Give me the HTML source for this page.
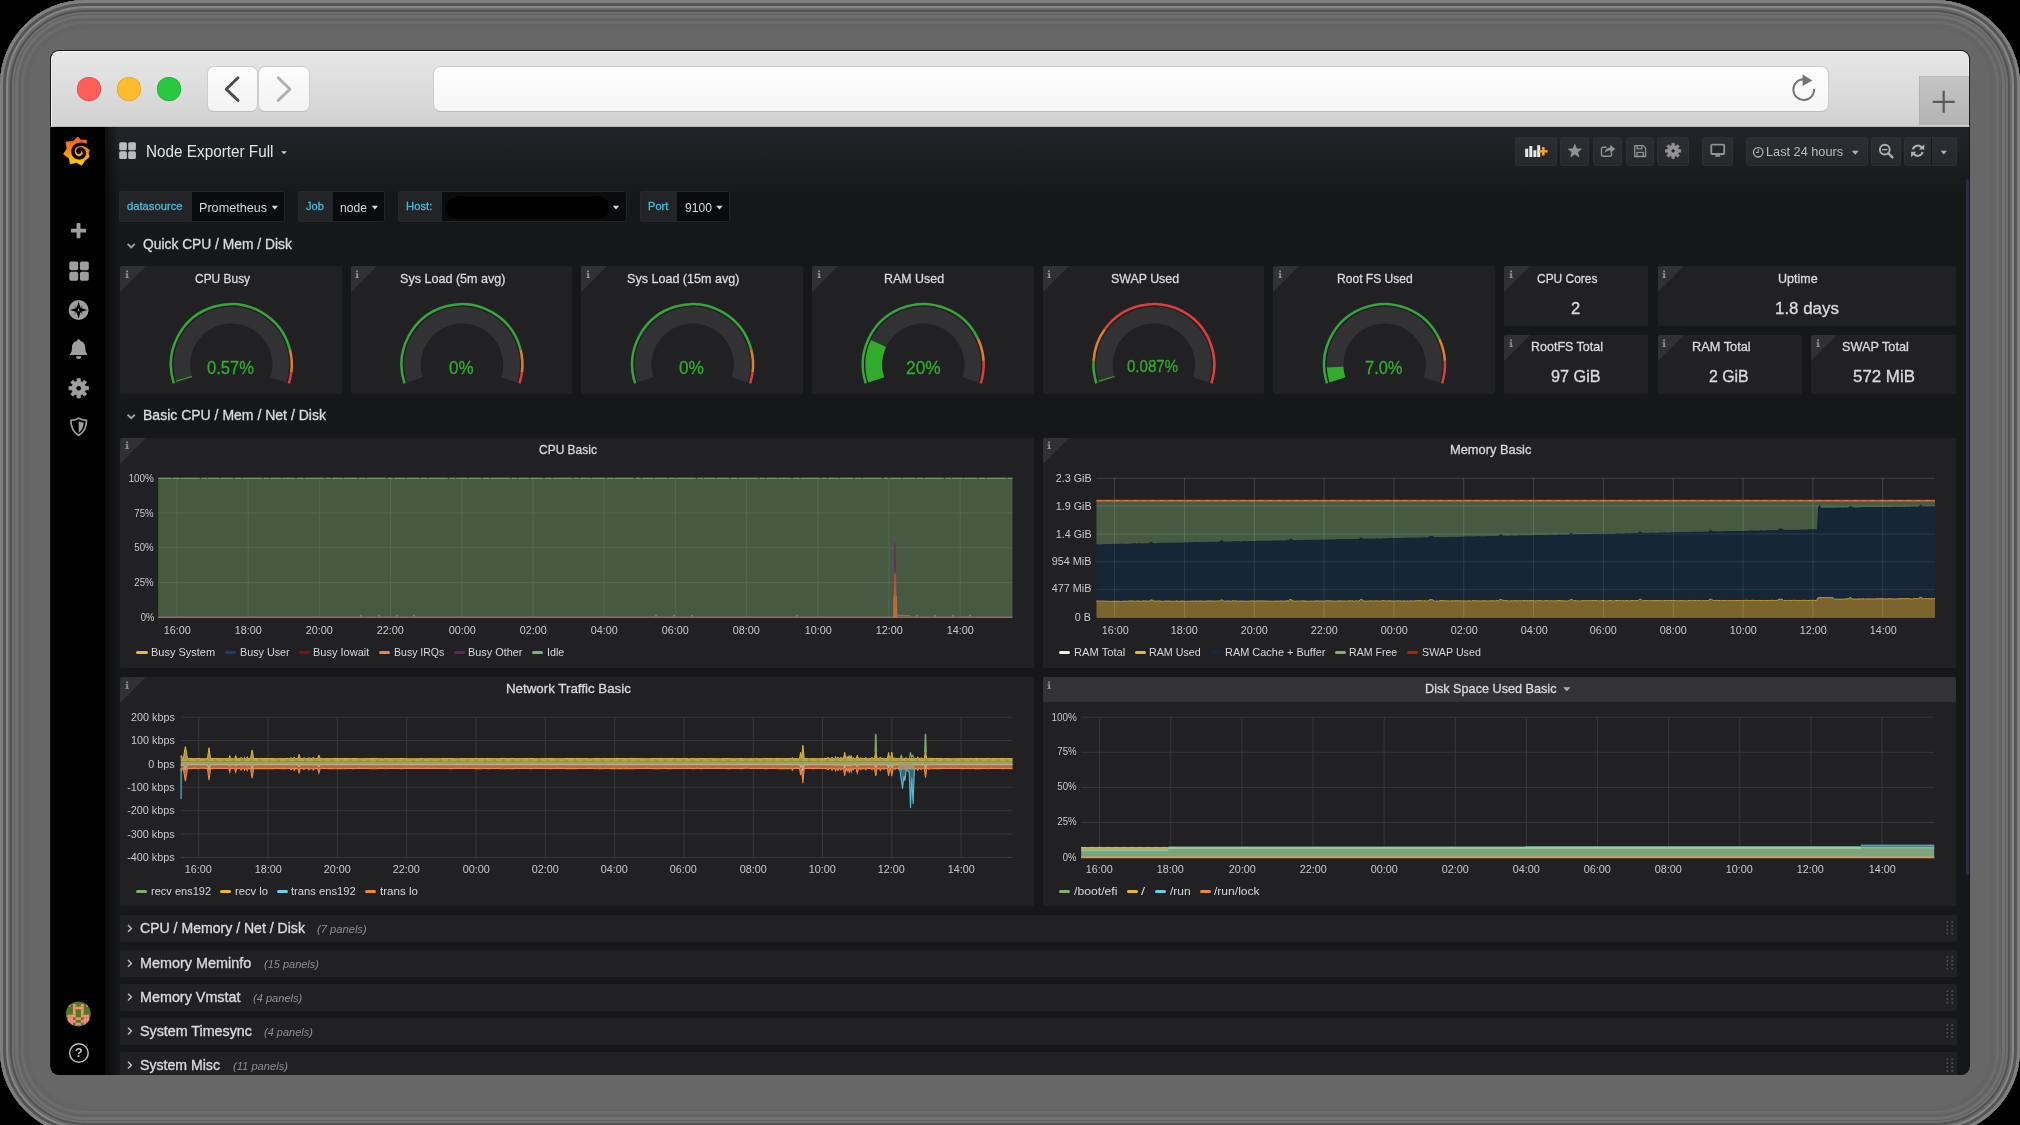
<!DOCTYPE html>
<html><head><meta charset="utf-8"><title>Node Exporter Full - Grafana</title>
<style>
*{box-sizing:border-box;margin:0;padding:0}
html,body{width:2020px;height:1125px;overflow:hidden;background:#000}
body{position:relative;font-family:"Liberation Sans",sans-serif}
#halo{position:absolute;left:0;top:0;width:2020px;height:1135px;border-radius:85px;background:#676767;
 box-shadow:inset 0 0 0 3px #808080,inset 0 0 0 6px #555,inset 0 0 0 8px #868686,inset 0 0 0 10px #6a6a6a,inset 0 0 0 12px #525252,inset 0 0 0 14px #707070,inset 0 0 0 15px #606060,inset 0 0 0 18px #707070,inset 0 0 0 21px #636363,inset 0 0 0 24px #6c6c6c,inset 0 0 0 29px #646464}
#win{position:absolute;left:50px;top:50px;width:1920px;height:1025px;border-radius:9px;overflow:hidden;background:#111}
#g{will-change:transform;position:absolute;left:-50px;top:-50px;width:2020px;height:1125px}
#g div,#g span,#g svg{position:absolute}
.t{white-space:nowrap;display:block}
#bar{left:50px;top:50px;width:1920px;height:77px;background:linear-gradient(#e7e7e7,#e1e1e1 30%,#d1d1d1);border:1px solid #1b1b1b;border-bottom:1px solid #b9b9b9;border-radius:9px 9px 0 0;box-shadow:inset 0 1px 0 #fbfbfb,inset 1px 0 0 #efefef,inset -1px 0 0 #efefef}
#appbg{left:51px;top:127px;width:1918px;height:948px;background:linear-gradient(180deg,#222326 6px,#161719 72px)}
.tl{width:24px;height:24px;border-radius:12px;top:77px}
.nb{top:66px;height:45.5px;background:linear-gradient(#fcfcfc,#f3f3f3);border:1px solid #cdcdcd;border-bottom-color:#bcbcbc;border-radius:7px}
#side{left:51px;top:127px;width:54px;height:950px;background:#000}
#sideg{left:105px;top:127px;width:14px;height:950px;background:linear-gradient(90deg,rgba(0,0,0,.55),rgba(0,0,0,0))}
.p{background:#212124;border-radius:2px}
.btn{top:137px;height:28.5px;background:linear-gradient(#2c2d30,#27282b);border:1px solid #2f3033;border-radius:2.5px}
.vl{top:191.3px;height:30.5px;background:#222428;border:1px solid #27282c;border-right:0;border-radius:2.5px 0 0 2.5px}
.vv{top:191.3px;height:30.5px;background:#0a0b0d;border:1px solid #232427;border-radius:0 2.5px 2.5px 0}
.row{left:119.5px;width:1837.5px;height:27.3px;background:#212124;border-radius:2px}
.crn{width:0;height:0;border-top:26px solid #313134;border-right:26px solid transparent;border-top-left-radius:2px}
</style></head>
<body>
<div id="halo"></div>
<div id="win"><div id="g">
<div id="appbg"></div><div id="bar"></div>
<div class="tl" style="left:77px;background:#fc5f57;box-shadow:inset 0 0 0 .6px #e2463f"></div>
<div class="tl" style="left:117px;background:#fdbc2e;box-shadow:inset 0 0 0 .6px #dfa023"></div>
<div class="tl" style="left:157px;background:#28c840;box-shadow:inset 0 0 0 .6px #1eab2c"></div>
<div class="nb" style="left:206.600px;width:51px"></div>
<div class="nb" style="left:258.400px;width:51.200px"></div>
<div class="nb" style="left:433px;width:1395.5px;border-radius:7.5px;background:linear-gradient(#fdfdfd,#f6f6f6)"></div>
<div style="left:1919px;top:76px;width:50px;height:48.800px;background:linear-gradient(#c5c5c5,#b3b3b3);border-left:1px solid #b1b1b1;border-top:1px solid #bbb"></div>
<svg width="2020" height="140" style="left:0;top:0" viewBox="0 0 2020 140" fill="none"><path d="M238 77.8L226.2 89.2L238 100.4" stroke="#4d4d4d" stroke-width="2.9" stroke-linecap="round" stroke-linejoin="round"/><path d="M278.2 77.8L290 89.2L278.2 100.4" stroke="#b0b0b0" stroke-width="2.9" stroke-linecap="round" stroke-linejoin="round"/><path d="M1814.09 89.06A10.4 10.4 0 1 1 1803.34 79.21" stroke="#737373" stroke-width="1.9"/><path d="M1802.6 74.4L1812.4 80.6L1802.6 86Z" fill="#737373"/><path d="M1932.7 101.8H1954.7M1943.7 90.8V112.8" stroke="#5a5a5a" stroke-width="2.200"/></svg>
<div id="side"></div><div id="sideg"></div>
<svg width="2020" height="1125" style="left:0;top:0" viewBox="0 0 2020 1125"><defs><linearGradient id="lg" x1="0" y1="0" x2="0" y2="1"><stop offset="0" stop-color="#f05a28"/><stop offset=".55" stop-color="#f8931c"/><stop offset="1" stop-color="#fbd013"/></linearGradient></defs><path d="M77.6 136.8L80.9 140.2L86.3 140.0L86.3 144.2L89.5 149.1L88.3 153.4L89.1 156.9L85.0 160.2L81.6 165.2L76.5 162.4L70.4 163.8L69.2 158.2L63.5 154.1L67.1 148.7L66.0 142.1L73.5 141.2Z" fill="url(#lg)" stroke="url(#lg)" stroke-width=".8" stroke-linejoin="round"/><path d="M89.33 147.73L87.88 146.46L86.31 145.57L84.81 144.91L83.38 144.4L81.94 144.18L80.55 144.22L79.25 144.5L78.02 144.73L76.86 145.17L75.81 145.79L74.89 146.58L74.13 147.51L73.55 148.54L73.17 149.64L72.99 150.78L73 151.93L73.17 153.04L73.54 154.11L74.07 155.09L74.77 155.96L75.6 156.69L76.54 157.26L77.56 157.66L78.63 157.87L79.72 157.9L80.77 157.67L81.75 157.26L82.63 156.7L83.38 156.01L83.99 155.21L84.44 154.33L84.48 153.32L84.32 152.38L84 151.54L83.63 150.82L83.16 150.22L82.62 149.75L82.03 149.42L81.48 149.16L80.93 149.02L80.38 148.98L79.87 149.05L79.41 149.2L79 149.36L78.65 149.59L78.35 149.86L78.12 150.17L77.97 150.5L77.88 150.84L77.86 151.17L77.9 151.48L78 151.75L78.16 151.99L78.34 152.17L78.55 152.3L78.76 152.37L78.96 152.39L79.15 152.36L79.31 152.29L79.43 152.2" fill="none" stroke="#000" stroke-width="3.400" stroke-linecap="round" stroke-linejoin="round"/><rect x="70.9" y="228.7" width="15.2" height="3.9" rx=".9" fill="#9e9e9e"/><rect x="76.55" y="223" width="3.9" height="15.2" rx=".9" fill="#9e9e9e"/><rect x="69.3" y="261.4" width="8.9" height="8.9" rx="1.8" fill="#9e9e9e"/><rect x="69.3" y="271.79999999999995" width="8.9" height="8.9" rx="1.8" fill="#9e9e9e"/><rect x="79.89999999999999" y="261.4" width="8.9" height="8.9" rx="1.8" fill="#9e9e9e"/><rect x="79.89999999999999" y="271.79999999999995" width="8.9" height="8.9" rx="1.8" fill="#9e9e9e"/><circle cx="78.6" cy="310" r="10" fill="#9e9e9e"/><path d="M78.6 301.4L80.6 308L87.2 310L80.6 312L78.6 318.6L76.6 312L70 310L76.6 308Z" fill="#000"/><path d="M73.6 305L77.6 308.4L76.9 309.1ZM83.6 305L80.3 309.1L79.6 308.4ZM73.6 315L76.9 310.9L77.6 311.6ZM83.6 315L79.6 311.6L80.3 310.9Z" fill="#000"/><circle cx="78.6" cy="310" r=".9" fill="#9e9e9e"/><path d="M78.6 339.2c1 0 1.5.7 1.5 1.5c3.6.9 5.2 3.8 5.2 7.4c0 3.2.6 4.6 1.9 5.8v1.2H70v-1.2c1.3-1.2 1.9-2.6 1.9-5.8c0-3.6 1.6-6.500 5.2-7.400c0-.8.5-1.5 1.500-1.500zM76 356.300h5.200a2.600 2.600 0 0 1-5.200 0z" fill="#9e9e9e"/><path d="M77.07 381.39L77.15 378.42L80.25 378.42L80.33 381.39L82.36 382.23L84.52 380.19L86.71 382.38L84.67 384.54L85.51 386.57L88.48 386.65L88.48 389.75L85.51 389.83L84.67 391.86L86.71 394.02L84.52 396.21L82.36 394.17L80.33 395.01L80.25 397.98L77.15 397.98L77.07 395.01L75.04 394.17L72.88 396.21L70.69 394.02L72.73 391.86L71.89 389.83L68.92 389.75L68.92 386.65L71.89 386.57L72.73 384.54L70.69 382.38L72.88 380.19L75.04 382.23Z" fill="#9e9e9e" stroke="#9e9e9e" stroke-width=".8" stroke-linejoin="round"/><circle cx="78.7" cy="388.2" r="2.3" fill="#000"/><path d="M78.7 418.2c2.600 1.400 5.200 2 7.800 2.100c0 7.200-2.900 12.300-7.800 15.100c-4.900-2.800-7.800-7.900-7.800-15.100c2.600-.1 5.200-.7 7.800-2.100z" fill="none" stroke="#9e9e9e" stroke-width="1.7" stroke-linejoin="round"/><path d="M78.7 421.200c1.700.8 3.300 1.200 5 1.400c-.3 4.900-2.100 8.200-5 10.400z" fill="#9e9e9e"/><clipPath id="avc"><circle cx="78.3" cy="1014" r="12.5"/></clipPath><circle cx="78.3" cy="1014" r="12.5" fill="#507a1f"/><g clip-path="url(#avc)"><rect x="67.6" y="1004" width="2.700" height="2.700" fill="#f98d80"/><rect x="72.94" y="1004" width="2.700" height="2.700" fill="#f98d80"/><rect x="80.95" y="1004" width="2.700" height="2.700" fill="#f98d80"/><rect x="86.29" y="1004" width="2.700" height="2.700" fill="#f98d80"/><rect x="72.94" y="1006.67" width="2.700" height="2.700" fill="#f98d80"/><rect x="75.61" y="1006.67" width="2.700" height="2.700" fill="#f98d80"/><rect x="78.28" y="1006.67" width="2.700" height="2.700" fill="#f98d80"/><rect x="80.95" y="1006.67" width="2.700" height="2.700" fill="#f98d80"/><rect x="72.94" y="1009.34" width="2.700" height="2.700" fill="#f98d80"/><rect x="80.95" y="1009.34" width="2.700" height="2.700" fill="#f98d80"/><rect x="72.94" y="1012.01" width="2.700" height="2.700" fill="#f98d80"/><rect x="80.95" y="1012.01" width="2.700" height="2.700" fill="#f98d80"/><rect x="67.6" y="1014.68" width="2.700" height="2.700" fill="#f98d80"/><rect x="70.27" y="1014.68" width="2.700" height="2.700" fill="#f98d80"/><rect x="72.94" y="1014.68" width="2.700" height="2.700" fill="#f98d80"/><rect x="80.95" y="1014.68" width="2.700" height="2.700" fill="#f98d80"/><rect x="83.62" y="1014.68" width="2.700" height="2.700" fill="#f98d80"/><rect x="86.29" y="1014.68" width="2.700" height="2.700" fill="#f98d80"/><rect x="67.6" y="1017.35" width="2.700" height="2.700" fill="#f98d80"/><rect x="70.27" y="1017.35" width="2.700" height="2.700" fill="#f98d80"/><rect x="75.61" y="1017.35" width="2.700" height="2.700" fill="#f98d80"/><rect x="78.28" y="1017.35" width="2.700" height="2.700" fill="#f98d80"/><rect x="83.62" y="1017.35" width="2.700" height="2.700" fill="#f98d80"/><rect x="86.29" y="1017.35" width="2.700" height="2.700" fill="#f98d80"/><rect x="67.6" y="1020.02" width="2.700" height="2.700" fill="#f98d80"/><rect x="70.27" y="1020.02" width="2.700" height="2.700" fill="#f98d80"/><rect x="72.94" y="1020.02" width="2.700" height="2.700" fill="#f98d80"/><rect x="80.95" y="1020.02" width="2.700" height="2.700" fill="#f98d80"/><rect x="83.62" y="1020.02" width="2.700" height="2.700" fill="#f98d80"/><rect x="86.29" y="1020.02" width="2.700" height="2.700" fill="#f98d80"/><rect x="70.27" y="1022.69" width="2.700" height="2.700" fill="#f98d80"/><rect x="75.61" y="1022.69" width="2.700" height="2.700" fill="#f98d80"/><rect x="78.28" y="1022.69" width="2.700" height="2.700" fill="#f98d80"/><rect x="83.62" y="1022.69" width="2.700" height="2.700" fill="#f98d80"/></g><circle cx="78.9" cy="1053" r="9.300" fill="none" stroke="#bdbdbd" stroke-width="1.500"/></svg>
<span class="t" style="left:75.08px;top:1045.4px;font-size:12.5px;line-height:16px;color:#c4c4c4;transform:scaleX(1.0000);transform-origin:50% 50%;font-weight:bold;">?</span>
<div class="btn" style="left:1515.4px;width:41.2px"></div>
<div class="btn" style="left:1560.4px;width:28.2px"></div>
<div class="btn" style="left:1593.2px;width:28.7px"></div>
<div class="btn" style="left:1626.2px;width:27.6px"></div>
<div class="btn" style="left:1657px;width:32px"></div>
<div class="btn" style="left:1702.2px;width:30.5px"></div>
<div class="btn" style="left:1746.4px;width:121.5px"></div>
<div class="btn" style="left:1871.2px;width:29.7px"></div>
<div class="btn" style="left:1904px;width:52.5px"></div>
<div style="left:1931.300px;top:138px;width:1px;height:26.500px;background:#19191b"></div>
<div class="vl" style="left:118.9px;width:72px"></div><div class="vv" style="left:190.9px;width:94.2px"></div>
<div class="vl" style="left:298.2px;width:33.9px"></div><div class="vv" style="left:332.1px;width:53px"></div>
<div class="vl" style="left:398px;width:42.5px"></div><div class="vv" style="left:440.5px;width:186.8px"></div>
<div class="vl" style="left:640px;width:35.7px"></div><div class="vv" style="left:675.7px;width:54.6px"></div>
<svg width="2020" height="500" style="left:0;top:0" viewBox="0 0 2020 500"><rect x="119.2" y="142.3" width="7.700" height="7.900" rx="1.500" fill="#b9bbbc"/><rect x="119.2" y="151.20000000000002" width="7.700" height="7.900" rx="1.500" fill="#b9bbbc"/><rect x="128.2" y="142.3" width="7.700" height="7.900" rx="1.500" fill="#b9bbbc"/><rect x="128.2" y="151.20000000000002" width="7.700" height="7.900" rx="1.500" fill="#b9bbbc"/><path d="M281.2 151.200h5.600l-2.800 3.100z" fill="#d0d0d0"/><rect x="1525.2" y="148.7" width="3" height="8.3" fill="#e8e8e8"/><rect x="1529.3" y="146" width="3" height="11" fill="#e8e8e8"/><rect x="1533.4" y="150.3" width="3" height="6.7" fill="#e8e8e8"/><rect x="1537.2" y="145.2" width="3" height="11.8" fill="#e8e8e8"/><path d="M1539 151.2H1547.600M1543.300 146.900V155.500" stroke="#f9a11b" stroke-width="2.500"/><path d="M1574.8 144.3L1576.5 148.85L1581.36 149.07L1577.56 152.1L1578.86 156.78L1574.8 154.1L1570.74 156.78L1572.04 152.1L1568.24 149.07L1573.1 148.85Z" fill="#929292" stroke="#929292" stroke-width=".8" stroke-linejoin="round"/><path d="M1606.600 147.200h-3.400a1.700 1.700 0 0 0-1.700 1.700v5.700a1.700 1.700 0 0 0 1.700 1.700h6.700a1.700 1.700 0 0 0 1.700-1.700v-2.200" fill="none" stroke="#929292" stroke-width="1.400"/><path d="M1604.600 153.400c.2-3.800 2.100-5.800 5.700-6v-2.600l4.800 4.200l-4.800 4.200v-2.600c-2.700-.1-4.400.7-5.700 2.800z" fill="#929292"/><path d="M1634.700 145.600h8.400l2.500 2.500v8.400h-10.900zM1637.100 145.600v3.300h4.700v-3.300M1637 156.500v-4.100h6.300v4.100" fill="none" stroke="#929292" stroke-width="1.300" stroke-linejoin="round"/><path d="M1671.82 145.55L1671.9 143.29L1674.3 143.29L1674.38 145.55L1675.97 146.21L1677.63 144.67L1679.33 146.37L1677.79 148.03L1678.45 149.62L1680.71 149.7L1680.71 152.1L1678.45 152.18L1677.79 153.77L1679.33 155.43L1677.63 157.13L1675.97 155.59L1674.38 156.25L1674.3 158.51L1671.9 158.51L1671.82 156.25L1670.23 155.59L1668.57 157.13L1666.87 155.43L1668.41 153.77L1667.75 152.18L1665.49 152.1L1665.49 149.7L1667.75 149.62L1668.41 148.03L1666.87 146.37L1668.57 144.67L1670.23 146.21Z" fill="#929292" stroke="#929292" stroke-width=".8" stroke-linejoin="round"/><circle cx="1673.1" cy="150.9" r="1.7" fill="#28292c"/><rect x="1711.300" y="144.700" width="12.900" height="9.300" rx=".8" fill="#222326" stroke="#929292" stroke-width="1.800"/><path d="M1715.800 155h3.900l.9 1.700h-5.700z" fill="#929292"/><circle cx="1758.200" cy="152.300" r="4.700" fill="none" stroke="#b0b0b0" stroke-width="1.300"/><path d="M1758.200 149.300v3.200h-2.200" fill="none" stroke="#b0b0b0" stroke-width="1.100"/><path d="M1851.800 150.800h7l-3.500 3.900z" fill="#b0b0b0"/><circle cx="1884.800" cy="149.600" r="4.900" fill="none" stroke="#b0b0b0" stroke-width="1.900"/><path d="M1888.400 153.300l4 4.100" stroke="#b0b0b0" stroke-width="2.300" stroke-linecap="round"/><path d="M1882.200 149.600h5.200" stroke="#b0b0b0" stroke-width="1.400"/><path d="M1912.77 149.38A5.1 5.1 0 0 1 1922.12 148.15" fill="none" stroke="#b0b0b0" stroke-width="2"/><path d="M1922.63 152.02A5.1 5.1 0 0 1 1913.28 153.25" fill="none" stroke="#b0b0b0" stroke-width="2"/><path d="M1924.300 144.200v5.400h-5.400zM1911.100 157.200v-5.400h5.400z" fill="#b0b0b0"/><path d="M1940.600 150.800h6.400l-3.200 3.600z" fill="#b0b0b0"/><path d="M271.6 205.800h6.400l-3.200 3.600z" fill="#d8d9da"/><path d="M371.7 205.800h6.400l-3.200 3.600z" fill="#d8d9da"/><path d="M612.8 205.800h6.400l-3.200 3.600z" fill="#d8d9da"/><path d="M716.3 205.800h6.400l-3.200 3.600z" fill="#d8d9da"/><path d="M127.600 243.9l3.600 3.500l3.600-3.500" fill="none" stroke="#a2a2a2" stroke-width="1.900"/><path d="M127.600 414.8l3.600 3.500l3.600-3.500" fill="none" stroke="#a2a2a2" stroke-width="1.900"/><path d="M446.300 208c0-6.500 3.500-10 9-10.800c3-1.800 8-1.400 11-.2c30-.8 80 .3 125-.3c4-1.200 9-.8 11.500 1c4.500 1.300 6.500 4.800 6.400 9.500c0 7-3.200 10.500-9 11c-30 1-110 .6-143 .400c-7-.1-10.900-3.600-10.900-10.600z" fill="#000"/></svg>
<span class="t" style="left:145.8px;top:140.7px;font-size:16.3px;line-height:21px;color:#e4e4e4;transform:scaleX(0.9390);transform-origin:0 50%;">Node Exporter Full</span>
<span class="t" style="left:1766.2px;top:143.2px;font-size:13.2px;line-height:17px;color:#bcbcbc;transform:scaleX(0.9652);transform-origin:0 50%;">Last 24 hours</span>
<span class="t" style="left:127.1px;top:198.2px;font-size:11.6px;line-height:15px;color:#44bcd8;transform:scaleX(0.9670);transform-origin:0 50%;-webkit-text-stroke:0.3px #44bcd8;">datasource</span>
<span class="t" style="left:199.4px;top:199.7px;font-size:12.7px;line-height:17px;color:#d8d9da;transform:scaleX(0.9945);transform-origin:0 50%;">Prometheus</span>
<span class="t" style="left:306.1px;top:198.2px;font-size:11.6px;line-height:15px;color:#44bcd8;transform:scaleX(0.9517);transform-origin:0 50%;-webkit-text-stroke:0.3px #44bcd8;">Job</span>
<span class="t" style="left:340.4px;top:199.7px;font-size:12.7px;line-height:17px;color:#d8d9da;transform:scaleX(0.9521);transform-origin:0 50%;">node</span>
<span class="t" style="left:406.3px;top:198.2px;font-size:11.6px;line-height:15px;color:#44bcd8;transform:scaleX(0.9714);transform-origin:0 50%;-webkit-text-stroke:0.3px #44bcd8;">Host:</span>
<span class="t" style="left:648px;top:198.2px;font-size:11.6px;line-height:15px;color:#44bcd8;transform:scaleX(0.9542);transform-origin:0 50%;-webkit-text-stroke:0.3px #44bcd8;">Port</span>
<span class="t" style="left:685.1px;top:199.7px;font-size:12.7px;line-height:17px;color:#d8d9da;transform:scaleX(0.9521);transform-origin:0 50%;">9100</span>
<span class="t" style="left:143.3px;top:235.4px;font-size:14.1px;line-height:18px;color:#d8d9da;transform:scaleX(0.9797);transform-origin:0 50%;-webkit-text-stroke:0.35px #d8d9da;">Quick CPU / Mem / Disk</span>
<span class="t" style="left:143.3px;top:406.3px;font-size:14.1px;line-height:18px;color:#d8d9da;transform:scaleX(0.9940);transform-origin:0 50%;-webkit-text-stroke:0.35px #d8d9da;">Basic CPU / Mem / Net / Disk</span>
<div class="p" style="left:120px;top:266.4px;width:221.7px;height:127.5px"></div>
<div class="crn" style="left:120px;top:266.4px"></div><svg width="5" height="9" viewBox="0 0 5 9" style="left:124.8px;top:269.8px"><path d="M1.100 .4h1.900v1.900h-1.900zM.5 3.300h2.600v3.600h.6v1h-3.200v-1h.8v-2.700h-.8z" fill="#8f8f8f"/></svg>
<span class="t" style="left:195.1px;top:270.1px;font-size:13px;line-height:17px;color:#d8d9da;transform:scaleX(0.9189);transform-origin:0 50%;-webkit-text-stroke:0.3px #d8d9da;">CPU Busy</span>
<span class="t" style="left:207.4px;top:355.9px;font-size:18.2px;line-height:24px;color:#32ac2d;transform:scaleX(0.9088);transform-origin:0 50%;-webkit-text-stroke:0.3px #32ac2d;">0.57%</span>
<div class="p" style="left:350.64px;top:266.4px;width:221.7px;height:127.5px"></div>
<div class="crn" style="left:350.64px;top:266.4px"></div><svg width="5" height="9" viewBox="0 0 5 9" style="left:355.44px;top:269.8px"><path d="M1.100 .4h1.900v1.900h-1.900zM.5 3.300h2.600v3.600h.6v1h-3.200v-1h.8v-2.700h-.8z" fill="#8f8f8f"/></svg>
<span class="t" style="left:400.2px;top:270.1px;font-size:13px;line-height:17px;color:#d8d9da;transform:scaleX(0.9670);transform-origin:0 50%;-webkit-text-stroke:0.3px #d8d9da;">Sys Load (5m avg)</span>
<span class="t" style="left:448.6px;top:355.9px;font-size:18.2px;line-height:24px;color:#32ac2d;transform:scaleX(0.9314);transform-origin:0 50%;-webkit-text-stroke:0.3px #32ac2d;">0%</span>
<div class="p" style="left:581.28px;top:266.4px;width:221.7px;height:127.5px"></div>
<div class="crn" style="left:581.28px;top:266.4px"></div><svg width="5" height="9" viewBox="0 0 5 9" style="left:586.08px;top:269.8px"><path d="M1.100 .4h1.900v1.900h-1.900zM.5 3.300h2.600v3.600h.6v1h-3.200v-1h.8v-2.700h-.8z" fill="#8f8f8f"/></svg>
<span class="t" style="left:627px;top:270.1px;font-size:13px;line-height:17px;color:#d8d9da;transform:scaleX(0.9662);transform-origin:0 50%;-webkit-text-stroke:0.3px #d8d9da;">Sys Load (15m avg)</span>
<span class="t" style="left:679.3px;top:355.9px;font-size:18.2px;line-height:24px;color:#32ac2d;transform:scaleX(0.9504);transform-origin:0 50%;-webkit-text-stroke:0.3px #32ac2d;">0%</span>
<div class="p" style="left:811.92px;top:266.4px;width:221.7px;height:127.5px"></div>
<div class="crn" style="left:811.92px;top:266.4px"></div><svg width="5" height="9" viewBox="0 0 5 9" style="left:816.72px;top:269.8px"><path d="M1.100 .4h1.900v1.900h-1.900zM.5 3.300h2.600v3.600h.6v1h-3.200v-1h.8v-2.700h-.8z" fill="#8f8f8f"/></svg>
<span class="t" style="left:884.2px;top:270.1px;font-size:13px;line-height:17px;color:#d8d9da;transform:scaleX(0.9563);transform-origin:0 50%;-webkit-text-stroke:0.3px #d8d9da;">RAM Used</span>
<span class="t" style="left:905.6px;top:355.9px;font-size:18.2px;line-height:24px;color:#32ac2d;transform:scaleX(0.9526);transform-origin:0 50%;-webkit-text-stroke:0.3px #32ac2d;">20%</span>
<div class="p" style="left:1042.56px;top:266.4px;width:221.7px;height:127.5px"></div>
<div class="crn" style="left:1042.56px;top:266.4px"></div><svg width="5" height="9" viewBox="0 0 5 9" style="left:1047.36px;top:269.8px"><path d="M1.100 .4h1.900v1.900h-1.900zM.5 3.300h2.600v3.600h.6v1h-3.200v-1h.8v-2.700h-.8z" fill="#8f8f8f"/></svg>
<span class="t" style="left:1111.3px;top:270.1px;font-size:13px;line-height:17px;color:#d8d9da;transform:scaleX(0.9507);transform-origin:0 50%;-webkit-text-stroke:0.3px #d8d9da;">SWAP Used</span>
<span class="t" style="left:1127.4px;top:355.9px;font-size:16.8px;line-height:22px;color:#32ac2d;transform:scaleX(0.8968);transform-origin:0 50%;-webkit-text-stroke:0.3px #32ac2d;">0.087%</span>
<div class="p" style="left:1273.2px;top:266.4px;width:221.7px;height:127.5px"></div>
<div class="crn" style="left:1273.2px;top:266.4px"></div><svg width="5" height="9" viewBox="0 0 5 9" style="left:1278px;top:269.8px"><path d="M1.100 .4h1.900v1.900h-1.900zM.5 3.300h2.600v3.600h.6v1h-3.200v-1h.8v-2.700h-.8z" fill="#8f8f8f"/></svg>
<span class="t" style="left:1337.3px;top:270.1px;font-size:13px;line-height:17px;color:#d8d9da;transform:scaleX(0.9284);transform-origin:0 50%;-webkit-text-stroke:0.3px #d8d9da;">Root FS Used</span>
<span class="t" style="left:1365.1px;top:355.9px;font-size:18.2px;line-height:24px;color:#32ac2d;transform:scaleX(0.9040);transform-origin:0 50%;-webkit-text-stroke:0.3px #32ac2d;">7.0%</span>
<div class="p" style="left:1503.8px;top:266.4px;width:144.3px;height:59.2px"></div>
<div class="crn" style="left:1503.8px;top:266.4px"></div><svg width="5" height="9" viewBox="0 0 5 9" style="left:1508.6px;top:269.8px"><path d="M1.100 .4h1.900v1.900h-1.900zM.5 3.300h2.600v3.600h.6v1h-3.200v-1h.8v-2.700h-.8z" fill="#8f8f8f"/></svg>
<span class="t" style="left:1537.1px;top:270px;font-size:13px;line-height:17px;color:#d8d9da;transform:scaleX(0.9188);transform-origin:0 50%;-webkit-text-stroke:0.3px #d8d9da;">CPU Cores</span>
<span class="t" style="left:1571.2px;top:297.9px;font-size:16.8px;line-height:22px;color:#d8d9da;transform:scaleX(0.9846);transform-origin:0 50%;-webkit-text-stroke:0.35px #d8d9da;">2</span>
<div class="p" style="left:1657.6px;top:266.4px;width:298.2px;height:59.2px"></div>
<div class="crn" style="left:1657.6px;top:266.4px"></div><svg width="5" height="9" viewBox="0 0 5 9" style="left:1662.4px;top:269.8px"><path d="M1.100 .4h1.900v1.900h-1.900zM.5 3.300h2.600v3.600h.6v1h-3.200v-1h.8v-2.700h-.8z" fill="#8f8f8f"/></svg>
<span class="t" style="left:1778.3px;top:270px;font-size:13px;line-height:17px;color:#d8d9da;transform:scaleX(0.9641);transform-origin:0 50%;-webkit-text-stroke:0.3px #d8d9da;">Uptime</span>
<span class="t" style="left:1774.5px;top:297.9px;font-size:16.8px;line-height:22px;color:#d8d9da;transform:scaleX(1.0062);transform-origin:0 50%;-webkit-text-stroke:0.35px #d8d9da;">1.8 days</span>
<div class="p" style="left:1503.8px;top:335.1px;width:144.3px;height:58.8px"></div>
<div class="crn" style="left:1503.8px;top:335.1px"></div><svg width="5" height="9" viewBox="0 0 5 9" style="left:1508.6px;top:338.5px"><path d="M1.100 .4h1.900v1.900h-1.900zM.5 3.300h2.600v3.600h.6v1h-3.200v-1h.8v-2.700h-.8z" fill="#8f8f8f"/></svg>
<span class="t" style="left:1531.1px;top:337.8px;font-size:13px;line-height:17px;color:#d8d9da;transform:scaleX(0.9612);transform-origin:0 50%;-webkit-text-stroke:0.3px #d8d9da;">RootFS Total</span>
<span class="t" style="left:1550.6px;top:365.9px;font-size:16.8px;line-height:22px;color:#d8d9da;transform:scaleX(0.9677);transform-origin:0 50%;-webkit-text-stroke:0.35px #d8d9da;">97 GiB</span>
<div class="p" style="left:1657.6px;top:335.1px;width:144.3px;height:58.8px"></div>
<div class="crn" style="left:1657.6px;top:335.1px"></div><svg width="5" height="9" viewBox="0 0 5 9" style="left:1662.4px;top:338.5px"><path d="M1.100 .4h1.900v1.900h-1.900zM.5 3.300h2.600v3.600h.6v1h-3.200v-1h.8v-2.700h-.8z" fill="#8f8f8f"/></svg>
<span class="t" style="left:1692.2px;top:337.8px;font-size:13px;line-height:17px;color:#d8d9da;transform:scaleX(0.9828);transform-origin:0 50%;-webkit-text-stroke:0.3px #d8d9da;">RAM Total</span>
<span class="t" style="left:1709.3px;top:365.9px;font-size:16.8px;line-height:22px;color:#d8d9da;transform:scaleX(0.9449);transform-origin:0 50%;-webkit-text-stroke:0.35px #d8d9da;">2 GiB</span>
<div class="p" style="left:1811.3px;top:335.1px;width:144.3px;height:58.8px"></div>
<div class="crn" style="left:1811.3px;top:335.1px"></div><svg width="5" height="9" viewBox="0 0 5 9" style="left:1816.1px;top:338.5px"><path d="M1.100 .4h1.900v1.900h-1.900zM.5 3.300h2.600v3.600h.6v1h-3.200v-1h.8v-2.700h-.8z" fill="#8f8f8f"/></svg>
<span class="t" style="left:1842.2px;top:337.8px;font-size:13px;line-height:17px;color:#d8d9da;transform:scaleX(0.9766);transform-origin:0 50%;-webkit-text-stroke:0.3px #d8d9da;">SWAP Total</span>
<span class="t" style="left:1852.9px;top:365.9px;font-size:16.8px;line-height:22px;color:#d8d9da;transform:scaleX(1.0060);transform-origin:0 50%;-webkit-text-stroke:0.35px #d8d9da;">572 MiB</span>
<div class="p" style="left:120px;top:437.8px;width:913.7px;height:229.8px"></div>
<div class="crn" style="left:120px;top:437.8px"></div><svg width="5" height="9" viewBox="0 0 5 9" style="left:124.8px;top:441.2px"><path d="M1.100 .4h1.900v1.900h-1.900zM.5 3.300h2.600v3.600h.6v1h-3.200v-1h.8v-2.700h-.8z" fill="#8f8f8f"/></svg>
<span class="t" style="left:539.4px;top:441.1px;font-size:13px;line-height:17px;color:#d8d9da;transform:scaleX(0.9213);transform-origin:0 50%;-webkit-text-stroke:0.3px #d8d9da;">CPU Basic</span>
<span class="t" style="left:125.1px;top:470.8px;font-size:11.3px;line-height:15px;color:#c9cacb;transform:scaleX(0.8789);transform-origin:100% 50%;">100%</span>
<span class="t" style="left:131.38px;top:505.55px;font-size:11.3px;line-height:15px;color:#c9cacb;transform:scaleX(0.8534);transform-origin:100% 50%;">75%</span>
<span class="t" style="left:131.38px;top:540.3px;font-size:11.3px;line-height:15px;color:#c9cacb;transform:scaleX(0.8534);transform-origin:100% 50%;">50%</span>
<span class="t" style="left:131.38px;top:575.05px;font-size:11.3px;line-height:15px;color:#c9cacb;transform:scaleX(0.8534);transform-origin:100% 50%;">25%</span>
<span class="t" style="left:137.67px;top:609.8px;font-size:11.3px;line-height:15px;color:#c9cacb;transform:scaleX(0.8388);transform-origin:100% 50%;">0%</span>
<span class="t" style="left:162.86px;top:622.8px;font-size:11.3px;line-height:15px;color:#c9cacb;transform:scaleX(0.9550);transform-origin:50% 50%;">16:00</span>
<span class="t" style="left:234.06px;top:622.8px;font-size:11.3px;line-height:15px;color:#c9cacb;transform:scaleX(0.9550);transform-origin:50% 50%;">18:00</span>
<span class="t" style="left:305.26px;top:622.8px;font-size:11.3px;line-height:15px;color:#c9cacb;transform:scaleX(0.9550);transform-origin:50% 50%;">20:00</span>
<span class="t" style="left:376.46px;top:622.8px;font-size:11.3px;line-height:15px;color:#c9cacb;transform:scaleX(0.9550);transform-origin:50% 50%;">22:00</span>
<span class="t" style="left:447.66px;top:622.8px;font-size:11.3px;line-height:15px;color:#c9cacb;transform:scaleX(0.9550);transform-origin:50% 50%;">00:00</span>
<span class="t" style="left:518.86px;top:622.8px;font-size:11.3px;line-height:15px;color:#c9cacb;transform:scaleX(0.9550);transform-origin:50% 50%;">02:00</span>
<span class="t" style="left:590.06px;top:622.8px;font-size:11.3px;line-height:15px;color:#c9cacb;transform:scaleX(0.9550);transform-origin:50% 50%;">04:00</span>
<span class="t" style="left:661.26px;top:622.8px;font-size:11.3px;line-height:15px;color:#c9cacb;transform:scaleX(0.9550);transform-origin:50% 50%;">06:00</span>
<span class="t" style="left:732.46px;top:622.8px;font-size:11.3px;line-height:15px;color:#c9cacb;transform:scaleX(0.9550);transform-origin:50% 50%;">08:00</span>
<span class="t" style="left:803.66px;top:622.8px;font-size:11.3px;line-height:15px;color:#c9cacb;transform:scaleX(0.9550);transform-origin:50% 50%;">10:00</span>
<span class="t" style="left:874.86px;top:622.8px;font-size:11.3px;line-height:15px;color:#c9cacb;transform:scaleX(0.9550);transform-origin:50% 50%;">12:00</span>
<span class="t" style="left:946.06px;top:622.8px;font-size:11.3px;line-height:15px;color:#c9cacb;transform:scaleX(0.9550);transform-origin:50% 50%;">14:00</span>
<div style="left:135.67px;top:651.2px;width:11.88px;height:3px;border-radius:1.500px;background:#eab839"></div>
<span class="t" style="left:151.11px;top:644.8px;font-size:11.2px;line-height:15px;color:#d8d9da;transform:scaleX(0.9818);transform-origin:0 50%;">Busy System</span>
<div style="left:225.02px;top:651.2px;width:10.93px;height:3px;border-radius:1.500px;background:#0a437c"></div>
<span class="t" style="left:240.23px;top:644.8px;font-size:11.2px;line-height:15px;color:#d8d9da;transform:scaleX(0.9615);transform-origin:0 50%;">Busy User</span>
<div style="left:298.93px;top:651.2px;width:10.69px;height:3px;border-radius:1.500px;background:#890f02"></div>
<span class="t" style="left:313.18px;top:644.8px;font-size:11.2px;line-height:15px;color:#d8d9da;transform:scaleX(0.9835);transform-origin:0 50%;">Busy Iowait</span>
<div style="left:378.54px;top:651.2px;width:11.88px;height:3px;border-radius:1.500px;background:#ef843c"></div>
<span class="t" style="left:394.22px;top:644.8px;font-size:11.2px;line-height:15px;color:#d8d9da;transform:scaleX(0.9413);transform-origin:0 50%;">Busy IRQs</span>
<div style="left:453.63px;top:651.2px;width:11.41px;height:3px;border-radius:1.500px;background:#6d1f62"></div>
<span class="t" style="left:468.37px;top:644.8px;font-size:11.2px;line-height:15px;color:#d8d9da;transform:scaleX(0.9714);transform-origin:0 50%;">Busy Other</span>
<div style="left:531.82px;top:651.2px;width:11.17px;height:3px;border-radius:1.500px;background:#7eb26d"></div>
<span class="t" style="left:547.26px;top:644.8px;font-size:11.2px;line-height:15px;color:#d8d9da;transform:scaleX(0.9607);transform-origin:0 50%;">Idle</span>
<div class="p" style="left:1042.6px;top:437.8px;width:913.7px;height:229.8px"></div>
<div class="crn" style="left:1042.6px;top:437.8px"></div><svg width="5" height="9" viewBox="0 0 5 9" style="left:1047.4px;top:441.2px"><path d="M1.100 .4h1.900v1.900h-1.900zM.5 3.300h2.600v3.600h.6v1h-3.200v-1h.8v-2.700h-.8z" fill="#8f8f8f"/></svg>
<span class="t" style="left:1450.2px;top:441.1px;font-size:13px;line-height:17px;color:#d8d9da;transform:scaleX(0.9885);transform-origin:0 50%;-webkit-text-stroke:0.3px #d8d9da;">Memory Basic</span>
<span class="t" style="left:1053.61px;top:471px;font-size:11.3px;line-height:15px;color:#c9cacb;transform:scaleX(0.9550);transform-origin:100% 50%;">2.3 GiB</span>
<span class="t" style="left:1053.61px;top:498.88px;font-size:11.3px;line-height:15px;color:#c9cacb;transform:scaleX(0.9550);transform-origin:100% 50%;">1.9 GiB</span>
<span class="t" style="left:1053.61px;top:526.76px;font-size:11.3px;line-height:15px;color:#c9cacb;transform:scaleX(0.9550);transform-origin:100% 50%;">1.4 GiB</span>
<span class="t" style="left:1049.85px;top:553.54px;font-size:11.3px;line-height:15px;color:#c9cacb;transform:scaleX(0.9550);transform-origin:100% 50%;">954 MiB</span>
<span class="t" style="left:1049.85px;top:581.42px;font-size:11.3px;line-height:15px;color:#c9cacb;transform:scaleX(0.9550);transform-origin:100% 50%;">477 MiB</span>
<span class="t" style="left:1074.34px;top:610.4px;font-size:11.3px;line-height:15px;color:#c9cacb;transform:scaleX(0.9550);transform-origin:100% 50%;">0 B</span>
<span class="t" style="left:1100.66px;top:622.8px;font-size:11.3px;line-height:15px;color:#c9cacb;transform:scaleX(0.9550);transform-origin:50% 50%;">16:00</span>
<span class="t" style="left:1170.49px;top:622.8px;font-size:11.3px;line-height:15px;color:#c9cacb;transform:scaleX(0.9550);transform-origin:50% 50%;">18:00</span>
<span class="t" style="left:1240.32px;top:622.8px;font-size:11.3px;line-height:15px;color:#c9cacb;transform:scaleX(0.9550);transform-origin:50% 50%;">20:00</span>
<span class="t" style="left:1310.15px;top:622.8px;font-size:11.3px;line-height:15px;color:#c9cacb;transform:scaleX(0.9550);transform-origin:50% 50%;">22:00</span>
<span class="t" style="left:1379.98px;top:622.8px;font-size:11.3px;line-height:15px;color:#c9cacb;transform:scaleX(0.9550);transform-origin:50% 50%;">00:00</span>
<span class="t" style="left:1449.81px;top:622.8px;font-size:11.3px;line-height:15px;color:#c9cacb;transform:scaleX(0.9550);transform-origin:50% 50%;">02:00</span>
<span class="t" style="left:1519.64px;top:622.8px;font-size:11.3px;line-height:15px;color:#c9cacb;transform:scaleX(0.9550);transform-origin:50% 50%;">04:00</span>
<span class="t" style="left:1589.47px;top:622.8px;font-size:11.3px;line-height:15px;color:#c9cacb;transform:scaleX(0.9550);transform-origin:50% 50%;">06:00</span>
<span class="t" style="left:1659.3px;top:622.8px;font-size:11.3px;line-height:15px;color:#c9cacb;transform:scaleX(0.9550);transform-origin:50% 50%;">08:00</span>
<span class="t" style="left:1729.13px;top:622.8px;font-size:11.3px;line-height:15px;color:#c9cacb;transform:scaleX(0.9550);transform-origin:50% 50%;">10:00</span>
<span class="t" style="left:1798.96px;top:622.8px;font-size:11.3px;line-height:15px;color:#c9cacb;transform:scaleX(0.9550);transform-origin:50% 50%;">12:00</span>
<span class="t" style="left:1868.79px;top:622.8px;font-size:11.3px;line-height:15px;color:#c9cacb;transform:scaleX(0.9550);transform-origin:50% 50%;">14:00</span>
<div style="left:1058.99px;top:651.2px;width:10.93px;height:3px;border-radius:1.500px;background:#e8f5e0"></div>
<span class="t" style="left:1074.2px;top:644.8px;font-size:11.2px;line-height:15px;color:#d8d9da;transform:scaleX(0.9976);transform-origin:0 50%;">RAM Total</span>
<div style="left:1135.04px;top:651.2px;width:10.93px;height:3px;border-radius:1.500px;background:#eab839"></div>
<span class="t" style="left:1149.3px;top:644.8px;font-size:11.2px;line-height:15px;color:#d8d9da;transform:scaleX(0.9568);transform-origin:0 50%;">RAM Used</span>
<div style="left:1210.61px;top:651.2px;width:10.93px;height:3px;border-radius:1.500px;background:#052b51"></div>
<span class="t" style="left:1225.34px;top:644.8px;font-size:11.2px;line-height:15px;color:#d8d9da;transform:scaleX(0.9777);transform-origin:0 50%;">RAM Cache + Buffer</span>
<div style="left:1335.13px;top:651.2px;width:10.93px;height:3px;border-radius:1.500px;background:#7eb26d"></div>
<span class="t" style="left:1349.39px;top:644.8px;font-size:11.2px;line-height:15px;color:#d8d9da;transform:scaleX(0.9454);transform-origin:0 50%;">RAM Free</span>
<div style="left:1407.38px;top:651.2px;width:10.93px;height:3px;border-radius:1.500px;background:#bf1b00"></div>
<span class="t" style="left:1422.11px;top:644.8px;font-size:11.2px;line-height:15px;color:#d8d9da;transform:scaleX(0.9564);transform-origin:0 50%;">SWAP Used</span>
<div class="p" style="left:120px;top:677.1px;width:913.7px;height:229.4px"></div>
<div class="crn" style="left:120px;top:677.1px"></div><svg width="5" height="9" viewBox="0 0 5 9" style="left:124.8px;top:680.5px"><path d="M1.100 .4h1.900v1.900h-1.900zM.5 3.300h2.600v3.600h.6v1h-3.200v-1h.8v-2.700h-.8z" fill="#8f8f8f"/></svg>
<span class="t" style="left:505.7px;top:680.1px;font-size:13px;line-height:17px;color:#d8d9da;transform:scaleX(1.0250);transform-origin:0 50%;-webkit-text-stroke:0.3px #d8d9da;">Network Traffic Basic</span>
<span class="t" style="left:129.24px;top:709.9px;font-size:11.3px;line-height:15px;color:#c9cacb;transform:scaleX(0.9550);transform-origin:100% 50%;">200 kbps</span>
<span class="t" style="left:129.24px;top:733.27px;font-size:11.3px;line-height:15px;color:#c9cacb;transform:scaleX(0.9550);transform-origin:100% 50%;">100 kbps</span>
<span class="t" style="left:147.46px;top:756.63px;font-size:11.3px;line-height:15px;color:#c9cacb;transform:scaleX(0.9550);transform-origin:100% 50%;">0 bps</span>
<span class="t" style="left:125.47px;top:780px;font-size:11.3px;line-height:15px;color:#c9cacb;transform:scaleX(0.9550);transform-origin:100% 50%;">-100 kbps</span>
<span class="t" style="left:125.47px;top:803.37px;font-size:11.3px;line-height:15px;color:#c9cacb;transform:scaleX(0.9550);transform-origin:100% 50%;">-200 kbps</span>
<span class="t" style="left:125.47px;top:826.73px;font-size:11.3px;line-height:15px;color:#c9cacb;transform:scaleX(0.9550);transform-origin:100% 50%;">-300 kbps</span>
<span class="t" style="left:125.47px;top:850.1px;font-size:11.3px;line-height:15px;color:#c9cacb;transform:scaleX(0.9550);transform-origin:100% 50%;">-400 kbps</span>
<span class="t" style="left:184.36px;top:861.7px;font-size:11.3px;line-height:15px;color:#c9cacb;transform:scaleX(0.9550);transform-origin:50% 50%;">16:00</span>
<span class="t" style="left:253.66px;top:861.7px;font-size:11.3px;line-height:15px;color:#c9cacb;transform:scaleX(0.9550);transform-origin:50% 50%;">18:00</span>
<span class="t" style="left:322.96px;top:861.7px;font-size:11.3px;line-height:15px;color:#c9cacb;transform:scaleX(0.9550);transform-origin:50% 50%;">20:00</span>
<span class="t" style="left:392.26px;top:861.7px;font-size:11.3px;line-height:15px;color:#c9cacb;transform:scaleX(0.9550);transform-origin:50% 50%;">22:00</span>
<span class="t" style="left:461.56px;top:861.7px;font-size:11.3px;line-height:15px;color:#c9cacb;transform:scaleX(0.9550);transform-origin:50% 50%;">00:00</span>
<span class="t" style="left:530.86px;top:861.7px;font-size:11.3px;line-height:15px;color:#c9cacb;transform:scaleX(0.9550);transform-origin:50% 50%;">02:00</span>
<span class="t" style="left:600.16px;top:861.7px;font-size:11.3px;line-height:15px;color:#c9cacb;transform:scaleX(0.9550);transform-origin:50% 50%;">04:00</span>
<span class="t" style="left:669.46px;top:861.7px;font-size:11.3px;line-height:15px;color:#c9cacb;transform:scaleX(0.9550);transform-origin:50% 50%;">06:00</span>
<span class="t" style="left:738.76px;top:861.7px;font-size:11.3px;line-height:15px;color:#c9cacb;transform:scaleX(0.9550);transform-origin:50% 50%;">08:00</span>
<span class="t" style="left:808.06px;top:861.7px;font-size:11.3px;line-height:15px;color:#c9cacb;transform:scaleX(0.9550);transform-origin:50% 50%;">10:00</span>
<span class="t" style="left:877.36px;top:861.7px;font-size:11.3px;line-height:15px;color:#c9cacb;transform:scaleX(0.9550);transform-origin:50% 50%;">12:00</span>
<span class="t" style="left:946.66px;top:861.7px;font-size:11.3px;line-height:15px;color:#c9cacb;transform:scaleX(0.9550);transform-origin:50% 50%;">14:00</span>
<div style="left:135.67px;top:890.1px;width:11.41px;height:3px;border-radius:1.500px;background:#7eb26d"></div>
<span class="t" style="left:150.87px;top:883.7px;font-size:11.2px;line-height:15px;color:#d8d9da;transform:scaleX(0.9854);transform-origin:0 50%;">recv ens192</span>
<div style="left:219.79px;top:890.1px;width:11.41px;height:3px;border-radius:1.500px;background:#eab839"></div>
<span class="t" style="left:235px;top:883.7px;font-size:11.2px;line-height:15px;color:#d8d9da;transform:scaleX(1.0014);transform-origin:0 50%;">recv lo</span>
<div style="left:277.06px;top:890.1px;width:10.69px;height:3px;border-radius:1.500px;background:#6ed0e0"></div>
<span class="t" style="left:291.08px;top:883.7px;font-size:11.2px;line-height:15px;color:#d8d9da;transform:scaleX(1.0019);transform-origin:0 50%;">trans ens192</span>
<div style="left:364.99px;top:890.1px;width:11.17px;height:3px;border-radius:1.500px;background:#ef843c"></div>
<span class="t" style="left:380.2px;top:883.7px;font-size:11.2px;line-height:15px;color:#d8d9da;transform:scaleX(1.0352);transform-origin:0 50%;">trans lo</span>
<div class="p" style="left:1042.6px;top:677.1px;width:913.7px;height:229.4px"></div>
<div style="left:1042.6px;top:677.1px;width:913.7px;height:24.500px;background:#333336;border-radius:2px 2px 0 0"></div>
<svg width="5" height="9" viewBox="0 0 5 9" style="left:1047.4px;top:680.5px"><path d="M1.100 .4h1.900v1.900h-1.900zM.5 3.300h2.600v3.600h.6v1h-3.200v-1h.8v-2.700h-.8z" fill="#8f8f8f"/></svg>
<span class="t" style="left:1425px;top:680.1px;font-size:13px;line-height:17px;color:#d8d9da;transform:scaleX(0.9733);transform-origin:0 50%;-webkit-text-stroke:0.3px #d8d9da;">Disk Space Used Basic</span>
<span class="t" style="left:1047.7px;top:709.5px;font-size:11.3px;line-height:15px;color:#c9cacb;transform:scaleX(0.8789);transform-origin:100% 50%;">100%</span>
<span class="t" style="left:1053.98px;top:744.1px;font-size:11.3px;line-height:15px;color:#c9cacb;transform:scaleX(0.8534);transform-origin:100% 50%;">75%</span>
<span class="t" style="left:1053.98px;top:779.2px;font-size:11.3px;line-height:15px;color:#c9cacb;transform:scaleX(0.8534);transform-origin:100% 50%;">50%</span>
<span class="t" style="left:1053.98px;top:814.3px;font-size:11.3px;line-height:15px;color:#c9cacb;transform:scaleX(0.8534);transform-origin:100% 50%;">25%</span>
<span class="t" style="left:1060.27px;top:849.9px;font-size:11.3px;line-height:15px;color:#c9cacb;transform:scaleX(0.8388);transform-origin:100% 50%;">0%</span>
<span class="t" style="left:1085.26px;top:861.7px;font-size:11.3px;line-height:15px;color:#c9cacb;transform:scaleX(0.9550);transform-origin:50% 50%;">16:00</span>
<span class="t" style="left:1156.38px;top:861.7px;font-size:11.3px;line-height:15px;color:#c9cacb;transform:scaleX(0.9550);transform-origin:50% 50%;">18:00</span>
<span class="t" style="left:1227.5px;top:861.7px;font-size:11.3px;line-height:15px;color:#c9cacb;transform:scaleX(0.9550);transform-origin:50% 50%;">20:00</span>
<span class="t" style="left:1298.62px;top:861.7px;font-size:11.3px;line-height:15px;color:#c9cacb;transform:scaleX(0.9550);transform-origin:50% 50%;">22:00</span>
<span class="t" style="left:1369.74px;top:861.7px;font-size:11.3px;line-height:15px;color:#c9cacb;transform:scaleX(0.9550);transform-origin:50% 50%;">00:00</span>
<span class="t" style="left:1440.86px;top:861.7px;font-size:11.3px;line-height:15px;color:#c9cacb;transform:scaleX(0.9550);transform-origin:50% 50%;">02:00</span>
<span class="t" style="left:1511.98px;top:861.7px;font-size:11.3px;line-height:15px;color:#c9cacb;transform:scaleX(0.9550);transform-origin:50% 50%;">04:00</span>
<span class="t" style="left:1583.1px;top:861.7px;font-size:11.3px;line-height:15px;color:#c9cacb;transform:scaleX(0.9550);transform-origin:50% 50%;">06:00</span>
<span class="t" style="left:1654.22px;top:861.7px;font-size:11.3px;line-height:15px;color:#c9cacb;transform:scaleX(0.9550);transform-origin:50% 50%;">08:00</span>
<span class="t" style="left:1725.34px;top:861.7px;font-size:11.3px;line-height:15px;color:#c9cacb;transform:scaleX(0.9550);transform-origin:50% 50%;">10:00</span>
<span class="t" style="left:1796.46px;top:861.7px;font-size:11.3px;line-height:15px;color:#c9cacb;transform:scaleX(0.9550);transform-origin:50% 50%;">12:00</span>
<span class="t" style="left:1867.58px;top:861.7px;font-size:11.3px;line-height:15px;color:#c9cacb;transform:scaleX(0.9550);transform-origin:50% 50%;">14:00</span>
<div style="left:1058.99px;top:890.1px;width:10.93px;height:3px;border-radius:1.500px;background:#7eb26d"></div>
<span class="t" style="left:1074.2px;top:883.7px;font-size:11.2px;line-height:15px;color:#d8d9da;transform:scaleX(1.0913);transform-origin:0 50%;">/boot/efi</span>
<div style="left:1126.96px;top:890.1px;width:11.17px;height:3px;border-radius:1.500px;background:#eab839"></div>
<span class="t" style="left:1141.22px;top:883.7px;font-size:11.2px;line-height:15px;color:#d8d9da;transform:scaleX(1.2983);transform-origin:0 50%;">/</span>
<div style="left:1155.24px;top:890.1px;width:10.93px;height:3px;border-radius:1.500px;background:#6ed0e0"></div>
<span class="t" style="left:1170.21px;top:883.7px;font-size:11.2px;line-height:15px;color:#d8d9da;transform:scaleX(1.0713);transform-origin:0 50%;">/run</span>
<div style="left:1200.15px;top:890.1px;width:10.93px;height:3px;border-radius:1.500px;background:#ef843c"></div>
<span class="t" style="left:1214.41px;top:883.7px;font-size:11.2px;line-height:15px;color:#d8d9da;transform:scaleX(1.0779);transform-origin:0 50%;">/run/lock</span>
<div class="row" style="top:914.8px"></div>
<span class="t" style="left:140px;top:919.4px;font-size:14.1px;line-height:18px;color:#d8d9da;transform:scaleX(0.9982);transform-origin:0 50%;-webkit-text-stroke:0.35px #d8d9da;">CPU / Memory / Net / Disk</span>
<span class="t" style="left:317px;top:921.9px;font-size:11.4px;line-height:15px;color:#8e8e8e;transform:scaleX(0.9804);transform-origin:0 50%;font-style:italic;">(7 panels)</span>
<div class="row" style="top:949.8px"></div>
<span class="t" style="left:140px;top:954.4px;font-size:14.1px;line-height:18px;color:#d8d9da;transform:scaleX(1.0215);transform-origin:0 50%;-webkit-text-stroke:0.35px #d8d9da;">Memory Meminfo</span>
<span class="t" style="left:264.25px;top:956.9px;font-size:11.4px;line-height:15px;color:#8e8e8e;transform:scaleX(0.9643);transform-origin:0 50%;font-style:italic;">(15 panels)</span>
<div class="row" style="top:984px"></div>
<span class="t" style="left:140px;top:988.1px;font-size:14.1px;line-height:18px;color:#d8d9da;transform:scaleX(1.0181);transform-origin:0 50%;-webkit-text-stroke:0.35px #d8d9da;">Memory Vmstat</span>
<span class="t" style="left:253.25px;top:990.6px;font-size:11.4px;line-height:15px;color:#8e8e8e;transform:scaleX(0.9715);transform-origin:0 50%;font-style:italic;">(4 panels)</span>
<div class="row" style="top:1018px"></div>
<span class="t" style="left:140px;top:1022.1px;font-size:14.1px;line-height:18px;color:#d8d9da;transform:scaleX(1.0138);transform-origin:0 50%;-webkit-text-stroke:0.35px #d8d9da;">System Timesync</span>
<span class="t" style="left:264.25px;top:1024.6px;font-size:11.4px;line-height:15px;color:#8e8e8e;transform:scaleX(0.9666);transform-origin:0 50%;font-style:italic;">(4 panels)</span>
<div class="row" style="top:1052.1px"></div>
<span class="t" style="left:140px;top:1056.2px;font-size:14.1px;line-height:18px;color:#d8d9da;transform:scaleX(1.0012);transform-origin:0 50%;-webkit-text-stroke:0.35px #d8d9da;">System Misc</span>
<span class="t" style="left:232.5px;top:1058.7px;font-size:11.4px;line-height:15px;color:#8e8e8e;transform:scaleX(0.9789);transform-origin:0 50%;font-style:italic;">(11 panels)</span>
<div style="left:1965.800px;top:178.500px;width:3.700px;height:696px;background:#2c2e3c;border-radius:2px"></div>
<svg width="2020" height="1125" style="left:0;top:0" viewBox="0 0 2020 1125"><path d="M184.27 379.9A49.5 49.5 0 1 1 278.43 379.9" fill="none" stroke="#323235" stroke-width="16.600"/>
<path d="M173.86 383.28A60.45 60.45 0 1 1 289.9 349.57" fill="none" stroke="#36a53b" stroke-width="2.500"/>
<path d="M289.9 349.57A60.45 60.45 0 0 1 291.32 372.18" fill="none" stroke="#dd7f2e" stroke-width="2.500"/>
<path d="M291.32 372.18A60.45 60.45 0 0 1 288.84 383.28" fill="none" stroke="#dc3d3d" stroke-width="2.500"/>
<path d="M191.9 376.49L176.01 381.28" stroke="#32ac2d" stroke-width="1.100"/>
<path d="M414.91 379.9A49.5 49.5 0 1 1 509.07 379.9" fill="none" stroke="#323235" stroke-width="16.600"/>
<path d="M404.5 383.28A60.45 60.45 0 1 1 520.54 349.57" fill="none" stroke="#36a53b" stroke-width="2.500"/>
<path d="M520.54 349.57A60.45 60.45 0 0 1 521.96 372.18" fill="none" stroke="#dd7f2e" stroke-width="2.500"/>
<path d="M521.96 372.18A60.45 60.45 0 0 1 519.48 383.28" fill="none" stroke="#dc3d3d" stroke-width="2.500"/>
<path d="M645.55 379.9A49.5 49.5 0 1 1 739.71 379.9" fill="none" stroke="#323235" stroke-width="16.600"/>
<path d="M635.14 383.28A60.45 60.45 0 1 1 751.18 349.57" fill="none" stroke="#36a53b" stroke-width="2.500"/>
<path d="M751.18 349.57A60.45 60.45 0 0 1 752.6 372.18" fill="none" stroke="#dd7f2e" stroke-width="2.500"/>
<path d="M752.6 372.18A60.45 60.45 0 0 1 750.12 383.28" fill="none" stroke="#dc3d3d" stroke-width="2.500"/>
<path d="M876.19 379.9A49.5 49.5 0 1 1 970.35 379.9" fill="none" stroke="#323235" stroke-width="16.600"/>
<path d="M865.78 383.28A60.45 60.45 0 0 1 977.97 338.86" fill="none" stroke="#36a53b" stroke-width="2.500"/>
<path d="M977.97 338.86A60.45 60.45 0 0 1 983.6 360.8" fill="none" stroke="#dd7f2e" stroke-width="2.500"/>
<path d="M983.6 360.8A60.45 60.45 0 0 1 980.76 383.28" fill="none" stroke="#dc3d3d" stroke-width="2.500"/>
<path d="M876.19 379.9A49.5 49.5 0 0 1 878.48 343.52" fill="none" stroke="#32ac2d" stroke-width="16.600"/>
<path d="M1106.83 379.9A49.5 49.5 0 1 1 1200.99 379.9" fill="none" stroke="#323235" stroke-width="16.600"/>
<path d="M1096.42 383.28A60.45 60.45 0 0 1 1093.58 360.8" fill="none" stroke="#36a53b" stroke-width="2.500"/>
<path d="M1093.58 360.8A60.45 60.45 0 0 1 1105 329.07" fill="none" stroke="#dd7f2e" stroke-width="2.500"/>
<path d="M1105 329.07A60.45 60.45 0 0 1 1211.4 383.28" fill="none" stroke="#dc3d3d" stroke-width="2.500"/>
<path d="M1114.47 376.51L1098.58 381.31" stroke="#32ac2d" stroke-width="1.100"/>
<path d="M1337.47 379.9A49.5 49.5 0 1 1 1431.63 379.9" fill="none" stroke="#323235" stroke-width="16.600"/>
<path d="M1327.06 383.28A60.45 60.45 0 0 1 1439.25 338.86" fill="none" stroke="#36a53b" stroke-width="2.500"/>
<path d="M1439.25 338.86A60.45 60.45 0 0 1 1444.88 360.8" fill="none" stroke="#dd7f2e" stroke-width="2.500"/>
<path d="M1444.88 360.8A60.45 60.45 0 0 1 1442.04 383.28" fill="none" stroke="#dc3d3d" stroke-width="2.500"/>
<path d="M1337.47 379.9A49.5 49.5 0 0 1 1335.11 367.09" fill="none" stroke="#32ac2d" stroke-width="16.600"/>
<path d="M177 477.9V617.6M248.2 477.9V617.6M319.4 477.9V617.6M390.6 477.9V617.6M461.8 477.9V617.6M533 477.9V617.6M604.2 477.9V617.6M675.4 477.9V617.6M746.6 477.9V617.6M817.8 477.9V617.6M889 477.9V617.6M960.2 477.9V617.6M158.2 477.9H1012.5M158.2 512.83H1012.5M158.2 547.75H1012.5M158.2 582.67H1012.5M158.2 617.6H1012.5" stroke="#38383b" stroke-width="1" fill="none"/>
<rect x="158.2" y="477.9" width="854.3" height="139.7" fill="rgba(126,178,109,.4)"/>
<path d="M158.2 478.4H1012.5" stroke="#6c9660" stroke-width="1.300" stroke-dasharray="13 1.500 7 1 19 2 5 1.500 11 1"/>
<path d="M158.2 617.2H1012.5" stroke="#96655e" stroke-width="1.600"/>
<circle cx="361" cy="615.8000000000001" r="1.100" fill="#9c6c64"/>
<circle cx="379" cy="615.8000000000001" r="1.100" fill="#9c6c64"/>
<circle cx="397" cy="615.8000000000001" r="1.100" fill="#9c6c64"/>
<circle cx="414" cy="615.8000000000001" r="1.100" fill="#9c6c64"/>
<circle cx="656" cy="615.8000000000001" r="1.100" fill="#9c6c64"/>
<circle cx="674" cy="615.8000000000001" r="1.100" fill="#9c6c64"/>
<circle cx="692" cy="615.8000000000001" r="1.100" fill="#9c6c64"/>
<circle cx="797" cy="615.8000000000001" r="1.100" fill="#9c6c64"/>
<circle cx="917" cy="615.8000000000001" r="1.100" fill="#9c6c64"/>
<circle cx="935" cy="615.8000000000001" r="1.100" fill="#9c6c64"/>
<circle cx="953" cy="615.8000000000001" r="1.100" fill="#9c6c64"/>
<circle cx="970" cy="615.8000000000001" r="1.100" fill="#9c6c64"/>
<defs><linearGradient id="spk" x1="0" y1="537" x2="0" y2="618" gradientUnits="userSpaceOnUse"><stop offset="0" stop-color="#7a4a78"/><stop offset=".1" stop-color="#6a2a63"/><stop offset=".42" stop-color="#6a2a63"/><stop offset=".46" stop-color="#a04a50"/><stop offset=".7" stop-color="#bf5a3e"/><stop offset="1" stop-color="#c9663a"/></linearGradient></defs>
<path d="M893.6999999999999 617.6L894.0 560L894.4 540L894.9 537.200L895.5 541L896.1 575L896.6 612L897.1999999999999 617.6Z" fill="url(#spk)"/>
<path d="M893.6 617.6L893.9 596M896.5 596L896.8 613L897.6999999999999 615.600H910.500" fill="none" stroke="#d98e3c" stroke-width=".7" stroke-opacity=".75"/>
<path d="M1114.6 478.2V617.6M1184.43 478.2V617.6M1254.26 478.2V617.6M1324.09 478.2V617.6M1393.92 478.2V617.6M1463.75 478.2V617.6M1533.58 478.2V617.6M1603.41 478.2V617.6M1673.24 478.2V617.6M1743.07 478.2V617.6M1812.9 478.2V617.6M1882.73 478.2V617.6M1096.5 478.2H1934.9M1096.5 506.08H1934.9M1096.5 533.96H1934.9M1096.5 561.84H1934.9M1096.5 589.72H1934.9M1096.5 617.6H1934.9" stroke="#38383b" stroke-width="1" fill="none"/>
<path d="M1096.5 500.8L1934.9 500.8L1934.9 506.8L1933.5 506.92L1932 506.63L1930.5 506.74L1929 506.93L1927.5 506.88L1926 506.73L1924.5 506.83L1923 506.77L1921.5 505.42L1920 505.54L1918.5 507.21L1917 507.21L1915.5 506.89L1914 507.03L1912.5 506.95L1911 507.03L1909.5 507.35L1908 507.19L1906.5 507.14L1905 507.47L1903.5 507.4L1902 507.37L1900.5 507.27L1899 507.39L1897.5 507.37L1896 507.42L1894.5 507.18L1893 507.3L1891.5 507.65L1890 507.54L1888.5 507.73L1887 507.56L1885.5 507.36L1884 507.49L1882.5 507.4L1881 507.65L1879.5 507.6L1878 507.68L1876.5 507.54L1875 507.96L1873.5 507.51L1872 507.54L1870.5 507.69L1869 507.77L1867.5 507.72L1866 507.64L1864.5 507.83L1863 507.68L1861.5 507.8L1860 507.73L1858.5 508.19L1857 508L1855.5 508.22L1854 507.83L1852.5 507.87L1851 506.62L1849.5 506.72L1848 508.38L1846.5 508.19L1845 507.96L1843.5 508.16L1842 508.37L1840.5 508.03L1839 508.03L1837.5 508.54L1836 508.29L1834.5 508.42L1833 508.59L1831.5 508.48L1830 508.29L1828.5 508.27L1827 508.57L1825.5 508.6L1824 508.4L1822.5 508.51L1821 508.46L1820.4 507.6L1819.5 505.4L1818.6 508L1817.5 529.8L1816.5 529.78L1815 529.65L1813.5 529.76L1812 529.69L1810.5 529.81L1809 529.82L1807.5 530.13L1806 530.14L1804.5 529.98L1803 530.2L1801.5 529.95L1800 530.4L1798.5 530.19L1797 530.32L1795.5 530.36L1794 530.52L1792.5 530.26L1791 530.57L1789.5 530.16L1788 530.41L1786.5 530.32L1785 530.38L1783.5 530.35L1782 529.04L1780.5 529.06L1779 529.04L1777.5 530.83L1776 530.62L1774.5 530.64L1773 530.57L1771.5 530.59L1770 530.6L1768.5 530.81L1767 530.82L1765.5 530.95L1764 531.12L1762.5 530.94L1761 530.74L1759.5 531.15L1758 531.04L1756.5 531.27L1755 530.88L1753.5 530.99L1752 530.94L1750.5 531L1749 531.18L1747.5 531.39L1746 531.33L1744.5 531.37L1743 531.37L1741.5 531.57L1740 531.39L1738.5 531.61L1737 531.56L1735.5 531.68L1734 531.36L1732.5 531.52L1731 531.53L1729.5 531.7L1728 531.59L1726.5 531.57L1725 531.66L1723.5 531.83L1722 531.62L1720.5 531.99L1719 531.94L1717.5 532.13L1716 531.73L1714.5 531.81L1713 532.07L1711.5 530.84L1710 530.47L1708.5 531.85L1707 532.22L1705.5 531.9L1704 532.32L1702.5 532.11L1701 532.22L1699.5 532.45L1698 532.16L1696.5 532.37L1695 532.17L1693.5 532.18L1692 532.5L1690.5 532.24L1689 532.56L1687.5 532.62L1686 532.38L1684.5 532.69L1683 532.54L1681.5 532.51L1680 532.49L1678.5 532.71L1677 532.86L1675.5 532.64L1674 532.82L1672.5 532.71L1671 532.92L1669.5 532.91L1668 533.12L1666.5 532.95L1665 533.05L1663.5 532.84L1662 533.14L1660.5 532.85L1659 533.04L1657.5 533.36L1656 533.16L1654.5 533.25L1653 533.14L1651.5 533.23L1650 533.11L1648.5 533.51L1647 533.48L1645.5 533.42L1644 533.2L1642.5 533.23L1641 532.02L1639.5 531.92L1638 533.31L1636.5 533.63L1635 533.44L1633.5 533.59L1632 533.72L1630.5 533.52L1629 533.94L1627.5 533.66L1626 533.61L1624.5 533.93L1623 534.08L1621.5 533.96L1620 533.78L1618.5 534.12L1617 533.75L1615.5 534.11L1614 534.29L1612.5 534.31L1611 534.21L1609.5 533.9L1608 534.25L1606.5 534.34L1605 534.39L1603.5 534.12L1602 534.07L1600.5 534.48L1599 534.4L1597.5 534.21L1596 534.33L1594.5 534.45L1593 534.5L1591.5 534.5L1590 534.36L1588.5 534.78L1587 534.74L1585.5 534.53L1584 534.63L1582.5 534.79L1581 534.9L1579.5 534.54L1578 534.95L1576.5 534.72L1575 534.7L1573.5 535.06L1572 533.46L1570.5 533.49L1569 535.18L1567.5 535L1566 535.11L1564.5 535.17L1563 535.14L1561.5 535.1L1560 535.3L1558.5 534.95L1557 535.25L1555.5 535.45L1554 535.5L1552.5 535.3L1551 535.23L1549.5 535.15L1548 535.46L1546.5 535.57L1545 535.41L1543.5 535.49L1542 535.55L1540.5 535.47L1539 535.52L1537.5 535.65L1536 535.56L1534.5 535.82L1533 535.53L1531.5 535.88L1530 535.84L1528.5 535.89L1527 535.84L1525.5 535.94L1524 535.81L1522.5 536.19L1521 535.8L1519.5 535.89L1518 535.91L1516.5 536.21L1515 536.32L1513.5 536.02L1512 536.18L1510.5 535.95L1509 536.39L1507.5 536.4L1506 536.18L1504.5 536.29L1503 536.41L1501.5 534.79L1500 535L1498.5 536.34L1497 536.47L1495.5 536.75L1494 536.45L1492.5 536.52L1491 536.6L1489.5 536.87L1488 536.54L1486.5 536.74L1485 536.93L1483.5 536.98L1482 536.73L1480.5 537.05L1479 536.74L1477.5 536.74L1476 536.88L1474.5 536.88L1473 537.17L1471.5 537.07L1470 536.86L1468.5 537.12L1467 537.13L1465.5 536.93L1464 536.91L1462.5 537.39L1461 537.15L1459.5 537.31L1458 537.52L1456.5 537.54L1455 537.38L1453.5 537.43L1452 537.23L1450.5 537.38L1449 537.54L1447.5 537.66L1446 537.49L1444.5 537.72L1443 537.83L1441.5 537.67L1440 537.58L1438.5 537.71L1437 537.52L1435.5 537.81L1434 537.55L1432.5 536.35L1431 536.61L1429.5 536.28L1428 537.86L1426.5 537.83L1425 537.92L1423.5 537.75L1422 538.23L1420.5 537.93L1419 538.14L1417.5 538.18L1416 538.1L1414.5 538.17L1413 537.99L1411.5 538.1L1410 538.12L1408.5 538.22L1407 538.16L1405.5 538.15L1404 538.27L1402.5 538.42L1401 538.24L1399.5 538.57L1398 538.62L1396.5 538.42L1395 538.67L1393.5 538.6L1392 538.49L1390.5 538.45L1389 538.83L1387.5 538.82L1386 538.92L1384.5 538.87L1383 538.8L1381.5 538.96L1380 538.95L1378.5 539.08L1377 538.8L1375.5 539.11L1374 539.14L1372.5 539.16L1371 539.08L1369.5 539.34L1368 539.32L1366.5 539.02L1365 539.23L1363.5 539.26L1362 538.11L1360.5 538.15L1359 539.44L1357.5 539.56L1356 539.58L1354.5 539.36L1353 539.63L1351.5 539.62L1350 539.6L1348.5 539.48L1347 539.74L1345.5 539.7L1344 539.81L1342.5 539.67L1341 539.8L1339.5 539.62L1338 539.8L1336.5 539.57L1335 539.88L1333.5 539.95L1332 540.13L1330.5 539.83L1329 540.06L1327.5 540.13L1326 540.02L1324.5 539.95L1323 540.19L1321.5 540.05L1320 540.28L1318.5 540.27L1317 540.31L1315.5 540.38L1314 540.42L1312.5 540.24L1311 540.52L1309.5 540.51L1308 540.29L1306.5 540.23L1305 540.38L1303.5 540.5L1302 540.59L1300.5 540.79L1299 540.83L1297.5 540.56L1296 540.48L1294.5 540.64L1293 540.61L1291.5 539.34L1290 539.49L1288.5 540.8L1287 540.82L1285.5 541.11L1284 541.08L1282.5 541.18L1281 540.94L1279.5 540.89L1278 541.2L1276.5 540.88L1275 541.06L1273.5 540.92L1272 541.3L1270.5 541.25L1269 541.44L1267.5 541.36L1266 541.09L1264.5 541.48L1263 541.34L1261.5 541.14L1260 541.61L1258.5 541.21L1257 541.42L1255.5 541.47L1254 541.69L1252.5 541.6L1251 541.46L1249.5 541.57L1248 541.67L1246.5 541.92L1245 541.49L1243.5 541.57L1242 542.02L1240.5 541.9L1239 541.66L1237.5 541.66L1236 541.74L1234.5 541.84L1233 541.87L1231.5 542.02L1230 542.24L1228.5 541.98L1227 542.3L1225.5 542.17L1224 542.07L1222.5 540.58L1221 541.03L1219.5 542.01L1218 542.45L1216.5 542.45L1215 542.46L1213.5 542.17L1212 542.54L1210.5 542.44L1209 542.39L1207.5 542.41L1206 542.74L1204.5 542.77L1203 542.71L1201.5 542.47L1200 542.88L1198.5 542.52L1197 542.48L1195.5 542.5L1194 542.81L1192.5 542.74L1191 542.98L1189.5 542.63L1188 543.07L1186.5 543.05L1185 542.72L1183.5 543.23L1182 542.8L1180.5 543.16L1179 543.08L1177.5 543.02L1176 543.14L1174.5 543.34L1173 543.11L1171.5 543.16L1170 543.36L1168.5 543.05L1167 543.39L1165.5 543.27L1164 543.18L1162.5 543.25L1161 543.29L1159.5 543.42L1158 543.42L1156.5 543.75L1155 543.82L1153.5 543.71L1152 542.47L1150.5 542.13L1149 543.8L1147.5 543.76L1146 544L1144.5 543.7L1143 544.02L1141.5 544.11L1140 543.75L1138.5 543.78L1137 544.14L1135.5 543.74L1134 543.83L1132.5 544.11L1131 543.9L1129.5 544.26L1128 543.97L1126.5 544.31L1125 544.42L1123.5 544.13L1122 544.13L1120.5 544.06L1119 544.37L1117.5 544.39L1116 544.27L1114.5 544.41L1113 544.26L1111.5 544.69L1110 544.59L1108.5 544.77L1107 544.56L1105.5 544.38L1104 544.86L1102.5 544.8L1101 544.93L1099.5 544.89L1098 544.89L1096.5 544.86Z" fill="rgba(126,178,109,.4)"/>
<path d="M1096.5 544.86L1098 544.89L1099.5 544.89L1101 544.93L1102.5 544.8L1104 544.86L1105.5 544.38L1107 544.56L1108.5 544.77L1110 544.59L1111.5 544.69L1113 544.26L1114.5 544.41L1116 544.27L1117.5 544.39L1119 544.37L1120.5 544.06L1122 544.13L1123.5 544.13L1125 544.42L1126.5 544.31L1128 543.97L1129.5 544.26L1131 543.9L1132.5 544.11L1134 543.83L1135.5 543.74L1137 544.14L1138.5 543.78L1140 543.75L1141.5 544.11L1143 544.02L1144.5 543.7L1146 544L1147.5 543.76L1149 543.8L1150.5 542.13L1152 542.47L1153.5 543.71L1155 543.82L1156.5 543.75L1158 543.42L1159.5 543.42L1161 543.29L1162.5 543.25L1164 543.18L1165.5 543.27L1167 543.39L1168.5 543.05L1170 543.36L1171.5 543.16L1173 543.11L1174.5 543.34L1176 543.14L1177.5 543.02L1179 543.08L1180.5 543.16L1182 542.8L1183.5 543.23L1185 542.72L1186.5 543.05L1188 543.07L1189.5 542.63L1191 542.98L1192.5 542.74L1194 542.81L1195.5 542.5L1197 542.48L1198.5 542.52L1200 542.88L1201.5 542.47L1203 542.71L1204.5 542.77L1206 542.74L1207.5 542.41L1209 542.39L1210.5 542.44L1212 542.54L1213.5 542.17L1215 542.46L1216.5 542.45L1218 542.45L1219.5 542.01L1221 541.03L1222.5 540.58L1224 542.07L1225.5 542.17L1227 542.3L1228.5 541.98L1230 542.24L1231.5 542.02L1233 541.87L1234.5 541.84L1236 541.74L1237.5 541.66L1239 541.66L1240.5 541.9L1242 542.02L1243.5 541.57L1245 541.49L1246.5 541.92L1248 541.67L1249.5 541.57L1251 541.46L1252.5 541.6L1254 541.69L1255.5 541.47L1257 541.42L1258.5 541.21L1260 541.61L1261.5 541.14L1263 541.34L1264.5 541.48L1266 541.09L1267.5 541.36L1269 541.44L1270.5 541.25L1272 541.3L1273.5 540.92L1275 541.06L1276.5 540.88L1278 541.2L1279.5 540.89L1281 540.94L1282.5 541.18L1284 541.08L1285.5 541.11L1287 540.82L1288.5 540.8L1290 539.49L1291.5 539.34L1293 540.61L1294.5 540.64L1296 540.48L1297.5 540.56L1299 540.83L1300.5 540.79L1302 540.59L1303.5 540.5L1305 540.38L1306.5 540.23L1308 540.29L1309.5 540.51L1311 540.52L1312.5 540.24L1314 540.42L1315.5 540.38L1317 540.31L1318.5 540.27L1320 540.28L1321.5 540.05L1323 540.19L1324.5 539.95L1326 540.02L1327.5 540.13L1329 540.06L1330.5 539.83L1332 540.13L1333.5 539.95L1335 539.88L1336.5 539.57L1338 539.8L1339.5 539.62L1341 539.8L1342.5 539.67L1344 539.81L1345.5 539.7L1347 539.74L1348.5 539.48L1350 539.6L1351.5 539.62L1353 539.63L1354.5 539.36L1356 539.58L1357.5 539.56L1359 539.44L1360.5 538.15L1362 538.11L1363.5 539.26L1365 539.23L1366.5 539.02L1368 539.32L1369.5 539.34L1371 539.08L1372.5 539.16L1374 539.14L1375.5 539.11L1377 538.8L1378.5 539.08L1380 538.95L1381.5 538.96L1383 538.8L1384.5 538.87L1386 538.92L1387.5 538.82L1389 538.83L1390.5 538.45L1392 538.49L1393.5 538.6L1395 538.67L1396.5 538.42L1398 538.62L1399.5 538.57L1401 538.24L1402.5 538.42L1404 538.27L1405.5 538.15L1407 538.16L1408.5 538.22L1410 538.12L1411.5 538.1L1413 537.99L1414.5 538.17L1416 538.1L1417.5 538.18L1419 538.14L1420.5 537.93L1422 538.23L1423.5 537.75L1425 537.92L1426.5 537.83L1428 537.86L1429.5 536.28L1431 536.61L1432.5 536.35L1434 537.55L1435.5 537.81L1437 537.52L1438.5 537.71L1440 537.58L1441.5 537.67L1443 537.83L1444.5 537.72L1446 537.49L1447.5 537.66L1449 537.54L1450.5 537.38L1452 537.23L1453.5 537.43L1455 537.38L1456.5 537.54L1458 537.52L1459.5 537.31L1461 537.15L1462.5 537.39L1464 536.91L1465.5 536.93L1467 537.13L1468.5 537.12L1470 536.86L1471.5 537.07L1473 537.17L1474.5 536.88L1476 536.88L1477.5 536.74L1479 536.74L1480.5 537.05L1482 536.73L1483.5 536.98L1485 536.93L1486.5 536.74L1488 536.54L1489.5 536.87L1491 536.6L1492.5 536.52L1494 536.45L1495.5 536.75L1497 536.47L1498.5 536.34L1500 535L1501.5 534.79L1503 536.41L1504.5 536.29L1506 536.18L1507.5 536.4L1509 536.39L1510.5 535.95L1512 536.18L1513.5 536.02L1515 536.32L1516.5 536.21L1518 535.91L1519.5 535.89L1521 535.8L1522.5 536.19L1524 535.81L1525.5 535.94L1527 535.84L1528.5 535.89L1530 535.84L1531.5 535.88L1533 535.53L1534.5 535.82L1536 535.56L1537.5 535.65L1539 535.52L1540.5 535.47L1542 535.55L1543.5 535.49L1545 535.41L1546.5 535.57L1548 535.46L1549.5 535.15L1551 535.23L1552.5 535.3L1554 535.5L1555.5 535.45L1557 535.25L1558.5 534.95L1560 535.3L1561.5 535.1L1563 535.14L1564.5 535.17L1566 535.11L1567.5 535L1569 535.18L1570.5 533.49L1572 533.46L1573.5 535.06L1575 534.7L1576.5 534.72L1578 534.95L1579.5 534.54L1581 534.9L1582.5 534.79L1584 534.63L1585.5 534.53L1587 534.74L1588.5 534.78L1590 534.36L1591.5 534.5L1593 534.5L1594.5 534.45L1596 534.33L1597.5 534.21L1599 534.4L1600.5 534.48L1602 534.07L1603.5 534.12L1605 534.39L1606.5 534.34L1608 534.25L1609.5 533.9L1611 534.21L1612.5 534.31L1614 534.29L1615.5 534.11L1617 533.75L1618.5 534.12L1620 533.78L1621.5 533.96L1623 534.08L1624.5 533.93L1626 533.61L1627.5 533.66L1629 533.94L1630.5 533.52L1632 533.72L1633.5 533.59L1635 533.44L1636.5 533.63L1638 533.31L1639.5 531.92L1641 532.02L1642.5 533.23L1644 533.2L1645.5 533.42L1647 533.48L1648.5 533.51L1650 533.11L1651.5 533.23L1653 533.14L1654.5 533.25L1656 533.16L1657.5 533.36L1659 533.04L1660.5 532.85L1662 533.14L1663.5 532.84L1665 533.05L1666.5 532.95L1668 533.12L1669.5 532.91L1671 532.92L1672.5 532.71L1674 532.82L1675.5 532.64L1677 532.86L1678.5 532.71L1680 532.49L1681.5 532.51L1683 532.54L1684.5 532.69L1686 532.38L1687.5 532.62L1689 532.56L1690.5 532.24L1692 532.5L1693.5 532.18L1695 532.17L1696.5 532.37L1698 532.16L1699.5 532.45L1701 532.22L1702.5 532.11L1704 532.32L1705.5 531.9L1707 532.22L1708.5 531.85L1710 530.47L1711.5 530.84L1713 532.07L1714.5 531.81L1716 531.73L1717.5 532.13L1719 531.94L1720.5 531.99L1722 531.62L1723.5 531.83L1725 531.66L1726.5 531.57L1728 531.59L1729.5 531.7L1731 531.53L1732.5 531.52L1734 531.36L1735.5 531.68L1737 531.56L1738.5 531.61L1740 531.39L1741.5 531.57L1743 531.37L1744.5 531.37L1746 531.33L1747.5 531.39L1749 531.18L1750.5 531L1752 530.94L1753.5 530.99L1755 530.88L1756.5 531.27L1758 531.04L1759.5 531.15L1761 530.74L1762.5 530.94L1764 531.12L1765.5 530.95L1767 530.82L1768.5 530.81L1770 530.6L1771.5 530.59L1773 530.57L1774.5 530.64L1776 530.62L1777.5 530.83L1779 529.04L1780.5 529.06L1782 529.04L1783.5 530.35L1785 530.38L1786.5 530.32L1788 530.41L1789.5 530.16L1791 530.57L1792.5 530.26L1794 530.52L1795.5 530.36L1797 530.32L1798.5 530.19L1800 530.4L1801.5 529.95L1803 530.2L1804.5 529.98L1806 530.14L1807.5 530.13L1809 529.82L1810.5 529.81L1812 529.69L1813.5 529.76L1815 529.65L1816.5 529.78L1817.5 529.8L1818.6 508L1819.5 505.4L1820.4 507.6L1821 508.46L1822.5 508.51L1824 508.4L1825.5 508.6L1827 508.57L1828.5 508.27L1830 508.29L1831.5 508.48L1833 508.59L1834.5 508.42L1836 508.29L1837.5 508.54L1839 508.03L1840.5 508.03L1842 508.37L1843.5 508.16L1845 507.96L1846.5 508.19L1848 508.38L1849.5 506.72L1851 506.62L1852.5 507.87L1854 507.83L1855.5 508.22L1857 508L1858.5 508.19L1860 507.73L1861.5 507.8L1863 507.68L1864.5 507.83L1866 507.64L1867.5 507.72L1869 507.77L1870.5 507.69L1872 507.54L1873.5 507.51L1875 507.96L1876.5 507.54L1878 507.68L1879.5 507.6L1881 507.65L1882.5 507.4L1884 507.49L1885.5 507.36L1887 507.56L1888.5 507.73L1890 507.54L1891.5 507.65L1893 507.3L1894.5 507.18L1896 507.42L1897.5 507.37L1899 507.39L1900.5 507.27L1902 507.37L1903.5 507.4L1905 507.47L1906.5 507.14L1908 507.19L1909.5 507.35L1911 507.03L1912.5 506.95L1914 507.03L1915.5 506.89L1917 507.21L1918.5 507.21L1920 505.54L1921.5 505.42L1923 506.77L1924.5 506.83L1926 506.73L1927.5 506.88L1929 506.93L1930.5 506.74L1932 506.63L1933.5 506.92L1934.9 506.8L1934.9 598.6L1933.5 598.46L1932 598.58L1930.5 598.86L1929 598.66L1927.5 598.52L1926 598.61L1924.5 598.67L1923 598.9L1921.5 597.16L1920 597.4L1918.5 598.49L1917 598.83L1915.5 598.5L1914 598.69L1912.5 598.94L1911 598.94L1909.5 598.74L1908 598.54L1906.5 598.64L1905 598.79L1903.5 598.52L1902 598.63L1900.5 598.73L1899 598.59L1897.5 598.8L1896 599L1894.5 598.95L1893 599.04L1891.5 598.66L1890 598.73L1888.5 598.62L1887 599.03L1885.5 598.81L1884 598.97L1882.5 598.65L1881 598.67L1879.5 598.8L1878 598.85L1876.5 598.78L1875 599.02L1873.5 598.98L1872 598.86L1870.5 599.17L1869 598.71L1867.5 598.99L1866 599.13L1864.5 599.03L1863 598.77L1861.5 598.89L1860 599.12L1858.5 598.8L1857 599.23L1855.5 599.08L1854 599.08L1852.5 598.91L1851 597.93L1849.5 597.67L1848 598.93L1846.5 598.86L1845 598.96L1843.5 599.24L1842 599.22L1840.5 599.04L1839 599.17L1837.5 599.13L1836 599.31L1834.5 599.13L1833 597.6L1831.5 597.48L1830 597.42L1828.5 597.81L1827 597.64L1825.5 597.57L1824 597.69L1822.5 597.6L1821 597.42L1819.5 597.44L1818 597.68L1816.5 600.56L1815 600.47L1813.5 600.29L1812 600.43L1810.5 600.3L1809 600.36L1807.5 600.73L1806 600.39L1804.5 600.37L1803 600.34L1801.5 600.5L1800 600.72L1798.5 600.53L1797 600.65L1795.5 600.27L1794 600.42L1792.5 600.4L1791 600.65L1789.5 600.34L1788 600.7L1786.5 600.6L1785 600.32L1783.5 600.64L1782 599.43L1780.5 599.31L1779 599.22L1777.5 600.32L1776 600.34L1774.5 600.63L1773 600.33L1771.5 600.35L1770 600.77L1768.5 600.41L1767 600.61L1765.5 600.61L1764 600.66L1762.5 600.36L1761 600.6L1759.5 600.33L1758 600.74L1756.5 600.56L1755 600.72L1753.5 600.33L1752 600.32L1750.5 600.6L1749 600.69L1747.5 600.34L1746 600.39L1744.5 600.41L1743 600.77L1741.5 600.54L1740 600.76L1738.5 600.46L1737 600.45L1735.5 600.64L1734 600.53L1732.5 600.65L1731 600.75L1729.5 600.47L1728 600.71L1726.5 600.73L1725 600.48L1723.5 600.47L1722 600.83L1720.5 600.42L1719 600.52L1717.5 600.39L1716 600.38L1714.5 600.58L1713 600.46L1711.5 599.34L1710 599.3L1708.5 600.53L1707 600.43L1705.5 600.77L1704 600.64L1702.5 600.51L1701 600.83L1699.5 600.56L1698 600.63L1696.5 600.74L1695 600.59L1693.5 600.41L1692 600.84L1690.5 600.46L1689 600.53L1687.5 600.87L1686 600.85L1684.5 600.85L1683 600.74L1681.5 600.65L1680 600.57L1678.5 600.85L1677 600.71L1675.5 600.61L1674 600.54L1672.5 600.4L1671 600.57L1669.5 600.59L1668 600.41L1666.5 600.65L1665 600.43L1663.5 600.8L1662 600.71L1660.5 600.65L1659 600.61L1657.5 600.79L1656 600.41L1654.5 600.76L1653 600.65L1651.5 600.48L1650 600.78L1648.5 600.69L1647 600.55L1645.5 600.7L1644 600.54L1642.5 600.9L1641 599.41L1639.5 599.36L1638 600.61L1636.5 600.61L1635 600.75L1633.5 600.48L1632 600.48L1630.5 600.78L1629 600.92L1627.5 600.69L1626 600.51L1624.5 600.83L1623 600.63L1621.5 600.82L1620 600.58L1618.5 600.66L1617 600.54L1615.5 600.46L1614 600.92L1612.5 600.91L1611 600.57L1609.5 600.52L1608 600.75L1606.5 600.94L1605 600.87L1603.5 600.47L1602 600.56L1600.5 600.9L1599 600.91L1597.5 600.65L1596 600.5L1594.5 600.7L1593 600.55L1591.5 600.53L1590 600.8L1588.5 600.62L1587 600.71L1585.5 600.61L1584 600.69L1582.5 600.59L1581 600.98L1579.5 600.97L1578 600.69L1576.5 600.87L1575 600.56L1573.5 600.93L1572 599.57L1570.5 599.69L1569 600.68L1567.5 600.95L1566 600.91L1564.5 600.93L1563 600.7L1561.5 600.88L1560 600.51L1558.5 600.52L1557 600.82L1555.5 600.83L1554 600.96L1552.5 600.8L1551 600.73L1549.5 600.9L1548 600.71L1546.5 600.54L1545 600.77L1543.5 600.86L1542 601L1540.5 600.66L1539 600.56L1537.5 600.76L1536 600.74L1534.5 601.01L1533 600.64L1531.5 600.55L1530 600.79L1528.5 600.72L1527 600.76L1525.5 600.66L1524 600.54L1522.5 600.72L1521 600.92L1519.5 600.54L1518 600.95L1516.5 600.72L1515 600.59L1513.5 601.01L1512 600.74L1510.5 600.82L1509 601.04L1507.5 600.79L1506 600.6L1504.5 600.69L1503 600.59L1501.5 599.59L1500 599.38L1498.5 600.77L1497 600.59L1495.5 600.82L1494 600.99L1492.5 600.73L1491 600.72L1489.5 600.86L1488 600.96L1486.5 600.92L1485 600.82L1483.5 600.72L1482 600.77L1480.5 601.04L1479 600.95L1477.5 600.76L1476 600.82L1474.5 600.64L1473 600.73L1471.5 600.95L1470 600.97L1468.5 600.63L1467 601.06L1465.5 601.07L1464 600.84L1462.5 600.94L1461 600.78L1459.5 600.9L1458 600.66L1456.5 600.79L1455 600.87L1453.5 600.81L1452 600.65L1450.5 600.98L1449 600.95L1447.5 600.84L1446 600.8L1444.5 600.72L1443 600.65L1441.5 600.67L1440 600.67L1438.5 601.1L1437 600.93L1435.5 601.1L1434 601.08L1432.5 599.68L1431 599.73L1429.5 599.74L1428 601L1426.5 601.01L1425 600.68L1423.5 600.94L1422 600.71L1420.5 600.68L1419 600.72L1417.5 600.74L1416 600.69L1414.5 600.88L1413 601.06L1411.5 600.99L1410 600.76L1408.5 601.11L1407 600.97L1405.5 601.08L1404 600.81L1402.5 601.13L1401 601.07L1399.5 600.9L1398 600.69L1396.5 601.02L1395 601.01L1393.5 600.99L1392 600.96L1390.5 600.76L1389 600.76L1387.5 600.97L1386 600.95L1384.5 600.73L1383 600.69L1381.5 600.77L1380 601.16L1378.5 600.98L1377 600.82L1375.5 600.83L1374 601.13L1372.5 600.95L1371 600.9L1369.5 600.89L1368 601.05L1366.5 601.13L1365 601.1L1363.5 600.97L1362 599.42L1360.5 599.51L1359 601.08L1357.5 601.01L1356 600.78L1354.5 601.15L1353 601.01L1351.5 600.84L1350 600.86L1348.5 600.81L1347 601.15L1345.5 600.9L1344 601.07L1342.5 600.99L1341 601.06L1339.5 600.77L1338 600.91L1336.5 601.02L1335 601.17L1333.5 601.17L1332 601.05L1330.5 600.81L1329 600.92L1327.5 600.73L1326 600.92L1324.5 601L1323 601.22L1321.5 600.85L1320 601.18L1318.5 600.99L1317 600.84L1315.5 601.04L1314 601.11L1312.5 601.16L1311 601.09L1309.5 601.19L1308 601.22L1306.5 601.08L1305 601.12L1303.5 600.79L1302 601.11L1300.5 600.89L1299 601.22L1297.5 600.91L1296 601.11L1294.5 601.14L1293 601.05L1291.5 599.64L1290 599.51L1288.5 600.8L1287 600.91L1285.5 601.03L1284 601.11L1282.5 601.07L1281 600.95L1279.5 601.17L1278 601.04L1276.5 601.11L1275 601.12L1273.5 601.24L1272 601.19L1270.5 601.27L1269 600.98L1267.5 601.14L1266 601.02L1264.5 600.98L1263 600.94L1261.5 600.8L1260 600.95L1258.5 600.99L1257 600.89L1255.5 601.09L1254 601.05L1252.5 600.8L1251 600.99L1249.5 601.2L1248 601.11L1246.5 601.24L1245 601.15L1243.5 600.97L1242 601.21L1240.5 600.91L1239 601.26L1237.5 601.17L1236 600.86L1234.5 600.9L1233 600.84L1231.5 601.06L1230 601.24L1228.5 600.89L1227 601.02L1225.5 601.13L1224 601.25L1222.5 599.95L1221 600.02L1219.5 600.95L1218 601.01L1216.5 600.95L1215 601.21L1213.5 601.01L1212 601.12L1210.5 600.94L1209 600.98L1207.5 600.95L1206 601.04L1204.5 601.29L1203 601.09L1201.5 601.14L1200 600.87L1198.5 601.34L1197 600.88L1195.5 601.06L1194 601.26L1192.5 600.91L1191 601.16L1189.5 601.34L1188 601.13L1186.5 601.33L1185 601.25L1183.5 601.09L1182 601.08L1180.5 601.1L1179 601.33L1177.5 601.03L1176 600.93L1174.5 601.27L1173 601.35L1171.5 601.1L1170 601.23L1168.5 600.97L1167 601.15L1165.5 600.93L1164 601.25L1162.5 601.3L1161 601.18L1159.5 600.9L1158 601.06L1156.5 601.07L1155 601.11L1153.5 601.01L1152 599.9L1150.5 600.07L1149 601.33L1147.5 601.08L1146 600.97L1144.5 600.93L1143 600.92L1141.5 601.18L1140 601.29L1138.5 600.94L1137 601.05L1135.5 601.25L1134 601.04L1132.5 601L1131 600.95L1129.5 600.98L1128 601.11L1126.5 601.33L1125 601.06L1123.5 601.27L1122 601.29L1120.5 601.4L1119 601.26L1117.5 601.34L1116 601.15L1114.5 601.22L1113 601.31L1111.5 601.26L1110 601.38L1108.5 601.22L1107 601.32L1105.5 601.1L1104 601.15L1102.5 600.99L1101 601.13L1099.5 601.09L1098 601.05L1096.5 600.97Z" fill="rgb(19,40,63)" fill-opacity=".72"/>
<path d="M1096.5 600.97L1098 601.05L1099.5 601.09L1101 601.13L1102.5 600.99L1104 601.15L1105.5 601.1L1107 601.32L1108.5 601.22L1110 601.38L1111.5 601.26L1113 601.31L1114.5 601.22L1116 601.15L1117.5 601.34L1119 601.26L1120.5 601.4L1122 601.29L1123.5 601.27L1125 601.06L1126.5 601.33L1128 601.11L1129.5 600.98L1131 600.95L1132.5 601L1134 601.04L1135.5 601.25L1137 601.05L1138.5 600.94L1140 601.29L1141.5 601.18L1143 600.92L1144.5 600.93L1146 600.97L1147.5 601.08L1149 601.33L1150.5 600.07L1152 599.9L1153.5 601.01L1155 601.11L1156.5 601.07L1158 601.06L1159.5 600.9L1161 601.18L1162.5 601.3L1164 601.25L1165.5 600.93L1167 601.15L1168.5 600.97L1170 601.23L1171.5 601.1L1173 601.35L1174.5 601.27L1176 600.93L1177.5 601.03L1179 601.33L1180.5 601.1L1182 601.08L1183.5 601.09L1185 601.25L1186.5 601.33L1188 601.13L1189.5 601.34L1191 601.16L1192.5 600.91L1194 601.26L1195.5 601.06L1197 600.88L1198.5 601.34L1200 600.87L1201.5 601.14L1203 601.09L1204.5 601.29L1206 601.04L1207.5 600.95L1209 600.98L1210.5 600.94L1212 601.12L1213.5 601.01L1215 601.21L1216.5 600.95L1218 601.01L1219.5 600.95L1221 600.02L1222.5 599.95L1224 601.25L1225.5 601.13L1227 601.02L1228.5 600.89L1230 601.24L1231.5 601.06L1233 600.84L1234.5 600.9L1236 600.86L1237.5 601.17L1239 601.26L1240.5 600.91L1242 601.21L1243.5 600.97L1245 601.15L1246.5 601.24L1248 601.11L1249.5 601.2L1251 600.99L1252.5 600.8L1254 601.05L1255.5 601.09L1257 600.89L1258.5 600.99L1260 600.95L1261.5 600.8L1263 600.94L1264.5 600.98L1266 601.02L1267.5 601.14L1269 600.98L1270.5 601.27L1272 601.19L1273.5 601.24L1275 601.12L1276.5 601.11L1278 601.04L1279.5 601.17L1281 600.95L1282.5 601.07L1284 601.11L1285.5 601.03L1287 600.91L1288.5 600.8L1290 599.51L1291.5 599.64L1293 601.05L1294.5 601.14L1296 601.11L1297.5 600.91L1299 601.22L1300.5 600.89L1302 601.11L1303.5 600.79L1305 601.12L1306.5 601.08L1308 601.22L1309.5 601.19L1311 601.09L1312.5 601.16L1314 601.11L1315.5 601.04L1317 600.84L1318.5 600.99L1320 601.18L1321.5 600.85L1323 601.22L1324.5 601L1326 600.92L1327.5 600.73L1329 600.92L1330.5 600.81L1332 601.05L1333.5 601.17L1335 601.17L1336.5 601.02L1338 600.91L1339.5 600.77L1341 601.06L1342.5 600.99L1344 601.07L1345.5 600.9L1347 601.15L1348.5 600.81L1350 600.86L1351.5 600.84L1353 601.01L1354.5 601.15L1356 600.78L1357.5 601.01L1359 601.08L1360.5 599.51L1362 599.42L1363.5 600.97L1365 601.1L1366.5 601.13L1368 601.05L1369.5 600.89L1371 600.9L1372.5 600.95L1374 601.13L1375.5 600.83L1377 600.82L1378.5 600.98L1380 601.16L1381.5 600.77L1383 600.69L1384.5 600.73L1386 600.95L1387.5 600.97L1389 600.76L1390.5 600.76L1392 600.96L1393.5 600.99L1395 601.01L1396.5 601.02L1398 600.69L1399.5 600.9L1401 601.07L1402.5 601.13L1404 600.81L1405.5 601.08L1407 600.97L1408.5 601.11L1410 600.76L1411.5 600.99L1413 601.06L1414.5 600.88L1416 600.69L1417.5 600.74L1419 600.72L1420.5 600.68L1422 600.71L1423.5 600.94L1425 600.68L1426.5 601.01L1428 601L1429.5 599.74L1431 599.73L1432.5 599.68L1434 601.08L1435.5 601.1L1437 600.93L1438.5 601.1L1440 600.67L1441.5 600.67L1443 600.65L1444.5 600.72L1446 600.8L1447.5 600.84L1449 600.95L1450.5 600.98L1452 600.65L1453.5 600.81L1455 600.87L1456.5 600.79L1458 600.66L1459.5 600.9L1461 600.78L1462.5 600.94L1464 600.84L1465.5 601.07L1467 601.06L1468.5 600.63L1470 600.97L1471.5 600.95L1473 600.73L1474.5 600.64L1476 600.82L1477.5 600.76L1479 600.95L1480.5 601.04L1482 600.77L1483.5 600.72L1485 600.82L1486.5 600.92L1488 600.96L1489.5 600.86L1491 600.72L1492.5 600.73L1494 600.99L1495.5 600.82L1497 600.59L1498.5 600.77L1500 599.38L1501.5 599.59L1503 600.59L1504.5 600.69L1506 600.6L1507.5 600.79L1509 601.04L1510.5 600.82L1512 600.74L1513.5 601.01L1515 600.59L1516.5 600.72L1518 600.95L1519.5 600.54L1521 600.92L1522.5 600.72L1524 600.54L1525.5 600.66L1527 600.76L1528.5 600.72L1530 600.79L1531.5 600.55L1533 600.64L1534.5 601.01L1536 600.74L1537.5 600.76L1539 600.56L1540.5 600.66L1542 601L1543.5 600.86L1545 600.77L1546.5 600.54L1548 600.71L1549.5 600.9L1551 600.73L1552.5 600.8L1554 600.96L1555.5 600.83L1557 600.82L1558.5 600.52L1560 600.51L1561.5 600.88L1563 600.7L1564.5 600.93L1566 600.91L1567.5 600.95L1569 600.68L1570.5 599.69L1572 599.57L1573.5 600.93L1575 600.56L1576.5 600.87L1578 600.69L1579.5 600.97L1581 600.98L1582.5 600.59L1584 600.69L1585.5 600.61L1587 600.71L1588.5 600.62L1590 600.8L1591.5 600.53L1593 600.55L1594.5 600.7L1596 600.5L1597.5 600.65L1599 600.91L1600.5 600.9L1602 600.56L1603.5 600.47L1605 600.87L1606.5 600.94L1608 600.75L1609.5 600.52L1611 600.57L1612.5 600.91L1614 600.92L1615.5 600.46L1617 600.54L1618.5 600.66L1620 600.58L1621.5 600.82L1623 600.63L1624.5 600.83L1626 600.51L1627.5 600.69L1629 600.92L1630.5 600.78L1632 600.48L1633.5 600.48L1635 600.75L1636.5 600.61L1638 600.61L1639.5 599.36L1641 599.41L1642.5 600.9L1644 600.54L1645.5 600.7L1647 600.55L1648.5 600.69L1650 600.78L1651.5 600.48L1653 600.65L1654.5 600.76L1656 600.41L1657.5 600.79L1659 600.61L1660.5 600.65L1662 600.71L1663.5 600.8L1665 600.43L1666.5 600.65L1668 600.41L1669.5 600.59L1671 600.57L1672.5 600.4L1674 600.54L1675.5 600.61L1677 600.71L1678.5 600.85L1680 600.57L1681.5 600.65L1683 600.74L1684.5 600.85L1686 600.85L1687.5 600.87L1689 600.53L1690.5 600.46L1692 600.84L1693.5 600.41L1695 600.59L1696.5 600.74L1698 600.63L1699.5 600.56L1701 600.83L1702.5 600.51L1704 600.64L1705.5 600.77L1707 600.43L1708.5 600.53L1710 599.3L1711.5 599.34L1713 600.46L1714.5 600.58L1716 600.38L1717.5 600.39L1719 600.52L1720.5 600.42L1722 600.83L1723.5 600.47L1725 600.48L1726.5 600.73L1728 600.71L1729.5 600.47L1731 600.75L1732.5 600.65L1734 600.53L1735.5 600.64L1737 600.45L1738.5 600.46L1740 600.76L1741.5 600.54L1743 600.77L1744.5 600.41L1746 600.39L1747.5 600.34L1749 600.69L1750.5 600.6L1752 600.32L1753.5 600.33L1755 600.72L1756.5 600.56L1758 600.74L1759.5 600.33L1761 600.6L1762.5 600.36L1764 600.66L1765.5 600.61L1767 600.61L1768.5 600.41L1770 600.77L1771.5 600.35L1773 600.33L1774.5 600.63L1776 600.34L1777.5 600.32L1779 599.22L1780.5 599.31L1782 599.43L1783.5 600.64L1785 600.32L1786.5 600.6L1788 600.7L1789.5 600.34L1791 600.65L1792.5 600.4L1794 600.42L1795.5 600.27L1797 600.65L1798.5 600.53L1800 600.72L1801.5 600.5L1803 600.34L1804.5 600.37L1806 600.39L1807.5 600.73L1809 600.36L1810.5 600.3L1812 600.43L1813.5 600.29L1815 600.47L1816.5 600.56L1818 597.68L1819.5 597.44L1821 597.42L1822.5 597.6L1824 597.69L1825.5 597.57L1827 597.64L1828.5 597.81L1830 597.42L1831.5 597.48L1833 597.6L1834.5 599.13L1836 599.31L1837.5 599.13L1839 599.17L1840.5 599.04L1842 599.22L1843.5 599.24L1845 598.96L1846.5 598.86L1848 598.93L1849.5 597.67L1851 597.93L1852.5 598.91L1854 599.08L1855.5 599.08L1857 599.23L1858.5 598.8L1860 599.12L1861.5 598.89L1863 598.77L1864.5 599.03L1866 599.13L1867.5 598.99L1869 598.71L1870.5 599.17L1872 598.86L1873.5 598.98L1875 599.02L1876.5 598.78L1878 598.85L1879.5 598.8L1881 598.67L1882.5 598.65L1884 598.97L1885.5 598.81L1887 599.03L1888.5 598.62L1890 598.73L1891.5 598.66L1893 599.04L1894.5 598.95L1896 599L1897.5 598.8L1899 598.59L1900.5 598.73L1902 598.63L1903.5 598.52L1905 598.79L1906.5 598.64L1908 598.54L1909.5 598.74L1911 598.94L1912.5 598.94L1914 598.69L1915.5 598.5L1917 598.83L1918.5 598.49L1920 597.4L1921.5 597.16L1923 598.9L1924.5 598.67L1926 598.61L1927.5 598.52L1929 598.66L1930.5 598.86L1932 598.58L1933.5 598.46L1934.9 598.6L1934.9 617.6L1096.5 617.6Z" fill="rgba(234,184,57,.45)"/>
<path d="M1096.5 600.97L1098 601.05L1099.5 601.09L1101 601.13L1102.5 600.99L1104 601.15L1105.5 601.1L1107 601.32L1108.5 601.22L1110 601.38L1111.5 601.26L1113 601.31L1114.5 601.22L1116 601.15L1117.5 601.34L1119 601.26L1120.5 601.4L1122 601.29L1123.5 601.27L1125 601.06L1126.5 601.33L1128 601.11L1129.5 600.98L1131 600.95L1132.5 601L1134 601.04L1135.5 601.25L1137 601.05L1138.5 600.94L1140 601.29L1141.5 601.18L1143 600.92L1144.5 600.93L1146 600.97L1147.5 601.08L1149 601.33L1150.5 600.07L1152 599.9L1153.5 601.01L1155 601.11L1156.5 601.07L1158 601.06L1159.5 600.9L1161 601.18L1162.5 601.3L1164 601.25L1165.5 600.93L1167 601.15L1168.5 600.97L1170 601.23L1171.5 601.1L1173 601.35L1174.5 601.27L1176 600.93L1177.5 601.03L1179 601.33L1180.5 601.1L1182 601.08L1183.5 601.09L1185 601.25L1186.5 601.33L1188 601.13L1189.5 601.34L1191 601.16L1192.5 600.91L1194 601.26L1195.5 601.06L1197 600.88L1198.5 601.34L1200 600.87L1201.5 601.14L1203 601.09L1204.5 601.29L1206 601.04L1207.5 600.95L1209 600.98L1210.5 600.94L1212 601.12L1213.5 601.01L1215 601.21L1216.5 600.95L1218 601.01L1219.5 600.95L1221 600.02L1222.5 599.95L1224 601.25L1225.5 601.13L1227 601.02L1228.5 600.89L1230 601.24L1231.5 601.06L1233 600.84L1234.5 600.9L1236 600.86L1237.5 601.17L1239 601.26L1240.5 600.91L1242 601.21L1243.5 600.97L1245 601.15L1246.5 601.24L1248 601.11L1249.5 601.2L1251 600.99L1252.5 600.8L1254 601.05L1255.5 601.09L1257 600.89L1258.5 600.99L1260 600.95L1261.5 600.8L1263 600.94L1264.5 600.98L1266 601.02L1267.5 601.14L1269 600.98L1270.5 601.27L1272 601.19L1273.5 601.24L1275 601.12L1276.5 601.11L1278 601.04L1279.5 601.17L1281 600.95L1282.5 601.07L1284 601.11L1285.5 601.03L1287 600.91L1288.5 600.8L1290 599.51L1291.5 599.64L1293 601.05L1294.5 601.14L1296 601.11L1297.5 600.91L1299 601.22L1300.5 600.89L1302 601.11L1303.5 600.79L1305 601.12L1306.5 601.08L1308 601.22L1309.5 601.19L1311 601.09L1312.5 601.16L1314 601.11L1315.5 601.04L1317 600.84L1318.5 600.99L1320 601.18L1321.5 600.85L1323 601.22L1324.5 601L1326 600.92L1327.5 600.73L1329 600.92L1330.5 600.81L1332 601.05L1333.5 601.17L1335 601.17L1336.5 601.02L1338 600.91L1339.5 600.77L1341 601.06L1342.5 600.99L1344 601.07L1345.5 600.9L1347 601.15L1348.5 600.81L1350 600.86L1351.5 600.84L1353 601.01L1354.5 601.15L1356 600.78L1357.5 601.01L1359 601.08L1360.5 599.51L1362 599.42L1363.5 600.97L1365 601.1L1366.5 601.13L1368 601.05L1369.5 600.89L1371 600.9L1372.5 600.95L1374 601.13L1375.5 600.83L1377 600.82L1378.5 600.98L1380 601.16L1381.5 600.77L1383 600.69L1384.5 600.73L1386 600.95L1387.5 600.97L1389 600.76L1390.5 600.76L1392 600.96L1393.5 600.99L1395 601.01L1396.5 601.02L1398 600.69L1399.5 600.9L1401 601.07L1402.5 601.13L1404 600.81L1405.5 601.08L1407 600.97L1408.5 601.11L1410 600.76L1411.5 600.99L1413 601.06L1414.5 600.88L1416 600.69L1417.5 600.74L1419 600.72L1420.5 600.68L1422 600.71L1423.5 600.94L1425 600.68L1426.5 601.01L1428 601L1429.5 599.74L1431 599.73L1432.5 599.68L1434 601.08L1435.5 601.1L1437 600.93L1438.5 601.1L1440 600.67L1441.5 600.67L1443 600.65L1444.5 600.72L1446 600.8L1447.5 600.84L1449 600.95L1450.5 600.98L1452 600.65L1453.5 600.81L1455 600.87L1456.5 600.79L1458 600.66L1459.5 600.9L1461 600.78L1462.5 600.94L1464 600.84L1465.5 601.07L1467 601.06L1468.5 600.63L1470 600.97L1471.5 600.95L1473 600.73L1474.5 600.64L1476 600.82L1477.5 600.76L1479 600.95L1480.5 601.04L1482 600.77L1483.5 600.72L1485 600.82L1486.5 600.92L1488 600.96L1489.5 600.86L1491 600.72L1492.5 600.73L1494 600.99L1495.5 600.82L1497 600.59L1498.5 600.77L1500 599.38L1501.5 599.59L1503 600.59L1504.5 600.69L1506 600.6L1507.5 600.79L1509 601.04L1510.5 600.82L1512 600.74L1513.5 601.01L1515 600.59L1516.5 600.72L1518 600.95L1519.5 600.54L1521 600.92L1522.5 600.72L1524 600.54L1525.5 600.66L1527 600.76L1528.5 600.72L1530 600.79L1531.5 600.55L1533 600.64L1534.5 601.01L1536 600.74L1537.5 600.76L1539 600.56L1540.5 600.66L1542 601L1543.5 600.86L1545 600.77L1546.5 600.54L1548 600.71L1549.5 600.9L1551 600.73L1552.5 600.8L1554 600.96L1555.5 600.83L1557 600.82L1558.5 600.52L1560 600.51L1561.5 600.88L1563 600.7L1564.5 600.93L1566 600.91L1567.5 600.95L1569 600.68L1570.5 599.69L1572 599.57L1573.5 600.93L1575 600.56L1576.5 600.87L1578 600.69L1579.5 600.97L1581 600.98L1582.5 600.59L1584 600.69L1585.5 600.61L1587 600.71L1588.5 600.62L1590 600.8L1591.5 600.53L1593 600.55L1594.5 600.7L1596 600.5L1597.5 600.65L1599 600.91L1600.5 600.9L1602 600.56L1603.5 600.47L1605 600.87L1606.5 600.94L1608 600.75L1609.5 600.52L1611 600.57L1612.5 600.91L1614 600.92L1615.5 600.46L1617 600.54L1618.5 600.66L1620 600.58L1621.5 600.82L1623 600.63L1624.5 600.83L1626 600.51L1627.5 600.69L1629 600.92L1630.5 600.78L1632 600.48L1633.5 600.48L1635 600.75L1636.5 600.61L1638 600.61L1639.5 599.36L1641 599.41L1642.5 600.9L1644 600.54L1645.5 600.7L1647 600.55L1648.5 600.69L1650 600.78L1651.5 600.48L1653 600.65L1654.5 600.76L1656 600.41L1657.5 600.79L1659 600.61L1660.5 600.65L1662 600.71L1663.5 600.8L1665 600.43L1666.5 600.65L1668 600.41L1669.5 600.59L1671 600.57L1672.5 600.4L1674 600.54L1675.5 600.61L1677 600.71L1678.5 600.85L1680 600.57L1681.5 600.65L1683 600.74L1684.5 600.85L1686 600.85L1687.5 600.87L1689 600.53L1690.5 600.46L1692 600.84L1693.5 600.41L1695 600.59L1696.5 600.74L1698 600.63L1699.5 600.56L1701 600.83L1702.5 600.51L1704 600.64L1705.5 600.77L1707 600.43L1708.5 600.53L1710 599.3L1711.5 599.34L1713 600.46L1714.5 600.58L1716 600.38L1717.5 600.39L1719 600.52L1720.5 600.42L1722 600.83L1723.5 600.47L1725 600.48L1726.5 600.73L1728 600.71L1729.5 600.47L1731 600.75L1732.5 600.65L1734 600.53L1735.5 600.64L1737 600.45L1738.5 600.46L1740 600.76L1741.5 600.54L1743 600.77L1744.5 600.41L1746 600.39L1747.5 600.34L1749 600.69L1750.5 600.6L1752 600.32L1753.5 600.33L1755 600.72L1756.5 600.56L1758 600.74L1759.5 600.33L1761 600.6L1762.5 600.36L1764 600.66L1765.5 600.61L1767 600.61L1768.5 600.41L1770 600.77L1771.5 600.35L1773 600.33L1774.5 600.63L1776 600.34L1777.5 600.32L1779 599.22L1780.5 599.31L1782 599.43L1783.5 600.64L1785 600.32L1786.5 600.6L1788 600.7L1789.5 600.34L1791 600.65L1792.5 600.4L1794 600.42L1795.5 600.27L1797 600.65L1798.5 600.53L1800 600.72L1801.5 600.5L1803 600.34L1804.5 600.37L1806 600.39L1807.5 600.73L1809 600.36L1810.5 600.3L1812 600.43L1813.5 600.29L1815 600.47L1816.5 600.56L1818 597.68L1819.5 597.44L1821 597.42L1822.5 597.6L1824 597.69L1825.5 597.57L1827 597.64L1828.5 597.81L1830 597.42L1831.5 597.48L1833 597.6L1834.5 599.13L1836 599.31L1837.5 599.13L1839 599.17L1840.5 599.04L1842 599.22L1843.5 599.24L1845 598.96L1846.5 598.86L1848 598.93L1849.5 597.67L1851 597.93L1852.5 598.91L1854 599.08L1855.5 599.08L1857 599.23L1858.5 598.8L1860 599.12L1861.5 598.89L1863 598.77L1864.5 599.03L1866 599.13L1867.5 598.99L1869 598.71L1870.5 599.17L1872 598.86L1873.5 598.98L1875 599.02L1876.5 598.78L1878 598.85L1879.5 598.8L1881 598.67L1882.5 598.65L1884 598.97L1885.5 598.81L1887 599.03L1888.5 598.62L1890 598.73L1891.5 598.66L1893 599.04L1894.5 598.95L1896 599L1897.5 598.8L1899 598.59L1900.5 598.73L1902 598.63L1903.5 598.52L1905 598.79L1906.5 598.64L1908 598.54L1909.5 598.74L1911 598.94L1912.5 598.94L1914 598.69L1915.5 598.5L1917 598.83L1918.5 598.49L1920 597.4L1921.5 597.16L1923 598.9L1924.5 598.67L1926 598.61L1927.5 598.52L1929 598.66L1930.5 598.86L1932 598.58L1933.5 598.46L1934.9 598.6" fill="none" stroke="#c09a35" stroke-width="1"/>
<path d="M1096.5 544.86L1098 544.89L1099.5 544.89L1101 544.93L1102.5 544.8L1104 544.86L1105.5 544.38L1107 544.56L1108.5 544.77L1110 544.59L1111.5 544.69L1113 544.26L1114.5 544.41L1116 544.27L1117.5 544.39L1119 544.37L1120.5 544.06L1122 544.13L1123.5 544.13L1125 544.42L1126.5 544.31L1128 543.97L1129.5 544.26L1131 543.9L1132.5 544.11L1134 543.83L1135.5 543.74L1137 544.14L1138.5 543.78L1140 543.75L1141.5 544.11L1143 544.02L1144.5 543.7L1146 544L1147.5 543.76L1149 543.8L1150.5 542.13L1152 542.47L1153.5 543.71L1155 543.82L1156.5 543.75L1158 543.42L1159.5 543.42L1161 543.29L1162.5 543.25L1164 543.18L1165.5 543.27L1167 543.39L1168.5 543.05L1170 543.36L1171.5 543.16L1173 543.11L1174.5 543.34L1176 543.14L1177.5 543.02L1179 543.08L1180.5 543.16L1182 542.8L1183.5 543.23L1185 542.72L1186.5 543.05L1188 543.07L1189.5 542.63L1191 542.98L1192.5 542.74L1194 542.81L1195.5 542.5L1197 542.48L1198.5 542.52L1200 542.88L1201.5 542.47L1203 542.71L1204.5 542.77L1206 542.74L1207.5 542.41L1209 542.39L1210.5 542.44L1212 542.54L1213.5 542.17L1215 542.46L1216.5 542.45L1218 542.45L1219.5 542.01L1221 541.03L1222.5 540.58L1224 542.07L1225.5 542.17L1227 542.3L1228.5 541.98L1230 542.24L1231.5 542.02L1233 541.87L1234.5 541.84L1236 541.74L1237.5 541.66L1239 541.66L1240.5 541.9L1242 542.02L1243.5 541.57L1245 541.49L1246.5 541.92L1248 541.67L1249.5 541.57L1251 541.46L1252.5 541.6L1254 541.69L1255.5 541.47L1257 541.42L1258.5 541.21L1260 541.61L1261.5 541.14L1263 541.34L1264.5 541.48L1266 541.09L1267.5 541.36L1269 541.44L1270.5 541.25L1272 541.3L1273.5 540.92L1275 541.06L1276.5 540.88L1278 541.2L1279.5 540.89L1281 540.94L1282.5 541.18L1284 541.08L1285.5 541.11L1287 540.82L1288.5 540.8L1290 539.49L1291.5 539.34L1293 540.61L1294.5 540.64L1296 540.48L1297.5 540.56L1299 540.83L1300.5 540.79L1302 540.59L1303.5 540.5L1305 540.38L1306.5 540.23L1308 540.29L1309.5 540.51L1311 540.52L1312.5 540.24L1314 540.42L1315.5 540.38L1317 540.31L1318.5 540.27L1320 540.28L1321.5 540.05L1323 540.19L1324.5 539.95L1326 540.02L1327.5 540.13L1329 540.06L1330.5 539.83L1332 540.13L1333.5 539.95L1335 539.88L1336.5 539.57L1338 539.8L1339.5 539.62L1341 539.8L1342.5 539.67L1344 539.81L1345.5 539.7L1347 539.74L1348.5 539.48L1350 539.6L1351.5 539.62L1353 539.63L1354.5 539.36L1356 539.58L1357.5 539.56L1359 539.44L1360.5 538.15L1362 538.11L1363.5 539.26L1365 539.23L1366.5 539.02L1368 539.32L1369.5 539.34L1371 539.08L1372.5 539.16L1374 539.14L1375.5 539.11L1377 538.8L1378.5 539.08L1380 538.95L1381.5 538.96L1383 538.8L1384.5 538.87L1386 538.92L1387.5 538.82L1389 538.83L1390.5 538.45L1392 538.49L1393.5 538.6L1395 538.67L1396.5 538.42L1398 538.62L1399.5 538.57L1401 538.24L1402.5 538.42L1404 538.27L1405.5 538.15L1407 538.16L1408.5 538.22L1410 538.12L1411.5 538.1L1413 537.99L1414.5 538.17L1416 538.1L1417.5 538.18L1419 538.14L1420.5 537.93L1422 538.23L1423.5 537.75L1425 537.92L1426.5 537.83L1428 537.86L1429.5 536.28L1431 536.61L1432.5 536.35L1434 537.55L1435.5 537.81L1437 537.52L1438.5 537.71L1440 537.58L1441.5 537.67L1443 537.83L1444.5 537.72L1446 537.49L1447.5 537.66L1449 537.54L1450.5 537.38L1452 537.23L1453.5 537.43L1455 537.38L1456.5 537.54L1458 537.52L1459.5 537.31L1461 537.15L1462.5 537.39L1464 536.91L1465.5 536.93L1467 537.13L1468.5 537.12L1470 536.86L1471.5 537.07L1473 537.17L1474.5 536.88L1476 536.88L1477.5 536.74L1479 536.74L1480.5 537.05L1482 536.73L1483.5 536.98L1485 536.93L1486.5 536.74L1488 536.54L1489.5 536.87L1491 536.6L1492.5 536.52L1494 536.45L1495.5 536.75L1497 536.47L1498.5 536.34L1500 535L1501.5 534.79L1503 536.41L1504.5 536.29L1506 536.18L1507.5 536.4L1509 536.39L1510.5 535.95L1512 536.18L1513.5 536.02L1515 536.32L1516.5 536.21L1518 535.91L1519.5 535.89L1521 535.8L1522.5 536.19L1524 535.81L1525.5 535.94L1527 535.84L1528.5 535.89L1530 535.84L1531.5 535.88L1533 535.53L1534.5 535.82L1536 535.56L1537.5 535.65L1539 535.52L1540.5 535.47L1542 535.55L1543.5 535.49L1545 535.41L1546.5 535.57L1548 535.46L1549.5 535.15L1551 535.23L1552.5 535.3L1554 535.5L1555.5 535.45L1557 535.25L1558.5 534.95L1560 535.3L1561.5 535.1L1563 535.14L1564.5 535.17L1566 535.11L1567.5 535L1569 535.18L1570.5 533.49L1572 533.46L1573.5 535.06L1575 534.7L1576.5 534.72L1578 534.95L1579.5 534.54L1581 534.9L1582.5 534.79L1584 534.63L1585.5 534.53L1587 534.74L1588.5 534.78L1590 534.36L1591.5 534.5L1593 534.5L1594.5 534.45L1596 534.33L1597.5 534.21L1599 534.4L1600.5 534.48L1602 534.07L1603.5 534.12L1605 534.39L1606.5 534.34L1608 534.25L1609.5 533.9L1611 534.21L1612.5 534.31L1614 534.29L1615.5 534.11L1617 533.75L1618.5 534.12L1620 533.78L1621.5 533.96L1623 534.08L1624.5 533.93L1626 533.61L1627.5 533.66L1629 533.94L1630.5 533.52L1632 533.72L1633.5 533.59L1635 533.44L1636.5 533.63L1638 533.31L1639.5 531.92L1641 532.02L1642.5 533.23L1644 533.2L1645.5 533.42L1647 533.48L1648.5 533.51L1650 533.11L1651.5 533.23L1653 533.14L1654.5 533.25L1656 533.16L1657.5 533.36L1659 533.04L1660.5 532.85L1662 533.14L1663.5 532.84L1665 533.05L1666.5 532.95L1668 533.12L1669.5 532.91L1671 532.92L1672.5 532.71L1674 532.82L1675.5 532.64L1677 532.86L1678.5 532.71L1680 532.49L1681.5 532.51L1683 532.54L1684.5 532.69L1686 532.38L1687.5 532.62L1689 532.56L1690.5 532.24L1692 532.5L1693.5 532.18L1695 532.17L1696.5 532.37L1698 532.16L1699.5 532.45L1701 532.22L1702.5 532.11L1704 532.32L1705.5 531.9L1707 532.22L1708.5 531.85L1710 530.47L1711.5 530.84L1713 532.07L1714.5 531.81L1716 531.73L1717.5 532.13L1719 531.94L1720.5 531.99L1722 531.62L1723.5 531.83L1725 531.66L1726.5 531.57L1728 531.59L1729.5 531.7L1731 531.53L1732.5 531.52L1734 531.36L1735.5 531.68L1737 531.56L1738.5 531.61L1740 531.39L1741.5 531.57L1743 531.37L1744.5 531.37L1746 531.33L1747.5 531.39L1749 531.18L1750.5 531L1752 530.94L1753.5 530.99L1755 530.88L1756.5 531.27L1758 531.04L1759.5 531.15L1761 530.74L1762.5 530.94L1764 531.12L1765.5 530.95L1767 530.82L1768.5 530.81L1770 530.6L1771.5 530.59L1773 530.57L1774.5 530.64L1776 530.62L1777.5 530.83L1779 529.04L1780.5 529.06L1782 529.04L1783.5 530.35L1785 530.38L1786.5 530.32L1788 530.41L1789.5 530.16L1791 530.57L1792.5 530.26L1794 530.52L1795.5 530.36L1797 530.32L1798.5 530.19L1800 530.4L1801.5 529.95L1803 530.2L1804.5 529.98L1806 530.14L1807.5 530.13L1809 529.82L1810.5 529.81L1812 529.69L1813.5 529.76L1815 529.65L1816.5 529.78L1817.5 529.8L1818.6 508L1819.5 505.4L1820.4 507.6L1821 508.46L1822.5 508.51L1824 508.4L1825.5 508.6L1827 508.57L1828.5 508.27L1830 508.29L1831.5 508.48L1833 508.59L1834.5 508.42L1836 508.29L1837.5 508.54L1839 508.03L1840.5 508.03L1842 508.37L1843.5 508.16L1845 507.96L1846.5 508.19L1848 508.38L1849.5 506.72L1851 506.62L1852.5 507.87L1854 507.83L1855.5 508.22L1857 508L1858.5 508.19L1860 507.73L1861.5 507.8L1863 507.68L1864.5 507.83L1866 507.64L1867.5 507.72L1869 507.77L1870.5 507.69L1872 507.54L1873.5 507.51L1875 507.96L1876.5 507.54L1878 507.68L1879.5 507.6L1881 507.65L1882.5 507.4L1884 507.49L1885.5 507.36L1887 507.56L1888.5 507.73L1890 507.54L1891.5 507.65L1893 507.3L1894.5 507.18L1896 507.42L1897.5 507.37L1899 507.39L1900.5 507.27L1902 507.37L1903.5 507.4L1905 507.47L1906.5 507.14L1908 507.19L1909.5 507.35L1911 507.03L1912.5 506.95L1914 507.03L1915.5 506.89L1917 507.21L1918.5 507.21L1920 505.54L1921.5 505.42L1923 506.77L1924.5 506.83L1926 506.73L1927.5 506.88L1929 506.93L1930.5 506.74L1932 506.63L1933.5 506.92L1934.9 506.8" fill="none" stroke="#11243d" stroke-width="1"/>
<path d="M1114.6 478.2V617.6M1184.43 478.2V617.6M1254.26 478.2V617.6M1324.09 478.2V617.6M1393.92 478.2V617.6M1463.75 478.2V617.6M1533.58 478.2V617.6M1603.41 478.2V617.6M1673.24 478.2V617.6M1743.07 478.2V617.6M1812.9 478.2V617.6M1882.73 478.2V617.6M1096.5 478.2H1934.9M1096.5 506.08H1934.9M1096.5 533.96H1934.9M1096.5 561.84H1934.9M1096.5 589.72H1934.9M1096.5 617.6H1934.9" stroke="rgba(255,255,255,.07)" stroke-width="1" fill="none"/>
<path d="M1096.5 500.8H1934.9" stroke="#cd5936" stroke-width="2"/>
<path d="M1096.5 500.5H1934.9" stroke="#df8c5c" stroke-width=".7" stroke-dasharray="5 4" opacity=".8"/>
<path d="M198.8 717.2V857.4M268.1 717.2V857.4M337.4 717.2V857.4M406.7 717.2V857.4M476 717.2V857.4M545.3 717.2V857.4M614.6 717.2V857.4M683.9 717.2V857.4M753.2 717.2V857.4M822.5 717.2V857.4M891.8 717.2V857.4M961.1 717.2V857.4M180.8 717.2H1012.5M180.8 740.57H1012.5M180.8 763.93H1012.5M180.8 787.3H1012.5M180.8 810.67H1012.5M180.8 834.03H1012.5M180.8 857.4H1012.5" stroke="#38383b" stroke-width="1" fill="none"/>
<path d="M180.8 757.48L180.95 756.97L181.4 755.47L181.85 756.94L182.3 758.6L183.3 758.63L184.35 752.47L185.4 746.6L185.8 748.94L186.45 752.72L187.5 758.44L188.3 758.52L190.8 758.44L193.3 758.72L195.8 758.68L198.3 758.42L200.8 758.79L203.3 758.79L205.8 758.66L207.5 758.65L208.25 753.06L208.3 752.65L209 747.81L209.75 753.02L210.5 758.48L210.8 758.5L213.3 758.41L215.8 758.59L218.3 758.58L220.8 758.74L223.3 758.61L225.8 758.66L228.3 758.6L228.8 758.66L229.3 757.13L229.8 755.61L230.3 757.35L230.8 758.8L233.3 758.74L234.7 758.68L235.2 757.08L235.7 755.59L235.8 755.91L236.2 756.98L236.7 758.71L238.3 758.56L240.1 758.74L240.55 757.85L240.8 757.69L241 757.34L241.45 757.7L241.9 758.48L243.3 758.76L243.7 758.59L244.1 758.14L244.5 757.26L244.9 757.78L245.3 758.65L245.8 758.71L246.4 758.51L246.85 757.53L247.3 756.73L247.75 757.89L248.2 758.7L248.3 758.45L250.5 758.5L250.8 756.83L251.3 754.12L252.1 750.12L252.9 754.17L253.3 756.47L253.7 758.58L255.8 758.48L258.3 758.69L260.8 758.45L263.3 758.66L265.8 758.45L268.3 758.57L270.8 758.49L273.3 758.51L275.8 758.79L278.3 758.72L280.8 758.52L283.3 758.75L285.8 758.48L288.3 758.56L290.1 758.74L290.55 758.06L290.8 757.51L291 757.6L291.45 757.89L291.9 758.5L293.3 758.71L293.4 758.53L293.85 757.77L294.3 756.93L294.75 757.69L295.2 758.63L295.8 758.5L297.9 758.64L298.3 757.08L298.5 756.38L299.1 754.38L299.7 756.39L300.3 758.63L300.8 758.75L303.1 758.47L303.3 758.19L303.55 758.16L304 757.53L304.45 757.9L304.9 758.48L305.8 758.7L308.1 758.78L308.3 758.19L308.55 758.13L309 757.45L309.45 757.99L309.9 758.57L310.8 758.44L312.5 758.42L312.95 757.99L313.3 757.07L313.4 757.08L313.85 757.7L314.3 758.73L315.8 758.64L317.7 758.52L318.3 756.67L318.9 755.09L319.5 756.63L320.1 758.49L320.8 758.62L323.3 758.74L325.8 758.65L328.3 758.51L330.8 758.77L333.3 758.48L335.8 758.41L338.3 758.51L340.8 758.58L343.3 758.42L345.8 758.47L348.3 758.55L350.8 758.63L353.3 758.45L355.8 758.54L358.3 758.76L360.8 758.79L363.3 758.66L365.8 758.68L368.3 758.63L370.8 758.46L373.3 758.41L375.8 758.41L378.3 758.76L380.8 758.68L383.3 758.79L385.8 758.41L388.3 758.65L390.8 758.59L393.3 758.69L395.8 758.53L398.3 758.8L400.8 758.43L403.3 758.62L405.8 758.69L408.3 758.76L410.8 758.69L413.3 758.68L415.8 758.72L418.3 758.77L420.8 758.54L423.3 758.67L425.8 758.76L428.3 758.75L430.8 758.57L433.3 758.72L435.8 758.75L438.3 758.63L440.8 758.65L443.3 758.55L445.8 758.63L448.3 758.64L450.8 758.43L453.3 758.66L455.8 758.8L458.3 758.75L460.8 758.69L463.3 758.56L465.8 758.69L468.3 758.63L470.8 758.58L473.3 758.74L475.8 758.43L478.3 758.7L480.8 758.41L483.3 758.64L485.8 758.59L488.3 758.49L490.8 758.68L493.3 758.6L495.8 758.65L498.3 758.77L500.8 758.5L503.3 758.4L505.8 758.52L508.3 758.67L510.8 758.48L513.3 758.47L515.8 758.76L518.3 758.66L520.8 758.58L523.3 758.76L525.8 758.53L528.3 758.67L530.8 758.48L533.3 758.57L535.8 758.72L538.3 758.77L540.8 758.75L543.3 758.55L545.8 758.63L548.3 758.53L550.8 758.45L553.3 758.6L555.8 758.73L558.3 758.74L560.8 758.68L563.3 758.78L565.8 758.51L568.3 758.47L570.8 758.58L573.3 758.51L575.8 758.49L578.3 758.57L580.8 758.65L583.3 758.6L585.8 758.53L588.3 758.74L590.8 758.79L593.3 758.58L595.8 758.43L598.3 758.41L600.8 758.75L603.3 758.42L605.8 758.68L608.3 758.63L610.8 758.52L613.3 758.72L615.8 758.41L618.3 758.45L620.8 758.58L623.3 758.41L625.8 758.73L628.3 758.49L630.8 758.46L633.3 758.42L635.8 758.65L638.3 758.58L640.8 758.65L643.3 758.66L645.8 758.72L648.3 758.78L650.8 758.67L653.3 758.48L655.8 758.59L658.3 758.47L660.8 758.4L663.3 758.59L665.8 758.69L668.3 758.47L670.8 758.51L673.3 758.54L675.8 758.68L678.3 758.61L680.8 758.65L683.3 758.7L685.8 758.56L688.3 758.72L690.8 758.76L693.3 758.43L695.8 758.77L698.3 758.69L700.8 758.45L703.3 758.58L705.8 758.65L708.3 758.76L710.8 758.55L713.3 758.63L715.8 758.75L718.3 758.72L720.8 758.78L723.3 758.59L725.8 758.66L728.3 758.48L730.8 758.69L733.3 758.73L735.8 758.66L738.3 758.69L740.8 758.49L743.3 758.76L745.8 758.79L748.3 758.79L750.8 758.61L753.3 758.72L755.8 758.53L758.3 758.76L760.8 758.74L763.3 758.54L765.8 758.43L768.3 758.58L770.8 758.62L773.3 758.71L775.8 758.59L778.3 758.41L780.8 758.72L783.3 758.43L785.8 758.72L788.3 758.47L790.8 758.53L791.4 758.72L791.9 757.96L792.4 757.46L792.9 758.11L793.3 758.59L793.4 758.74L795.8 758.68L798.3 758.78L799.5 758.6L800.05 755.68L800.6 752.23L800.8 753.42L801.15 755.51L801.6 757.95L801.7 757.67L802.25 752.01L802.9 745.31L803.3 749.53L803.55 751.97L804.2 758.52L805.8 758.55L808.3 758.74L810.8 758.76L813.3 758.48L815.8 758.74L818.3 758.79L820.8 758.61L823.3 758.63L825.8 758.48L827 758.61L827.5 757.95L828 757.34L828.3 757.5L828.5 758.14L829 758.61L830.8 758.56L831.1 758.72L831.55 757.88L832 757.1L832.45 757.93L832.9 758.43L833.3 758.62L834.6 758.57L835.05 757.68L835.5 756.57L835.8 757.04L835.95 757.49L836.4 758.45L837.1 758.57L837.55 757.83L838 756.96L838.3 757.39L838.45 757.63L838.9 758.48L840.1 758.65L840.55 758.02L840.8 757.29L841 757.21L841.45 757.66L841.9 758.48L843.3 758.49L843.5 758.67L844.1 755.43L844.7 752.34L845.3 755.55L845.8 757.93L845.9 758.69L846.3 758.45L846.75 757.6L847.2 756.5L847.65 757.48L848.1 758.61L848.2 758.57L848.3 758.25L848.7 757.07L849.2 755.61L849.7 756.96L850.2 758.48L850.7 757.15L850.8 756.86L851.2 755.61L851.7 757.24L852.2 758.64L852.6 758.74L853.05 757.89L853.3 757.76L853.5 757.52L853.95 758.16L854.4 758.53L855.8 758.53L856.1 758.77L856.7 756.74L857.3 755.3L857.9 757.01L858.3 757.87L858.5 758.5L860.1 758.69L860.55 757.95L860.8 757.58L861 757.63L861.45 758.02L861.9 758.72L863.3 758.45L865.1 758.56L865.55 758.17L865.8 757.63L866 757.48L866.45 758.17L866.9 758.76L868.3 758.79L870.8 758.45L871.1 758.6L871.55 758.05L872 757.3L872.45 758.02L872.9 758.48L873.3 758.43L874.5 758.44L875.15 754.41L875.8 750.62L876.45 754.61L877.1 758.63L878.3 758.46L879.5 758.47L879.95 757.58L880.4 756.94L880.8 757.8L880.85 757.87L881.3 758.44L883.1 758.42L883.3 758.6L883.55 758.18L884 757.91L884.45 758.13L884.9 758.59L885.8 758.61L887.4 758.57L888 755.54L888.3 753.76L888.6 752.48L889.2 755.64L889.8 758.47L890.6 758.58L890.8 757.66L891.2 755.46L891.8 752.28L892.4 755.37L893 758.61L893.3 758.41L894.1 758.76L894.55 758.22L895 757.68L895.45 758.24L895.8 758.54L895.9 758.56L898.3 758.64L900.4 758.6L900.8 758.35L900.85 758.22L901.3 757.5L901.75 758.26L902.2 758.7L903.3 758.71L905.1 758.73L905.55 757.96L905.8 757.83L906 757.55L906.45 758.08L906.9 758.71L908.3 758.71L910.8 758.56L913.3 758.69L915.8 758.43L916.8 758.54L917.3 757.79L917.8 756.8L918.3 757.74L918.8 758.66L920.1 758.65L920.55 757.99L920.8 758L921 757.67L921.45 758.04L921.9 758.66L923.3 758.63L924.3 758.61L924.9 754.26L925.5 750.2L925.8 752.21L926.1 754.38L926.7 758.7L928.1 758.79L928.3 758.23L928.55 758.25L929 757.9L929.45 758.1L929.9 758.56L930.8 758.42L933.3 758.48L935.8 758.55L938.3 758.44L940.8 758.5L943.3 758.76L945.8 758.62L948.3 758.6L950.8 758.79L953.3 758.63L955.8 758.8L958.3 758.66L960.8 758.72L963.3 758.43L965.8 758.64L968.3 758.7L970.8 758.42L973.3 758.77L975.8 758.46L978.3 758.59L980.8 758.47L983.3 758.6L985.8 758.64L988.3 758.42L990.8 758.78L993.3 758.57L995.8 758.61L998.3 758.64L1000.8 758.55L1003.3 758.51L1005.8 758.66L1008.3 758.62L1010.8 758.51L1012.5 758.69L1012.5 761.5L180.8 761.5Z" fill="#a39640"/>
<rect x="180.8" y="761.300" width="831.7" height="2.800" fill="#96a567"/>
<path d="M180.8 764L1012.5 764L1012.5 768.41L1010.8 768.59L1008.3 768.48L1005.8 768.44L1003.3 768.59L1000.8 768.55L998.3 768.46L995.8 768.49L993.3 768.53L990.8 768.32L988.3 768.68L985.8 768.46L983.3 768.5L980.8 768.63L978.3 768.51L975.8 768.64L973.3 768.33L970.8 768.68L968.3 768.4L965.8 768.46L963.3 768.67L960.8 768.38L958.3 768.44L955.8 768.3L953.3 768.47L950.8 768.31L948.3 768.5L945.8 768.48L943.3 768.34L940.8 768.6L938.3 768.66L935.8 768.55L933.3 768.62L930.8 768.68L929.9 768.54L929.45 769L929 769.2L928.55 768.85L928.3 768.87L928.1 768.31L926.7 768.4L926.1 773.07L925.8 775.42L925.5 777.6L924.9 773.19L924.3 768.49L923.3 768.47L921.9 768.44L921.45 769.06L921 769.43L920.8 769.1L920.55 769.11L920.1 768.45L918.8 768.44L918.3 769.36L917.8 770.3L917.3 769.31L916.8 768.56L915.8 768.67L913.3 768.41L910.8 768.54L908.3 768.39L906.9 768.39L906.45 768.92L906 769.35L905.8 769.12L905.55 769.04L905.1 768.37L903.3 768.39L902.2 768.4L901.75 769.09L901.3 770.1L900.85 769.13L900.8 768.97L900.4 768.5L898.3 768.46L895.9 768.54L895.8 768.58L895.45 768.96L895 769.62L894.55 768.98L894.1 768.34L893.3 768.69L893 768.49L892.4 772.38L891.8 776.12L891.2 772.29L890.8 769.65L890.6 768.52L889.8 768.63L889.2 772.11L888.6 775.92L888.3 774.32L888 772.21L887.4 768.53L885.8 768.49L884.9 768.51L884.45 769.07L884 769.39L883.55 769.02L883.3 768.54L883.1 768.68L881.3 768.66L880.85 769.33L880.8 769.41L880.4 770.36L879.95 769.62L879.5 768.63L878.3 768.64L877.1 768.47L876.45 772.24L875.8 775.98L875.15 772.44L874.5 768.66L873.3 768.67L872.9 768.62L872.45 769.03L872 769.7L871.55 769L871.1 768.5L870.8 768.65L868.3 768.31L866.9 768.34L866.45 769.03L866 769.82L865.8 769.63L865.55 769.03L865.1 768.54L863.3 768.65L861.9 768.38L861.45 769.13L861 769.57L860.8 769.59L860.55 769.2L860.1 768.41L858.5 768.6L858.3 769.45L857.9 770.74L857.3 773.1L856.7 771.01L856.1 768.33L855.8 768.57L854.4 768.57L853.95 768.99L853.5 769.68L853.3 769.41L853.05 769.26L852.6 768.36L852.2 768.46L851.7 770.01L851.2 771.79L850.8 770.42L850.7 770.1L850.2 768.62L849.7 770.44L849.2 772.09L848.7 770.33L848.3 768.91L848.2 768.53L848.1 768.49L847.65 769.82L847.2 771L846.75 769.7L846.3 768.65L845.9 768.41L845.8 769.25L845.3 772L844.7 775.66L844.1 772.12L843.5 768.43L843.3 768.61L841.9 768.62L841.45 769.49L841 769.99L840.8 769.89L840.55 769.13L840.1 768.45L838.9 768.62L838.45 769.67L838.3 769.98L838 770.54L837.55 769.47L837.1 768.53L836.4 768.65L835.95 769.81L835.8 770.33L835.5 770.93L835.05 769.62L834.6 768.53L833.3 768.48L832.9 768.67L832.45 769.32L832 770.3L831.55 769.37L831.1 768.38L830.8 768.54L829 768.49L828.5 769.01L828.3 769.67L828 769.86L827.5 769.2L827 768.49L825.8 768.62L823.3 768.47L820.8 768.49L818.3 768.31L815.8 768.36L813.3 768.62L810.8 768.34L808.3 768.36L805.8 768.55L804.2 768.58L803.55 775.78L803.3 778.47L802.9 783.09L802.25 775.74L801.7 769.53L801.6 769.18L801.15 771.79L800.8 774.01L800.6 775.27L800.05 771.62L799.5 768.5L798.3 768.32L795.8 768.42L793.4 768.36L793.3 768.57L792.9 769.29L792.4 770.24L791.9 769.44L791.4 768.38L790.8 768.57L788.3 768.63L785.8 768.38L783.3 768.67L780.8 768.38L778.3 768.69L775.8 768.51L773.3 768.39L770.8 768.48L768.3 768.52L765.8 768.67L763.3 768.56L760.8 768.36L758.3 768.34L755.8 768.57L753.3 768.38L750.8 768.49L748.3 768.31L745.8 768.31L743.3 768.34L740.8 768.61L738.3 768.41L735.8 768.44L733.3 768.37L730.8 768.41L728.3 768.62L725.8 768.44L723.3 768.51L720.8 768.32L718.3 768.38L715.8 768.35L713.3 768.47L710.8 768.55L708.3 768.34L705.8 768.45L703.3 768.52L700.8 768.65L698.3 768.41L695.8 768.33L693.3 768.67L690.8 768.34L688.3 768.38L685.8 768.54L683.3 768.4L680.8 768.45L678.3 768.49L675.8 768.42L673.3 768.56L670.8 768.59L668.3 768.63L665.8 768.41L663.3 768.51L660.8 768.7L658.3 768.63L655.8 768.51L653.3 768.62L650.8 768.43L648.3 768.32L645.8 768.38L643.3 768.44L640.8 768.45L638.3 768.52L635.8 768.45L633.3 768.68L630.8 768.64L628.3 768.61L625.8 768.37L623.3 768.69L620.8 768.52L618.3 768.65L615.8 768.69L613.3 768.38L610.8 768.58L608.3 768.47L605.8 768.42L603.3 768.68L600.8 768.35L598.3 768.69L595.8 768.67L593.3 768.52L590.8 768.31L588.3 768.36L585.8 768.57L583.3 768.5L580.8 768.45L578.3 768.53L575.8 768.61L573.3 768.59L570.8 768.52L568.3 768.63L565.8 768.59L563.3 768.32L560.8 768.42L558.3 768.36L555.8 768.37L553.3 768.5L550.8 768.65L548.3 768.57L545.8 768.47L543.3 768.55L540.8 768.35L538.3 768.33L535.8 768.38L533.3 768.53L530.8 768.62L528.3 768.43L525.8 768.57L523.3 768.34L520.8 768.52L518.3 768.44L515.8 768.34L513.3 768.63L510.8 768.62L508.3 768.43L505.8 768.58L503.3 768.7L500.8 768.6L498.3 768.33L495.8 768.45L493.3 768.5L490.8 768.42L488.3 768.61L485.8 768.51L483.3 768.46L480.8 768.69L478.3 768.4L475.8 768.67L473.3 768.36L470.8 768.52L468.3 768.47L465.8 768.41L463.3 768.54L460.8 768.41L458.3 768.35L455.8 768.3L453.3 768.44L450.8 768.67L448.3 768.46L445.8 768.47L443.3 768.55L440.8 768.45L438.3 768.47L435.8 768.35L433.3 768.38L430.8 768.53L428.3 768.35L425.8 768.34L423.3 768.43L420.8 768.56L418.3 768.33L415.8 768.38L413.3 768.42L410.8 768.41L408.3 768.34L405.8 768.41L403.3 768.48L400.8 768.67L398.3 768.3L395.8 768.57L393.3 768.41L390.8 768.51L388.3 768.45L385.8 768.69L383.3 768.31L380.8 768.42L378.3 768.34L375.8 768.69L373.3 768.69L370.8 768.64L368.3 768.47L365.8 768.42L363.3 768.44L360.8 768.31L358.3 768.34L355.8 768.56L353.3 768.65L350.8 768.47L348.3 768.55L345.8 768.63L343.3 768.68L340.8 768.52L338.3 768.59L335.8 768.69L333.3 768.62L330.8 768.33L328.3 768.59L325.8 768.45L323.3 768.36L320.8 768.48L320.1 768.61L319.5 771.02L318.9 773.11L318.3 770.98L317.7 768.58L315.8 768.46L314.3 768.37L313.85 769.5L313.4 770.22L313.3 770.2L312.95 769.21L312.5 768.68L310.8 768.66L309.9 768.53L309.45 769.26L309 769.95L308.55 769.12L308.3 768.98L308.1 768.32L305.8 768.4L304.9 768.62L304.45 769.2L304 769.57L303.55 768.94L303.3 768.91L303.1 768.63L300.8 768.35L300.3 768.47L299.7 771.06L299.1 773.42L298.5 771.07L298.3 770.25L297.9 768.46L295.8 768.6L295.2 768.47L294.75 769.46L294.3 770.27L293.85 769.38L293.4 768.57L293.3 768.39L291.9 768.6L291.45 769.26L291 769.6L290.8 769.67L290.55 769.09L290.1 768.36L288.3 768.54L285.8 768.62L283.3 768.35L280.8 768.58L278.3 768.38L275.8 768.31L273.3 768.59L270.8 768.61L268.3 768.53L265.8 768.65L263.3 768.44L260.8 768.65L258.3 768.41L255.8 768.62L253.7 768.52L253.3 770.93L252.9 773.53L252.1 778.18L251.3 773.58L250.8 770.5L250.5 768.6L248.3 768.65L248.2 768.4L247.75 769.31L247.3 770.57L246.85 769.67L246.4 768.59L245.8 768.39L245.3 768.45L244.9 769.42L244.5 770.04L244.1 769.06L243.7 768.51L243.3 768.34L241.9 768.62L241.45 769.5L241 769.96L240.8 769.56L240.55 769.35L240.1 768.36L238.3 768.54L236.7 768.39L236.2 770.42L235.8 771.73L235.7 772.11L235.2 770.32L234.7 768.42L233.3 768.36L230.8 768.3L230.3 770.05L229.8 772.09L229.3 770.27L228.8 768.44L228.3 768.5L225.8 768.44L223.3 768.49L220.8 768.36L218.3 768.52L215.8 768.51L213.3 768.69L210.8 768.6L210.5 768.62L209.75 774.58L209 780.29L208.3 774.99L208.25 774.54L207.5 768.45L205.8 768.44L203.3 768.31L200.8 768.31L198.3 768.68L195.8 768.42L193.3 768.38L190.8 768.66L188.3 768.58L187.5 768.66L186.45 774.68L185.8 778.65L185.4 781.1L184.35 774.93L183.3 768.47L182.3 768.5L181.85 770.01L181.4 771.33L180.95 769.98L180.8 769.52Z" fill="#b16b3e"/>
<path d="M180.8 764L1012.5 764L1012.5 764.7L1010.8 764.7L1008.3 764.7L1005.8 764.7L1003.3 764.7L1000.8 764.7L998.3 764.7L995.8 764.7L993.3 764.7L990.8 764.7L988.3 764.7L985.8 764.7L983.3 764.7L980.8 764.7L978.3 764.7L975.8 764.7L973.3 764.7L970.8 764.7L968.3 764.7L965.8 764.7L963.3 764.7L960.8 764.7L958.3 764.7L955.8 764.7L953.3 764.7L950.8 764.7L948.3 764.7L945.8 764.7L943.3 764.7L940.8 764.7L938.3 764.7L935.8 764.7L933.3 764.7L930.8 764.7L929.9 764.7L929.45 764.87L929 765.04L928.55 764.87L928.3 764.77L928.1 764.7L926.7 764.7L926.1 766.65L925.8 767.63L925.5 768.61L924.9 766.65L924.3 764.7L923.3 764.7L921.9 764.7L921.45 764.91L921 765.12L920.8 765.03L920.55 764.91L920.1 764.7L918.8 764.7L918.3 765.04L917.8 765.37L917.3 765.04L916.8 764.7L915.8 764.7L913.3 764.7L910.8 764.7L908.3 764.7L906.9 764.7L906.45 764.91L906 765.12L905.8 765.03L905.55 764.91L905.1 764.7L903.3 764.7L902.2 764.7L901.75 765.01L901.3 765.33L900.85 765.02L900.8 764.98L900.4 764.7L898.3 764.7L895.9 764.7L895.8 764.76L895.45 764.95L895 765.2L894.55 764.95L894.1 764.7L893.3 764.7L893 764.7L892.4 766.27L891.8 767.85L891.2 766.28L890.8 765.23L890.6 764.7L889.8 764.7L889.2 766.27L888.6 767.85L888.3 767.06L888 766.27L887.4 764.7L885.8 764.7L884.9 764.7L884.45 764.91L884 765.12L883.55 764.91L883.3 764.79L883.1 764.7L881.3 764.7L880.85 765.12L880.8 765.17L880.4 765.54L879.95 765.12L879.5 764.7L878.3 764.7L877.1 764.7L876.45 766.27L875.8 767.85L875.15 766.28L874.5 764.7L873.3 764.7L872.9 764.7L872.45 764.95L872 765.2L871.55 764.95L871.1 764.7L870.8 764.7L868.3 764.7L866.9 764.7L866.45 764.95L866 765.2L865.8 765.09L865.55 764.95L865.1 764.7L863.3 764.7L861.9 764.7L861.45 764.95L861 765.2L860.8 765.09L860.55 764.95L860.1 764.7L858.5 764.7L858.3 765.04L857.9 765.71L857.3 766.72L856.7 765.71L856.1 764.7L855.8 764.7L854.4 764.7L853.95 764.97L853.5 765.25L853.3 765.12L853.05 764.97L852.6 764.7L852.2 764.7L851.7 765.39L851.2 766.09L850.8 765.53L850.7 765.39L850.2 764.7L849.7 765.46L849.2 766.21L848.7 765.46L848.3 764.85L848.2 764.7L848.1 764.7L847.65 765.2L847.2 765.71L846.75 765.2L846.3 764.7L845.9 764.7L845.8 764.95L845.3 766.19L844.7 767.68L844.1 766.19L843.5 764.7L843.3 764.7L841.9 764.7L841.45 765.04L841 765.37L840.8 765.22L840.55 765.04L840.1 764.7L838.9 764.7L838.45 765.16L838.3 765.32L838 765.62L837.55 765.16L837.1 764.7L836.4 764.7L835.95 765.25L835.8 765.43L835.5 765.79L835.05 765.25L834.6 764.7L833.3 764.7L832.9 764.7L832.45 765.08L832 765.46L831.55 765.08L831.1 764.7L830.8 764.7L829 764.7L828.5 764.99L828.3 765.11L828 765.29L827.5 764.99L827 764.7L825.8 764.7L823.3 764.7L820.8 764.7L818.3 764.7L815.8 764.7L813.3 764.7L810.8 764.7L808.3 764.7L805.8 764.7L804.2 764.7L803.55 767.77L803.3 768.95L802.9 770.83L802.25 767.77L801.7 765.17L801.6 764.95L801.15 766.09L800.8 766.97L800.6 767.47L800.05 766.09L799.5 764.7L798.3 764.7L795.8 764.7L793.4 764.7L793.3 764.77L792.9 765.04L792.4 765.37L791.9 765.04L791.4 764.7L790.8 764.7L788.3 764.7L785.8 764.7L783.3 764.7L780.8 764.7L778.3 764.7L775.8 764.7L773.3 764.7L770.8 764.7L768.3 764.7L765.8 764.7L763.3 764.7L760.8 764.7L758.3 764.7L755.8 764.7L753.3 764.7L750.8 764.7L748.3 764.7L745.8 764.7L743.3 764.7L740.8 764.7L738.3 764.7L735.8 764.7L733.3 764.7L730.8 764.7L728.3 764.7L725.8 764.7L723.3 764.7L720.8 764.7L718.3 764.7L715.8 764.7L713.3 764.7L710.8 764.7L708.3 764.7L705.8 764.7L703.3 764.7L700.8 764.7L698.3 764.7L695.8 764.7L693.3 764.7L690.8 764.7L688.3 764.7L685.8 764.7L683.3 764.7L680.8 764.7L678.3 764.7L675.8 764.7L673.3 764.7L670.8 764.7L668.3 764.7L665.8 764.7L663.3 764.7L660.8 764.7L658.3 764.7L655.8 764.7L653.3 764.7L650.8 764.7L648.3 764.7L645.8 764.7L643.3 764.7L640.8 764.7L638.3 764.7L635.8 764.7L633.3 764.7L630.8 764.7L628.3 764.7L625.8 764.7L623.3 764.7L620.8 764.7L618.3 764.7L615.8 764.7L613.3 764.7L610.8 764.7L608.3 764.7L605.8 764.7L603.3 764.7L600.8 764.7L598.3 764.7L595.8 764.7L593.3 764.7L590.8 764.7L588.3 764.7L585.8 764.7L583.3 764.7L580.8 764.7L578.3 764.7L575.8 764.7L573.3 764.7L570.8 764.7L568.3 764.7L565.8 764.7L563.3 764.7L560.8 764.7L558.3 764.7L555.8 764.7L553.3 764.7L550.8 764.7L548.3 764.7L545.8 764.7L543.3 764.7L540.8 764.7L538.3 764.7L535.8 764.7L533.3 764.7L530.8 764.7L528.3 764.7L525.8 764.7L523.3 764.7L520.8 764.7L518.3 764.7L515.8 764.7L513.3 764.7L510.8 764.7L508.3 764.7L505.8 764.7L503.3 764.7L500.8 764.7L498.3 764.7L495.8 764.7L493.3 764.7L490.8 764.7L488.3 764.7L485.8 764.7L483.3 764.7L480.8 764.7L478.3 764.7L475.8 764.7L473.3 764.7L470.8 764.7L468.3 764.7L465.8 764.7L463.3 764.7L460.8 764.7L458.3 764.7L455.8 764.7L453.3 764.7L450.8 764.7L448.3 764.7L445.8 764.7L443.3 764.7L440.8 764.7L438.3 764.7L435.8 764.7L433.3 764.7L430.8 764.7L428.3 764.7L425.8 764.7L423.3 764.7L420.8 764.7L418.3 764.7L415.8 764.7L413.3 764.7L410.8 764.7L408.3 764.7L405.8 764.7L403.3 764.7L400.8 764.7L398.3 764.7L395.8 764.7L393.3 764.7L390.8 764.7L388.3 764.7L385.8 764.7L383.3 764.7L380.8 764.7L378.3 764.7L375.8 764.7L373.3 764.7L370.8 764.7L368.3 764.7L365.8 764.7L363.3 764.7L360.8 764.7L358.3 764.7L355.8 764.7L353.3 764.7L350.8 764.7L348.3 764.7L345.8 764.7L343.3 764.7L340.8 764.7L338.3 764.7L335.8 764.7L333.3 764.7L330.8 764.7L328.3 764.7L325.8 764.7L323.3 764.7L320.8 764.7L320.1 764.7L319.5 765.69L318.9 766.67L318.3 765.69L317.7 764.7L315.8 764.7L314.3 764.7L313.85 765.08L313.4 765.46L313.3 765.37L312.95 765.08L312.5 764.7L310.8 764.7L309.9 764.7L309.45 765.04L309 765.37L308.55 765.04L308.3 764.85L308.1 764.7L305.8 764.7L304.9 764.7L304.45 764.95L304 765.2L303.55 764.95L303.3 764.81L303.1 764.7L300.8 764.7L300.3 764.7L299.7 765.77L299.1 766.84L298.5 765.77L298.3 765.41L297.9 764.7L295.8 764.7L295.2 764.7L294.75 765.04L294.3 765.37L293.85 765.04L293.4 764.7L293.3 764.7L291.9 764.7L291.45 764.97L291 765.25L290.8 765.12L290.55 764.97L290.1 764.7L288.3 764.7L285.8 764.7L283.3 764.7L280.8 764.7L278.3 764.7L275.8 764.7L273.3 764.7L270.8 764.7L268.3 764.7L265.8 764.7L263.3 764.7L260.8 764.7L258.3 764.7L255.8 764.7L253.7 764.7L253.3 765.73L252.9 766.76L252.1 768.82L251.3 766.76L250.8 765.47L250.5 764.7L248.3 764.7L248.2 764.7L247.75 765.12L247.3 765.54L246.85 765.12L246.4 764.7L245.8 764.7L245.3 764.7L244.9 765.01L244.5 765.33L244.1 765.01L243.7 764.7L243.3 764.7L241.9 764.7L241.45 765.04L241 765.37L240.8 765.22L240.55 765.04L240.1 764.7L238.3 764.7L236.7 764.7L236.2 765.44L235.8 766.02L235.7 766.17L235.2 765.44L234.7 764.7L233.3 764.7L230.8 764.7L230.3 765.44L229.8 766.17L229.3 765.44L228.8 764.7L228.3 764.7L225.8 764.7L223.3 764.7L220.8 764.7L218.3 764.7L215.8 764.7L213.3 764.7L210.8 764.7L210.5 764.7L209.75 767.18L209 769.66L208.3 767.34L208.25 767.18L207.5 764.7L205.8 764.7L203.3 764.7L200.8 764.7L198.3 764.7L195.8 764.7L193.3 764.7L190.8 764.7L188.3 764.7L187.5 764.7L186.45 767.35L185.8 768.98L185.4 769.99L184.35 767.35L183.3 764.7L182.3 764.7L181.85 765.33L181.4 765.96L180.95 765.33L180.8 765.12Z" fill="#aa966c"/>
<path d="M180.8 765.12L180.95 765.33L181.4 765.96L181.85 765.33L182.3 764.7L183.3 764.7L184.35 767.35L185.4 769.99L185.8 768.98L186.45 767.35L187.5 764.7L188.3 764.7L190.8 764.7L193.3 764.7L195.8 764.7L198.3 764.7L200.8 764.7L203.3 764.7L205.8 764.7L207.5 764.7L208.25 767.18L208.3 767.34L209 769.66L209.75 767.18L210.5 764.7L210.8 764.7L213.3 764.7L215.8 764.7L218.3 764.7L220.8 764.7L223.3 764.7L225.8 764.7L228.3 764.7L228.8 764.7L229.3 765.44L229.8 766.17L230.3 765.44L230.8 764.7L233.3 764.7L234.7 764.7L235.2 765.44L235.7 766.17L235.8 766.02L236.2 765.44L236.7 764.7L238.3 764.7L240.1 764.7L240.55 765.04L240.8 765.22L241 765.37L241.45 765.04L241.9 764.7L243.3 764.7L243.7 764.7L244.1 765.01L244.5 765.33L244.9 765.01L245.3 764.7L245.8 764.7L246.4 764.7L246.85 765.12L247.3 765.54L247.75 765.12L248.2 764.7L248.3 764.7L250.5 764.7L250.8 765.47L251.3 766.76L252.1 768.82L252.9 766.76L253.3 765.73L253.7 764.7L255.8 764.7L258.3 764.7L260.8 764.7L263.3 764.7L265.8 764.7L268.3 764.7L270.8 764.7L273.3 764.7L275.8 764.7L278.3 764.7L280.8 764.7L283.3 764.7L285.8 764.7L288.3 764.7L290.1 764.7L290.55 764.97L290.8 765.12L291 765.25L291.45 764.97L291.9 764.7L293.3 764.7L293.4 764.7L293.85 765.04L294.3 765.37L294.75 765.04L295.2 764.7L295.8 764.7L297.9 764.7L298.3 765.41L298.5 765.77L299.1 766.84L299.7 765.77L300.3 764.7L300.8 764.7L303.1 764.7L303.3 764.81L303.55 764.95L304 765.2L304.45 764.95L304.9 764.7L305.8 764.7L308.1 764.7L308.3 764.85L308.55 765.04L309 765.37L309.45 765.04L309.9 764.7L310.8 764.7L312.5 764.7L312.95 765.08L313.3 765.37L313.4 765.46L313.85 765.08L314.3 764.7L315.8 764.7L317.7 764.7L318.3 765.69L318.9 766.67L319.5 765.69L320.1 764.7L320.8 764.7L323.3 764.7L325.8 764.7L328.3 764.7L330.8 764.7L333.3 764.7L335.8 764.7L338.3 764.7L340.8 764.7L343.3 764.7L345.8 764.7L348.3 764.7L350.8 764.7L353.3 764.7L355.8 764.7L358.3 764.7L360.8 764.7L363.3 764.7L365.8 764.7L368.3 764.7L370.8 764.7L373.3 764.7L375.8 764.7L378.3 764.7L380.8 764.7L383.3 764.7L385.8 764.7L388.3 764.7L390.8 764.7L393.3 764.7L395.8 764.7L398.3 764.7L400.8 764.7L403.3 764.7L405.8 764.7L408.3 764.7L410.8 764.7L413.3 764.7L415.8 764.7L418.3 764.7L420.8 764.7L423.3 764.7L425.8 764.7L428.3 764.7L430.8 764.7L433.3 764.7L435.8 764.7L438.3 764.7L440.8 764.7L443.3 764.7L445.8 764.7L448.3 764.7L450.8 764.7L453.3 764.7L455.8 764.7L458.3 764.7L460.8 764.7L463.3 764.7L465.8 764.7L468.3 764.7L470.8 764.7L473.3 764.7L475.8 764.7L478.3 764.7L480.8 764.7L483.3 764.7L485.8 764.7L488.3 764.7L490.8 764.7L493.3 764.7L495.8 764.7L498.3 764.7L500.8 764.7L503.3 764.7L505.8 764.7L508.3 764.7L510.8 764.7L513.3 764.7L515.8 764.7L518.3 764.7L520.8 764.7L523.3 764.7L525.8 764.7L528.3 764.7L530.8 764.7L533.3 764.7L535.8 764.7L538.3 764.7L540.8 764.7L543.3 764.7L545.8 764.7L548.3 764.7L550.8 764.7L553.3 764.7L555.8 764.7L558.3 764.7L560.8 764.7L563.3 764.7L565.8 764.7L568.3 764.7L570.8 764.7L573.3 764.7L575.8 764.7L578.3 764.7L580.8 764.7L583.3 764.7L585.8 764.7L588.3 764.7L590.8 764.7L593.3 764.7L595.8 764.7L598.3 764.7L600.8 764.7L603.3 764.7L605.8 764.7L608.3 764.7L610.8 764.7L613.3 764.7L615.8 764.7L618.3 764.7L620.8 764.7L623.3 764.7L625.8 764.7L628.3 764.7L630.8 764.7L633.3 764.7L635.8 764.7L638.3 764.7L640.8 764.7L643.3 764.7L645.8 764.7L648.3 764.7L650.8 764.7L653.3 764.7L655.8 764.7L658.3 764.7L660.8 764.7L663.3 764.7L665.8 764.7L668.3 764.7L670.8 764.7L673.3 764.7L675.8 764.7L678.3 764.7L680.8 764.7L683.3 764.7L685.8 764.7L688.3 764.7L690.8 764.7L693.3 764.7L695.8 764.7L698.3 764.7L700.8 764.7L703.3 764.7L705.8 764.7L708.3 764.7L710.8 764.7L713.3 764.7L715.8 764.7L718.3 764.7L720.8 764.7L723.3 764.7L725.8 764.7L728.3 764.7L730.8 764.7L733.3 764.7L735.8 764.7L738.3 764.7L740.8 764.7L743.3 764.7L745.8 764.7L748.3 764.7L750.8 764.7L753.3 764.7L755.8 764.7L758.3 764.7L760.8 764.7L763.3 764.7L765.8 764.7L768.3 764.7L770.8 764.7L773.3 764.7L775.8 764.7L778.3 764.7L780.8 764.7L783.3 764.7L785.8 764.7L788.3 764.7L790.8 764.7L791.4 764.7L791.9 765.04L792.4 765.37L792.9 765.04L793.3 764.77L793.4 764.7L795.8 764.7L798.3 764.7L799.5 764.7L800.05 766.09L800.6 767.47L800.8 766.97L801.15 766.09L801.6 764.95L801.7 765.17L802.25 767.77L802.9 770.83L803.3 768.95L803.55 767.77L804.2 764.7L805.8 764.7L808.3 764.7L810.8 764.7L813.3 764.7L815.8 764.7L818.3 764.7L820.8 764.7L823.3 764.7L825.8 764.7L827 764.7L827.5 764.99L828 765.29L828.3 765.11L828.5 764.99L829 764.7L830.8 764.7L831.1 764.7L831.55 765.08L832 765.46L832.45 765.08L832.9 764.7L833.3 764.7L834.6 764.7L835.05 765.25L835.5 765.79L835.8 765.43L835.95 765.25L836.4 764.7L837.1 764.7L837.55 765.16L838 765.62L838.3 765.32L838.45 765.16L838.9 764.7L840.1 764.7L840.55 765.04L840.8 765.22L841 765.37L841.45 765.04L841.9 764.7L843.3 764.7L843.5 764.7L844.1 766.19L844.7 767.68L845.3 766.19L845.8 764.95L845.9 764.7L846.3 764.7L846.75 765.2L847.2 765.71L847.65 765.2L848.1 764.7L848.2 764.7L848.3 764.85L848.7 765.46L849.2 766.21L849.7 765.46L850.2 764.7L850.7 765.39L850.8 765.53L851.2 766.09L851.7 765.39L852.2 764.7L852.6 764.7L853.05 764.97L853.3 765.12L853.5 765.25L853.95 764.97L854.4 764.7L855.8 764.7L856.1 764.7L856.7 765.71L857.3 766.72L857.9 765.71L858.3 765.04L858.5 764.7L860.1 764.7L860.55 764.95L860.8 765.09L861 765.2L861.45 764.95L861.9 764.7L863.3 764.7L865.1 764.7L865.55 764.95L865.8 765.09L866 765.2L866.45 764.95L866.9 764.7L868.3 764.7L870.8 764.7L871.1 764.7L871.55 764.95L872 765.2L872.45 764.95L872.9 764.7L873.3 764.7L874.5 764.7L875.15 766.28L875.8 767.85L876.45 766.27L877.1 764.7L878.3 764.7L879.5 764.7L879.95 765.12L880.4 765.54L880.8 765.17L880.85 765.12L881.3 764.7L883.1 764.7L883.3 764.79L883.55 764.91L884 765.12L884.45 764.91L884.9 764.7L885.8 764.7L887.4 764.7L888 766.27L888.3 767.06L888.6 767.85L889.2 766.27L889.8 764.7L890.6 764.7L890.8 765.23L891.2 766.28L891.8 767.85L892.4 766.27L893 764.7L893.3 764.7L894.1 764.7L894.55 764.95L895 765.2L895.45 764.95L895.8 764.76L895.9 764.7L898.3 764.7L900.4 764.7L900.8 764.98L900.85 765.02L901.3 765.33L901.75 765.01L902.2 764.7L903.3 764.7L905.1 764.7L905.55 764.91L905.8 765.03L906 765.12L906.45 764.91L906.9 764.7L908.3 764.7L910.8 764.7L913.3 764.7L915.8 764.7L916.8 764.7L917.3 765.04L917.8 765.37L918.3 765.04L918.8 764.7L920.1 764.7L920.55 764.91L920.8 765.03L921 765.12L921.45 764.91L921.9 764.7L923.3 764.7L924.3 764.7L924.9 766.65L925.5 768.61L925.8 767.63L926.1 766.65L926.7 764.7L928.1 764.7L928.3 764.77L928.55 764.87L929 765.04L929.45 764.87L929.9 764.7L930.8 764.7L933.3 764.7L935.8 764.7L938.3 764.7L940.8 764.7L943.3 764.7L945.8 764.7L948.3 764.7L950.8 764.7L953.3 764.7L955.8 764.7L958.3 764.7L960.8 764.7L963.3 764.7L965.8 764.7L968.3 764.7L970.8 764.7L973.3 764.7L975.8 764.7L978.3 764.7L980.8 764.7L983.3 764.7L985.8 764.7L988.3 764.7L990.8 764.7L993.3 764.7L995.8 764.7L998.3 764.7L1000.8 764.7L1003.3 764.7L1005.8 764.7L1008.3 764.7L1010.8 764.7L1012.5 764.7" fill="none" stroke="#cdc2a4" stroke-width=".8"/>
<path d="M180.8 757.48L180.95 756.97L181.4 755.47L181.85 756.94L182.3 758.6L183.3 758.63L184.35 752.47L185.4 746.6L185.8 748.94L186.45 752.72L187.5 758.44L188.3 758.52L190.8 758.44L193.3 758.72L195.8 758.68L198.3 758.42L200.8 758.79L203.3 758.79L205.8 758.66L207.5 758.65L208.25 753.06L208.3 752.65L209 747.81L209.75 753.02L210.5 758.48L210.8 758.5L213.3 758.41L215.8 758.59L218.3 758.58L220.8 758.74L223.3 758.61L225.8 758.66L228.3 758.6L228.8 758.66L229.3 757.13L229.8 755.61L230.3 757.35L230.8 758.8L233.3 758.74L234.7 758.68L235.2 757.08L235.7 755.59L235.8 755.91L236.2 756.98L236.7 758.71L238.3 758.56L240.1 758.74L240.55 757.85L240.8 757.69L241 757.34L241.45 757.7L241.9 758.48L243.3 758.76L243.7 758.59L244.1 758.14L244.5 757.26L244.9 757.78L245.3 758.65L245.8 758.71L246.4 758.51L246.85 757.53L247.3 756.73L247.75 757.89L248.2 758.7L248.3 758.45L250.5 758.5L250.8 756.83L251.3 754.12L252.1 750.12L252.9 754.17L253.3 756.47L253.7 758.58L255.8 758.48L258.3 758.69L260.8 758.45L263.3 758.66L265.8 758.45L268.3 758.57L270.8 758.49L273.3 758.51L275.8 758.79L278.3 758.72L280.8 758.52L283.3 758.75L285.8 758.48L288.3 758.56L290.1 758.74L290.55 758.06L290.8 757.51L291 757.6L291.45 757.89L291.9 758.5L293.3 758.71L293.4 758.53L293.85 757.77L294.3 756.93L294.75 757.69L295.2 758.63L295.8 758.5L297.9 758.64L298.3 757.08L298.5 756.38L299.1 754.38L299.7 756.39L300.3 758.63L300.8 758.75L303.1 758.47L303.3 758.19L303.55 758.16L304 757.53L304.45 757.9L304.9 758.48L305.8 758.7L308.1 758.78L308.3 758.19L308.55 758.13L309 757.45L309.45 757.99L309.9 758.57L310.8 758.44L312.5 758.42L312.95 757.99L313.3 757.07L313.4 757.08L313.85 757.7L314.3 758.73L315.8 758.64L317.7 758.52L318.3 756.67L318.9 755.09L319.5 756.63L320.1 758.49L320.8 758.62L323.3 758.74L325.8 758.65L328.3 758.51L330.8 758.77L333.3 758.48L335.8 758.41L338.3 758.51L340.8 758.58L343.3 758.42L345.8 758.47L348.3 758.55L350.8 758.63L353.3 758.45L355.8 758.54L358.3 758.76L360.8 758.79L363.3 758.66L365.8 758.68L368.3 758.63L370.8 758.46L373.3 758.41L375.8 758.41L378.3 758.76L380.8 758.68L383.3 758.79L385.8 758.41L388.3 758.65L390.8 758.59L393.3 758.69L395.8 758.53L398.3 758.8L400.8 758.43L403.3 758.62L405.8 758.69L408.3 758.76L410.8 758.69L413.3 758.68L415.8 758.72L418.3 758.77L420.8 758.54L423.3 758.67L425.8 758.76L428.3 758.75L430.8 758.57L433.3 758.72L435.8 758.75L438.3 758.63L440.8 758.65L443.3 758.55L445.8 758.63L448.3 758.64L450.8 758.43L453.3 758.66L455.8 758.8L458.3 758.75L460.8 758.69L463.3 758.56L465.8 758.69L468.3 758.63L470.8 758.58L473.3 758.74L475.8 758.43L478.3 758.7L480.8 758.41L483.3 758.64L485.8 758.59L488.3 758.49L490.8 758.68L493.3 758.6L495.8 758.65L498.3 758.77L500.8 758.5L503.3 758.4L505.8 758.52L508.3 758.67L510.8 758.48L513.3 758.47L515.8 758.76L518.3 758.66L520.8 758.58L523.3 758.76L525.8 758.53L528.3 758.67L530.8 758.48L533.3 758.57L535.8 758.72L538.3 758.77L540.8 758.75L543.3 758.55L545.8 758.63L548.3 758.53L550.8 758.45L553.3 758.6L555.8 758.73L558.3 758.74L560.8 758.68L563.3 758.78L565.8 758.51L568.3 758.47L570.8 758.58L573.3 758.51L575.8 758.49L578.3 758.57L580.8 758.65L583.3 758.6L585.8 758.53L588.3 758.74L590.8 758.79L593.3 758.58L595.8 758.43L598.3 758.41L600.8 758.75L603.3 758.42L605.8 758.68L608.3 758.63L610.8 758.52L613.3 758.72L615.8 758.41L618.3 758.45L620.8 758.58L623.3 758.41L625.8 758.73L628.3 758.49L630.8 758.46L633.3 758.42L635.8 758.65L638.3 758.58L640.8 758.65L643.3 758.66L645.8 758.72L648.3 758.78L650.8 758.67L653.3 758.48L655.8 758.59L658.3 758.47L660.8 758.4L663.3 758.59L665.8 758.69L668.3 758.47L670.8 758.51L673.3 758.54L675.8 758.68L678.3 758.61L680.8 758.65L683.3 758.7L685.8 758.56L688.3 758.72L690.8 758.76L693.3 758.43L695.8 758.77L698.3 758.69L700.8 758.45L703.3 758.58L705.8 758.65L708.3 758.76L710.8 758.55L713.3 758.63L715.8 758.75L718.3 758.72L720.8 758.78L723.3 758.59L725.8 758.66L728.3 758.48L730.8 758.69L733.3 758.73L735.8 758.66L738.3 758.69L740.8 758.49L743.3 758.76L745.8 758.79L748.3 758.79L750.8 758.61L753.3 758.72L755.8 758.53L758.3 758.76L760.8 758.74L763.3 758.54L765.8 758.43L768.3 758.58L770.8 758.62L773.3 758.71L775.8 758.59L778.3 758.41L780.8 758.72L783.3 758.43L785.8 758.72L788.3 758.47L790.8 758.53L791.4 758.72L791.9 757.96L792.4 757.46L792.9 758.11L793.3 758.59L793.4 758.74L795.8 758.68L798.3 758.78L799.5 758.6L800.05 755.68L800.6 752.23L800.8 753.42L801.15 755.51L801.6 757.95L801.7 757.67L802.25 752.01L802.9 745.31L803.3 749.53L803.55 751.97L804.2 758.52L805.8 758.55L808.3 758.74L810.8 758.76L813.3 758.48L815.8 758.74L818.3 758.79L820.8 758.61L823.3 758.63L825.8 758.48L827 758.61L827.5 757.95L828 757.34L828.3 757.5L828.5 758.14L829 758.61L830.8 758.56L831.1 758.72L831.55 757.88L832 757.1L832.45 757.93L832.9 758.43L833.3 758.62L834.6 758.57L835.05 757.68L835.5 756.57L835.8 757.04L835.95 757.49L836.4 758.45L837.1 758.57L837.55 757.83L838 756.96L838.3 757.39L838.45 757.63L838.9 758.48L840.1 758.65L840.55 758.02L840.8 757.29L841 757.21L841.45 757.66L841.9 758.48L843.3 758.49L843.5 758.67L844.1 755.43L844.7 752.34L845.3 755.55L845.8 757.93L845.9 758.69L846.3 758.45L846.75 757.6L847.2 756.5L847.65 757.48L848.1 758.61L848.2 758.57L848.3 758.25L848.7 757.07L849.2 755.61L849.7 756.96L850.2 758.48L850.7 757.15L850.8 756.86L851.2 755.61L851.7 757.24L852.2 758.64L852.6 758.74L853.05 757.89L853.3 757.76L853.5 757.52L853.95 758.16L854.4 758.53L855.8 758.53L856.1 758.77L856.7 756.74L857.3 755.3L857.9 757.01L858.3 757.87L858.5 758.5L860.1 758.69L860.55 757.95L860.8 757.58L861 757.63L861.45 758.02L861.9 758.72L863.3 758.45L865.1 758.56L865.55 758.17L865.8 757.63L866 757.48L866.45 758.17L866.9 758.76L868.3 758.79L870.8 758.45L871.1 758.6L871.55 758.05L872 757.3L872.45 758.02L872.9 758.48L873.3 758.43L874.5 758.44L875.15 754.41L875.8 750.62L876.45 754.61L877.1 758.63L878.3 758.46L879.5 758.47L879.95 757.58L880.4 756.94L880.8 757.8L880.85 757.87L881.3 758.44L883.1 758.42L883.3 758.6L883.55 758.18L884 757.91L884.45 758.13L884.9 758.59L885.8 758.61L887.4 758.57L888 755.54L888.3 753.76L888.6 752.48L889.2 755.64L889.8 758.47L890.6 758.58L890.8 757.66L891.2 755.46L891.8 752.28L892.4 755.37L893 758.61L893.3 758.41L894.1 758.76L894.55 758.22L895 757.68L895.45 758.24L895.8 758.54L895.9 758.56L898.3 758.64L900.4 758.6L900.8 758.35L900.85 758.22L901.3 757.5L901.75 758.26L902.2 758.7L903.3 758.71L905.1 758.73L905.55 757.96L905.8 757.83L906 757.55L906.45 758.08L906.9 758.71L908.3 758.71L910.8 758.56L913.3 758.69L915.8 758.43L916.8 758.54L917.3 757.79L917.8 756.8L918.3 757.74L918.8 758.66L920.1 758.65L920.55 757.99L920.8 758L921 757.67L921.45 758.04L921.9 758.66L923.3 758.63L924.3 758.61L924.9 754.26L925.5 750.2L925.8 752.21L926.1 754.38L926.7 758.7L928.1 758.79L928.3 758.23L928.55 758.25L929 757.9L929.45 758.1L929.9 758.56L930.8 758.42L933.3 758.48L935.8 758.55L938.3 758.44L940.8 758.5L943.3 758.76L945.8 758.62L948.3 758.6L950.8 758.79L953.3 758.63L955.8 758.8L958.3 758.66L960.8 758.72L963.3 758.43L965.8 758.64L968.3 758.7L970.8 758.42L973.3 758.77L975.8 758.46L978.3 758.59L980.8 758.47L983.3 758.6L985.8 758.64L988.3 758.42L990.8 758.78L993.3 758.57L995.8 758.61L998.3 758.64L1000.8 758.55L1003.3 758.51L1005.8 758.66L1008.3 758.62L1010.8 758.51L1012.5 758.69" fill="none" stroke="#e3b93a" stroke-width="1"/>
<path d="M180.8 760.100H1012.5" stroke="#d6c45c" stroke-width=".6" stroke-dasharray="6 3"/>
<path d="M180.8 769.52L180.95 769.98L181.4 771.33L181.85 770.01L182.3 768.5L183.3 768.47L184.35 774.93L185.4 781.1L185.8 778.65L186.45 774.68L187.5 768.66L188.3 768.58L190.8 768.66L193.3 768.38L195.8 768.42L198.3 768.68L200.8 768.31L203.3 768.31L205.8 768.44L207.5 768.45L208.25 774.54L208.3 774.99L209 780.29L209.75 774.58L210.5 768.62L210.8 768.6L213.3 768.69L215.8 768.51L218.3 768.52L220.8 768.36L223.3 768.49L225.8 768.44L228.3 768.5L228.8 768.44L229.3 770.27L229.8 772.09L230.3 770.05L230.8 768.3L233.3 768.36L234.7 768.42L235.2 770.32L235.7 772.11L235.8 771.73L236.2 770.42L236.7 768.39L238.3 768.54L240.1 768.36L240.55 769.35L240.8 769.56L241 769.96L241.45 769.5L241.9 768.62L243.3 768.34L243.7 768.51L244.1 769.06L244.5 770.04L244.9 769.42L245.3 768.45L245.8 768.39L246.4 768.59L246.85 769.67L247.3 770.57L247.75 769.31L248.2 768.4L248.3 768.65L250.5 768.6L250.8 770.5L251.3 773.58L252.1 778.18L252.9 773.53L253.3 770.93L253.7 768.52L255.8 768.62L258.3 768.41L260.8 768.65L263.3 768.44L265.8 768.65L268.3 768.53L270.8 768.61L273.3 768.59L275.8 768.31L278.3 768.38L280.8 768.58L283.3 768.35L285.8 768.62L288.3 768.54L290.1 768.36L290.55 769.09L290.8 769.67L291 769.6L291.45 769.26L291.9 768.6L293.3 768.39L293.4 768.57L293.85 769.38L294.3 770.27L294.75 769.46L295.2 768.47L295.8 768.6L297.9 768.46L298.3 770.25L298.5 771.07L299.1 773.42L299.7 771.06L300.3 768.47L300.8 768.35L303.1 768.63L303.3 768.91L303.55 768.94L304 769.57L304.45 769.2L304.9 768.62L305.8 768.4L308.1 768.32L308.3 768.98L308.55 769.12L309 769.95L309.45 769.26L309.9 768.53L310.8 768.66L312.5 768.68L312.95 769.21L313.3 770.2L313.4 770.22L313.85 769.5L314.3 768.37L315.8 768.46L317.7 768.58L318.3 770.98L318.9 773.11L319.5 771.02L320.1 768.61L320.8 768.48L323.3 768.36L325.8 768.45L328.3 768.59L330.8 768.33L333.3 768.62L335.8 768.69L338.3 768.59L340.8 768.52L343.3 768.68L345.8 768.63L348.3 768.55L350.8 768.47L353.3 768.65L355.8 768.56L358.3 768.34L360.8 768.31L363.3 768.44L365.8 768.42L368.3 768.47L370.8 768.64L373.3 768.69L375.8 768.69L378.3 768.34L380.8 768.42L383.3 768.31L385.8 768.69L388.3 768.45L390.8 768.51L393.3 768.41L395.8 768.57L398.3 768.3L400.8 768.67L403.3 768.48L405.8 768.41L408.3 768.34L410.8 768.41L413.3 768.42L415.8 768.38L418.3 768.33L420.8 768.56L423.3 768.43L425.8 768.34L428.3 768.35L430.8 768.53L433.3 768.38L435.8 768.35L438.3 768.47L440.8 768.45L443.3 768.55L445.8 768.47L448.3 768.46L450.8 768.67L453.3 768.44L455.8 768.3L458.3 768.35L460.8 768.41L463.3 768.54L465.8 768.41L468.3 768.47L470.8 768.52L473.3 768.36L475.8 768.67L478.3 768.4L480.8 768.69L483.3 768.46L485.8 768.51L488.3 768.61L490.8 768.42L493.3 768.5L495.8 768.45L498.3 768.33L500.8 768.6L503.3 768.7L505.8 768.58L508.3 768.43L510.8 768.62L513.3 768.63L515.8 768.34L518.3 768.44L520.8 768.52L523.3 768.34L525.8 768.57L528.3 768.43L530.8 768.62L533.3 768.53L535.8 768.38L538.3 768.33L540.8 768.35L543.3 768.55L545.8 768.47L548.3 768.57L550.8 768.65L553.3 768.5L555.8 768.37L558.3 768.36L560.8 768.42L563.3 768.32L565.8 768.59L568.3 768.63L570.8 768.52L573.3 768.59L575.8 768.61L578.3 768.53L580.8 768.45L583.3 768.5L585.8 768.57L588.3 768.36L590.8 768.31L593.3 768.52L595.8 768.67L598.3 768.69L600.8 768.35L603.3 768.68L605.8 768.42L608.3 768.47L610.8 768.58L613.3 768.38L615.8 768.69L618.3 768.65L620.8 768.52L623.3 768.69L625.8 768.37L628.3 768.61L630.8 768.64L633.3 768.68L635.8 768.45L638.3 768.52L640.8 768.45L643.3 768.44L645.8 768.38L648.3 768.32L650.8 768.43L653.3 768.62L655.8 768.51L658.3 768.63L660.8 768.7L663.3 768.51L665.8 768.41L668.3 768.63L670.8 768.59L673.3 768.56L675.8 768.42L678.3 768.49L680.8 768.45L683.3 768.4L685.8 768.54L688.3 768.38L690.8 768.34L693.3 768.67L695.8 768.33L698.3 768.41L700.8 768.65L703.3 768.52L705.8 768.45L708.3 768.34L710.8 768.55L713.3 768.47L715.8 768.35L718.3 768.38L720.8 768.32L723.3 768.51L725.8 768.44L728.3 768.62L730.8 768.41L733.3 768.37L735.8 768.44L738.3 768.41L740.8 768.61L743.3 768.34L745.8 768.31L748.3 768.31L750.8 768.49L753.3 768.38L755.8 768.57L758.3 768.34L760.8 768.36L763.3 768.56L765.8 768.67L768.3 768.52L770.8 768.48L773.3 768.39L775.8 768.51L778.3 768.69L780.8 768.38L783.3 768.67L785.8 768.38L788.3 768.63L790.8 768.57L791.4 768.38L791.9 769.44L792.4 770.24L792.9 769.29L793.3 768.57L793.4 768.36L795.8 768.42L798.3 768.32L799.5 768.5L800.05 771.62L800.6 775.27L800.8 774.01L801.15 771.79L801.6 769.18L801.7 769.53L802.25 775.74L802.9 783.09L803.3 778.47L803.55 775.78L804.2 768.58L805.8 768.55L808.3 768.36L810.8 768.34L813.3 768.62L815.8 768.36L818.3 768.31L820.8 768.49L823.3 768.47L825.8 768.62L827 768.49L827.5 769.2L828 769.86L828.3 769.67L828.5 769.01L829 768.49L830.8 768.54L831.1 768.38L831.55 769.37L832 770.3L832.45 769.32L832.9 768.67L833.3 768.48L834.6 768.53L835.05 769.62L835.5 770.93L835.8 770.33L835.95 769.81L836.4 768.65L837.1 768.53L837.55 769.47L838 770.54L838.3 769.98L838.45 769.67L838.9 768.62L840.1 768.45L840.55 769.13L840.8 769.89L841 769.99L841.45 769.49L841.9 768.62L843.3 768.61L843.5 768.43L844.1 772.12L844.7 775.66L845.3 772L845.8 769.25L845.9 768.41L846.3 768.65L846.75 769.7L847.2 771L847.65 769.82L848.1 768.49L848.2 768.53L848.3 768.91L848.7 770.33L849.2 772.09L849.7 770.44L850.2 768.62L850.7 770.1L850.8 770.42L851.2 771.79L851.7 770.01L852.2 768.46L852.6 768.36L853.05 769.26L853.3 769.41L853.5 769.68L853.95 768.99L854.4 768.57L855.8 768.57L856.1 768.33L856.7 771.01L857.3 773.1L857.9 770.74L858.3 769.45L858.5 768.6L860.1 768.41L860.55 769.2L860.8 769.59L861 769.57L861.45 769.13L861.9 768.38L863.3 768.65L865.1 768.54L865.55 769.03L865.8 769.63L866 769.82L866.45 769.03L866.9 768.34L868.3 768.31L870.8 768.65L871.1 768.5L871.55 769L872 769.7L872.45 769.03L872.9 768.62L873.3 768.67L874.5 768.66L875.15 772.44L875.8 775.98L876.45 772.24L877.1 768.47L878.3 768.64L879.5 768.63L879.95 769.62L880.4 770.36L880.8 769.41L880.85 769.33L881.3 768.66L883.1 768.68L883.3 768.54L883.55 769.02L884 769.39L884.45 769.07L884.9 768.51L885.8 768.49L887.4 768.53L888 772.21L888.3 774.32L888.6 775.92L889.2 772.11L889.8 768.63L890.6 768.52L890.8 769.65L891.2 772.29L891.8 776.12L892.4 772.38L893 768.49L893.3 768.69L894.1 768.34L894.55 768.98L895 769.62L895.45 768.96L895.8 768.58L895.9 768.54L898.3 768.46L900.4 768.5L900.8 768.97L900.85 769.13L901.3 770.1L901.75 769.09L902.2 768.4L903.3 768.39L905.1 768.37L905.55 769.04L905.8 769.12L906 769.35L906.45 768.92L906.9 768.39L908.3 768.39L910.8 768.54L913.3 768.41L915.8 768.67L916.8 768.56L917.3 769.31L917.8 770.3L918.3 769.36L918.8 768.44L920.1 768.45L920.55 769.11L920.8 769.1L921 769.43L921.45 769.06L921.9 768.44L923.3 768.47L924.3 768.49L924.9 773.19L925.5 777.6L925.8 775.42L926.1 773.07L926.7 768.4L928.1 768.31L928.3 768.87L928.55 768.85L929 769.2L929.45 769L929.9 768.54L930.8 768.68L933.3 768.62L935.8 768.55L938.3 768.66L940.8 768.6L943.3 768.34L945.8 768.48L948.3 768.5L950.8 768.31L953.3 768.47L955.8 768.3L958.3 768.44L960.8 768.38L963.3 768.67L965.8 768.46L968.3 768.4L970.8 768.68L973.3 768.33L975.8 768.64L978.3 768.51L980.8 768.63L983.3 768.5L985.8 768.46L988.3 768.68L990.8 768.32L993.3 768.53L995.8 768.49L998.3 768.46L1000.8 768.55L1003.3 768.59L1005.8 768.44L1008.3 768.48L1010.8 768.59L1012.5 768.41" fill="none" stroke="#ec8843" stroke-width="1.100"/>
<path d="M874.9 752L875.4499999999999 734.200L876.15 734.200L876.6999999999999 752Z" fill="#6fa56e" stroke="#7eb26d" stroke-width=".8"/>
<path d="M924.6 752L925.15 734.200L925.85 734.200L926.4 752Z" fill="#6fa56e" stroke="#7eb26d" stroke-width=".8"/>
<path d="M900.300 758L901.300 755.600L902.300 758M909.600 758L910.500 752.400L911.500 757L912.800 755.300L913.800 758" fill="none" stroke="#7eb26d" stroke-width="1.100"/>
<path d="M181.100 768V798.900" stroke="#58a9be" stroke-width="1.300"/>
<path d="M898.200 769L900 771L902.500 788.400L904 776L904.900 780.400L906.200 770L908 771L909.200 772L910.500 807.600L911.800 778L913.100 803.600L914.300 771L915 769Z" fill="rgba(88,188,214,.45)" stroke="#58bcd6" stroke-width="1.100" stroke-linejoin="round"/>
<rect x="898.500" y="764.500" width="16" height="4.200" fill="#a8916f"/>
<path d="M1099.7 717.2V857.6M1170.82 717.2V857.6M1241.94 717.2V857.6M1313.06 717.2V857.6M1384.18 717.2V857.6M1455.3 717.2V857.6M1526.42 717.2V857.6M1597.54 717.2V857.6M1668.66 717.2V857.6M1739.78 717.2V857.6M1810.9 717.2V857.6M1882.02 717.2V857.6M1081.2 717.2H1934.2M1081.2 752.3H1934.2M1081.2 787.4H1934.2M1081.2 822.5H1934.2M1081.2 857.6H1934.2" stroke="#38383b" stroke-width="1" fill="none"/>
<path d="M1563.200 687.200h7.200l-3.600 4z" fill="#b0b0b0"/>
<path d="M1081.2 847H1168.5V846.800H1525.5V846.500H1861V844.700H1934.2V858.2H1081.2Z" fill="#7ba57f"/>
<rect x="1081.2" y="847" width="87.3" height="3.300" fill="#bfae4a"/>
<path d="M1081.2 847.400H1168.5" stroke="#d8c860" stroke-width=".6" stroke-dasharray="5 3"/>
<path d="M1081.2 850.700H1168.5" stroke="#86d2c2" stroke-width=".9"/>
<path d="M1168.5 846.800H1525.5V846.500H1861V848.100H1168.5Z" fill="#82d0c2"/>
<path d="M1168.5 848.500H1861" stroke="#a3cb9c" stroke-width=".8"/>
<path d="M1861 844.700H1934.2V846.400H1861Z" fill="#4f9db2"/>
<path d="M1861 846.800H1934.2" stroke="#3a7d84" stroke-width=".9"/>
<path d="M1861 847.800H1934.2" stroke="#a3cb9c" stroke-width=".8"/>
<rect x="1081.2" y="856.200" width="853" height="2.100" fill="#bfa066"/>
<path d="M1081.2 858.500H1934.2" stroke="#5e3620" stroke-width=".8"/>
<path d="M128 925l3.400 3.400l-3.400 3.400" fill="none" stroke="#c0c0c0" stroke-width="1.400"/>
<rect x="1946.5" y="921.2" width="1.600" height="1.600" fill="#505055"/>
<rect x="1951.3" y="921.2" width="1.600" height="1.600" fill="#505055"/>
<rect x="1946.5" y="925.05" width="1.600" height="1.600" fill="#505055"/>
<rect x="1951.3" y="925.05" width="1.600" height="1.600" fill="#505055"/>
<rect x="1946.5" y="928.9" width="1.600" height="1.600" fill="#505055"/>
<rect x="1951.3" y="928.9" width="1.600" height="1.600" fill="#505055"/>
<rect x="1946.5" y="932.75" width="1.600" height="1.600" fill="#505055"/>
<rect x="1951.3" y="932.75" width="1.600" height="1.600" fill="#505055"/>
<path d="M128 960l3.400 3.400l-3.400 3.400" fill="none" stroke="#c0c0c0" stroke-width="1.400"/>
<rect x="1946.5" y="956.2" width="1.600" height="1.600" fill="#505055"/>
<rect x="1951.3" y="956.2" width="1.600" height="1.600" fill="#505055"/>
<rect x="1946.5" y="960.05" width="1.600" height="1.600" fill="#505055"/>
<rect x="1951.3" y="960.05" width="1.600" height="1.600" fill="#505055"/>
<rect x="1946.5" y="963.9" width="1.600" height="1.600" fill="#505055"/>
<rect x="1951.3" y="963.9" width="1.600" height="1.600" fill="#505055"/>
<rect x="1946.5" y="967.75" width="1.600" height="1.600" fill="#505055"/>
<rect x="1951.3" y="967.75" width="1.600" height="1.600" fill="#505055"/>
<path d="M128 993.7l3.400 3.400l-3.400 3.400" fill="none" stroke="#c0c0c0" stroke-width="1.400"/>
<rect x="1946.5" y="990.4" width="1.600" height="1.600" fill="#505055"/>
<rect x="1951.3" y="990.4" width="1.600" height="1.600" fill="#505055"/>
<rect x="1946.5" y="994.25" width="1.600" height="1.600" fill="#505055"/>
<rect x="1951.3" y="994.25" width="1.600" height="1.600" fill="#505055"/>
<rect x="1946.5" y="998.1" width="1.600" height="1.600" fill="#505055"/>
<rect x="1951.3" y="998.1" width="1.600" height="1.600" fill="#505055"/>
<rect x="1946.5" y="1001.95" width="1.600" height="1.600" fill="#505055"/>
<rect x="1951.3" y="1001.95" width="1.600" height="1.600" fill="#505055"/>
<path d="M128 1027.7l3.400 3.400l-3.400 3.400" fill="none" stroke="#c0c0c0" stroke-width="1.400"/>
<rect x="1946.5" y="1024.4" width="1.600" height="1.600" fill="#505055"/>
<rect x="1951.3" y="1024.4" width="1.600" height="1.600" fill="#505055"/>
<rect x="1946.5" y="1028.25" width="1.600" height="1.600" fill="#505055"/>
<rect x="1951.3" y="1028.25" width="1.600" height="1.600" fill="#505055"/>
<rect x="1946.5" y="1032.1" width="1.600" height="1.600" fill="#505055"/>
<rect x="1951.3" y="1032.1" width="1.600" height="1.600" fill="#505055"/>
<rect x="1946.5" y="1035.95" width="1.600" height="1.600" fill="#505055"/>
<rect x="1951.3" y="1035.95" width="1.600" height="1.600" fill="#505055"/>
<path d="M128 1061.8l3.400 3.400l-3.400 3.400" fill="none" stroke="#c0c0c0" stroke-width="1.400"/>
<rect x="1946.5" y="1058.5" width="1.600" height="1.600" fill="#505055"/>
<rect x="1951.3" y="1058.5" width="1.600" height="1.600" fill="#505055"/>
<rect x="1946.5" y="1062.35" width="1.600" height="1.600" fill="#505055"/>
<rect x="1951.3" y="1062.35" width="1.600" height="1.600" fill="#505055"/>
<rect x="1946.5" y="1066.2" width="1.600" height="1.600" fill="#505055"/>
<rect x="1951.3" y="1066.2" width="1.600" height="1.600" fill="#505055"/>
<rect x="1946.5" y="1070.05" width="1.600" height="1.600" fill="#505055"/>
<rect x="1951.3" y="1070.05" width="1.600" height="1.600" fill="#505055"/></svg>
</div></div>
</body></html>
